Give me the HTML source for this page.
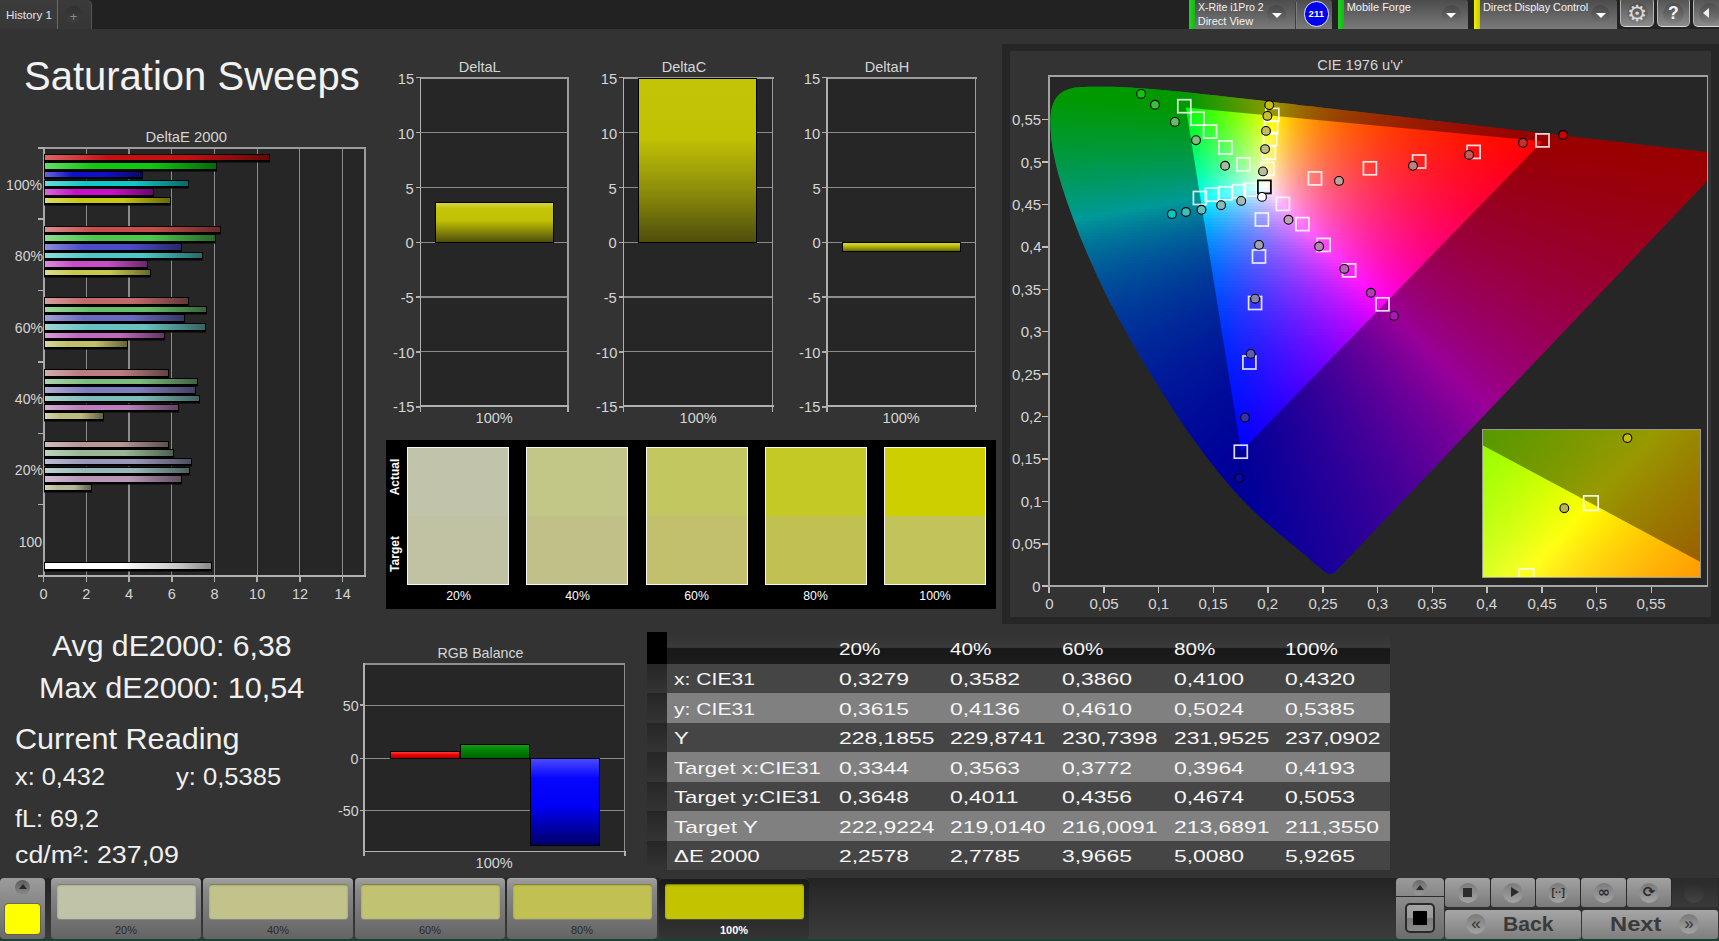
<!DOCTYPE html>
<html><head><meta charset="utf-8"><title>Saturation Sweeps</title>
<style>
html,body{margin:0;padding:0}
body{width:1719px;height:941px;position:relative;overflow:hidden;background:#333;font-family:"Liberation Sans",sans-serif}
.b{position:absolute;display:block}
.t{position:absolute;display:block;white-space:nowrap;line-height:1}
.rows{position:absolute;left:0;top:0;width:100%;height:100%}
.rows i{position:absolute;display:block;height:3px}
</style></head><body>
<div class="b" style="left:0.0px;top:0.0px;width:1719.0px;height:29.0px;background:#222"></div>
<div class="b" style="left:0.0px;top:0.0px;width:57.0px;height:29.0px;background:linear-gradient(#3c3c3c,#383838)"></div>
<div class="b" style="left:57.0px;top:0.0px;width:1.0px;height:29.0px;background:#6a6a6a"></div>
<div class="b" style="left:58.0px;top:0.0px;width:33.0px;height:29.0px;background:linear-gradient(#3a3a3a,#363636);border-top-right-radius:5px;border-right:1px solid #555"></div>
<div class="b" style="left:65.0px;top:6.0px;width:17.0px;height:17.0px;border-radius:50%;background:linear-gradient(#303030,#3e3e3e)"></div>
<span class="t" style="left:69.7px;top:9.5px;font-size:13px;color:#888;">+</span>
<span class="t" style="left:5.5px;top:9.6px;font-size:11.5px;color:#e4e4e4;transform:scaleX(1.014);transform-origin:0 50%;">History 1</span>
<div class="b" style="left:1189.0px;top:0.0px;width:143.0px;height:29.0px;background:linear-gradient(#4c4c4c,#7a7a7a);border-top-right-radius:2px"></div>
<div class="b" style="left:1189.0px;top:0.0px;width:6.0px;height:29.0px;background:linear-gradient(90deg,#1fd31f,#17b817)"></div>
<div class="b" style="left:1267.0px;top:4.5px;width:19.0px;height:19.0px;border-radius:50%;background:linear-gradient(#474747,#5c5c5c 55%,#747474)"></div>
<div class="b" style="left:1271.5px;top:12.5px;border-left:5px solid transparent;border-right:5px solid transparent;border-top:5.6px solid #fff"></div>
<div class="b" style="left:1295.0px;top:2.0px;width:1.0px;height:27.0px;background:#3e3e3e"></div>
<div class="b" style="left:1296.0px;top:2.0px;width:1.0px;height:27.0px;background:#7c7c7c"></div>
<span class="t" style="left:1197.7px;top:1.7px;font-size:11px;color:#f2f2f2;transform:scaleX(0.957);transform-origin:0 50%;">X-Rite i1Pro 2</span>
<span class="t" style="left:1197.7px;top:15.9px;font-size:11px;color:#f2f2f2;">Direct View</span>
<div class="b" style="left:1303.5px;top:1.0px;width:25.5px;height:25.5px;border-radius:50%;background:#0000f0;border:1.2px solid #e8e8ff;box-sizing:border-box"></div>
<span class="t" style="left:1308.6px;top:9.4px;font-size:9.5px;color:#fff;font-weight:bold;">211</span>
<div class="b" style="left:1338.0px;top:0.0px;width:129.5px;height:29.0px;background:linear-gradient(#4c4c4c,#7a7a7a);border-top-right-radius:2px"></div>
<div class="b" style="left:1338.0px;top:0.0px;width:6.0px;height:29.0px;background:linear-gradient(90deg,#1fd31f,#17b817)"></div>
<div class="b" style="left:1441.5px;top:4.5px;width:19.0px;height:19.0px;border-radius:50%;background:linear-gradient(#474747,#5c5c5c 55%,#747474)"></div>
<div class="b" style="left:1446px;top:12.5px;border-left:5px solid transparent;border-right:5px solid transparent;border-top:5.6px solid #fff"></div>
<span class="t" style="left:1346.7px;top:1.7px;font-size:11px;color:#f2f2f2;">Mobile Forge</span>
<div class="b" style="left:1473.5px;top:0.0px;width:143.5px;height:29.0px;background:linear-gradient(#4c4c4c,#7a7a7a);border-top-right-radius:2px"></div>
<div class="b" style="left:1473.5px;top:0.0px;width:6.0px;height:29.0px;background:linear-gradient(90deg,#f0f000,#c8c800)"></div>
<div class="b" style="left:1591.2px;top:4.5px;width:19.0px;height:19.0px;border-radius:50%;background:linear-gradient(#474747,#5c5c5c 55%,#747474)"></div>
<div class="b" style="left:1595.7px;top:12.5px;border-left:5px solid transparent;border-right:5px solid transparent;border-top:5.6px solid #fff"></div>
<span class="t" style="left:1482.5px;top:1.7px;font-size:11px;color:#f2f2f2;transform:scaleX(0.989);transform-origin:0 50%;">Direct Display Control</span>
<div class="b" style="left:1620.0px;top:-3.0px;width:33.5px;height:30.0px;background:linear-gradient(#565656 10%,#8c8c8c);border:1.2px solid #b4b4b4;border-bottom-color:#dadada;border-radius:5px;box-sizing:border-box"></div>
<div class="b" style="left:1626.5px;top:2.5px;width:21.0px;height:21.0px;border-radius:50%;background:linear-gradient(#4e4e4e,#666 55%,#828282)"></div>
<div class="b" style="left:1656.5px;top:-3.0px;width:33.5px;height:30.0px;background:linear-gradient(#565656 10%,#8c8c8c);border:1.2px solid #b4b4b4;border-bottom-color:#dadada;border-radius:5px;box-sizing:border-box"></div>
<div class="b" style="left:1663.0px;top:2.5px;width:21.0px;height:21.0px;border-radius:50%;background:linear-gradient(#4e4e4e,#666 55%,#828282)"></div>
<div class="b" style="left:1692.5px;top:-3.0px;width:33.5px;height:30.0px;background:linear-gradient(#565656 10%,#8c8c8c);border:1.2px solid #b4b4b4;border-bottom-color:#dadada;border-radius:5px;box-sizing:border-box"></div>
<div class="b" style="left:1699.0px;top:2.5px;width:21.0px;height:21.0px;border-radius:50%;background:linear-gradient(#4e4e4e,#666 55%,#828282)"></div>
<span class="t" style="left:1625px;top:1.5px;font-size:22.5px;line-height:22px;width:24px;text-align:center;color:#d8d8d8;font-family:'DejaVu Sans',sans-serif">⚙</span>
<span class="t" style="left:1668.0px;top:4.8px;font-size:17.5px;color:#f4f4f4;font-weight:bold;">?</span>
<div class="b" style="left:1702.8px;top:7.6px;border-top:5px solid transparent;border-bottom:5px solid transparent;border-right:6px solid #f0f0f0"></div>
<span class="t" style="left:24.0px;top:55.6px;font-size:40px;color:#f2f2f2;">Saturation Sweeps</span>
<div class="b" style="left:45.0px;top:149.0px;width:319.5px;height:426.5px;background:#262626"></div>
<div class="b" style="left:85.7px;top:149.0px;width:1.2px;height:426.5px;background:#8c8c8c"></div>
<div class="b" style="left:128.4px;top:149.0px;width:1.2px;height:426.5px;background:#8c8c8c"></div>
<div class="b" style="left:171.2px;top:149.0px;width:1.2px;height:426.5px;background:#8c8c8c"></div>
<div class="b" style="left:213.9px;top:149.0px;width:1.2px;height:426.5px;background:#8c8c8c"></div>
<div class="b" style="left:256.6px;top:149.0px;width:1.2px;height:426.5px;background:#8c8c8c"></div>
<div class="b" style="left:299.3px;top:149.0px;width:1.2px;height:426.5px;background:#8c8c8c"></div>
<div class="b" style="left:342.0px;top:149.0px;width:1.2px;height:426.5px;background:#8c8c8c"></div>
<div class="b" style="left:43.0px;top:147.0px;width:323.0px;height:2.0px;background:#9c9c9c"></div>
<div class="b" style="left:364.2px;top:147.0px;width:1.8px;height:430.0px;background:#9c9c9c"></div>
<div class="b" style="left:43.2px;top:147.0px;width:1.7px;height:430.0px;background:#a8a8a8"></div>
<div class="b" style="left:43.0px;top:575.2px;width:323.0px;height:2.0px;background:#b0b0b0"></div>
<div class="b" style="left:38.0px;top:147.0px;width:6.0px;height:1.6px;background:#b0b0b0"></div>
<div class="b" style="left:38.0px;top:218.4px;width:6.0px;height:1.6px;background:#b0b0b0"></div>
<div class="b" style="left:38.0px;top:289.7px;width:6.0px;height:1.6px;background:#b0b0b0"></div>
<div class="b" style="left:38.0px;top:361.1px;width:6.0px;height:1.6px;background:#b0b0b0"></div>
<div class="b" style="left:38.0px;top:432.5px;width:6.0px;height:1.6px;background:#b0b0b0"></div>
<div class="b" style="left:38.0px;top:503.9px;width:6.0px;height:1.6px;background:#b0b0b0"></div>
<div class="b" style="left:38.0px;top:575.2px;width:6.0px;height:1.6px;background:#b0b0b0"></div>
<div class="b" style="left:42.8px;top:577.0px;width:1.6px;height:5.0px;background:#b0b0b0"></div>
<span class="t" style="left:39.6px;top:587.0px;font-size:14.5px;color:#d6d6d6;">0</span>
<div class="b" style="left:85.5px;top:577.0px;width:1.6px;height:5.0px;background:#b0b0b0"></div>
<span class="t" style="left:82.3px;top:587.0px;font-size:14.5px;color:#d6d6d6;">2</span>
<div class="b" style="left:128.2px;top:577.0px;width:1.6px;height:5.0px;background:#b0b0b0"></div>
<span class="t" style="left:125.0px;top:587.0px;font-size:14.5px;color:#d6d6d6;">4</span>
<div class="b" style="left:171.0px;top:577.0px;width:1.6px;height:5.0px;background:#b0b0b0"></div>
<span class="t" style="left:167.7px;top:587.0px;font-size:14.5px;color:#d6d6d6;">6</span>
<div class="b" style="left:213.7px;top:577.0px;width:1.6px;height:5.0px;background:#b0b0b0"></div>
<span class="t" style="left:210.4px;top:587.0px;font-size:14.5px;color:#d6d6d6;">8</span>
<div class="b" style="left:256.4px;top:577.0px;width:1.6px;height:5.0px;background:#b0b0b0"></div>
<span class="t" style="left:249.1px;top:587.0px;font-size:14.5px;color:#d6d6d6;">10</span>
<div class="b" style="left:299.1px;top:577.0px;width:1.6px;height:5.0px;background:#b0b0b0"></div>
<span class="t" style="left:291.9px;top:587.0px;font-size:14.5px;color:#d6d6d6;">12</span>
<div class="b" style="left:341.8px;top:577.0px;width:1.6px;height:5.0px;background:#b0b0b0"></div>
<span class="t" style="left:334.6px;top:587.0px;font-size:14.5px;color:#d6d6d6;">14</span>
<span class="t" style="left:5.4px;top:177.7px;font-size:14.5px;color:#d6d6d6;transform:scaleX(0.970);transform-origin:100% 50%;">100%</span>
<span class="t" style="left:13.5px;top:249.1px;font-size:14.5px;color:#d6d6d6;transform:scaleX(0.970);transform-origin:100% 50%;">80%</span>
<span class="t" style="left:13.5px;top:320.5px;font-size:14.5px;color:#d6d6d6;transform:scaleX(0.970);transform-origin:100% 50%;">60%</span>
<span class="t" style="left:13.5px;top:391.8px;font-size:14.5px;color:#d6d6d6;transform:scaleX(0.970);transform-origin:100% 50%;">40%</span>
<span class="t" style="left:13.5px;top:463.2px;font-size:14.5px;color:#d6d6d6;transform:scaleX(0.970);transform-origin:100% 50%;">20%</span>
<span class="t" style="left:18.3px;top:534.6px;font-size:14.5px;color:#d6d6d6;transform:scaleX(0.970);transform-origin:100% 50%;">100</span>
<span class="t" style="left:144.7px;top:129.3px;font-size:15px;color:#d6d6d6;transform:scaleX(0.987);transform-origin:50% 50%;">DeltaE 2000</span>
<div class="b" style="left:44.4px;top:153.6px;width:226.0px;height:7.5px;box-sizing:border-box;border:1px solid #000;box-shadow:0 1.5px 0 #050505;background:linear-gradient(90deg,#dc6666,#c81010 28%,#c81010 62%,#680808)"></div>
<div class="b" style="left:44.4px;top:162.2px;width:172.7px;height:7.5px;box-sizing:border-box;border:1px solid #000;box-shadow:0 1.5px 0 #050505;background:linear-gradient(90deg,#66dc66,#10c810 28%,#10c810 62%,#086808)"></div>
<div class="b" style="left:44.4px;top:170.8px;width:98.8px;height:7.5px;box-sizing:border-box;border:1px solid #000;box-shadow:0 1.5px 0 #050505;background:linear-gradient(90deg,#6666dc,#1010c8 28%,#1010c8 62%,#080868)"></div>
<div class="b" style="left:44.4px;top:179.5px;width:144.9px;height:7.5px;box-sizing:border-box;border:1px solid #000;box-shadow:0 1.5px 0 #050505;background:linear-gradient(90deg,#66dcdc,#10c8c8 28%,#10c8c8 62%,#086868)"></div>
<div class="b" style="left:44.4px;top:188.1px;width:109.8px;height:7.5px;box-sizing:border-box;border:1px solid #000;box-shadow:0 1.5px 0 #050505;background:linear-gradient(90deg,#dc66dc,#c810c8 28%,#c810c8 62%,#680868)"></div>
<div class="b" style="left:44.4px;top:196.7px;width:126.4px;height:7.5px;box-sizing:border-box;border:1px solid #000;box-shadow:0 1.5px 0 #050505;background:linear-gradient(90deg,#dcdc66,#c8c810 28%,#c8c810 62%,#686808)"></div>
<div class="b" style="left:44.4px;top:225.8px;width:176.7px;height:7.5px;box-sizing:border-box;border:1px solid #000;box-shadow:0 1.5px 0 #050505;background:linear-gradient(90deg,#dc8d8d,#c84c4c 28%,#c84c4c 62%,#682828)"></div>
<div class="b" style="left:44.4px;top:234.4px;width:171.8px;height:7.5px;box-sizing:border-box;border:1px solid #000;box-shadow:0 1.5px 0 #050505;background:linear-gradient(90deg,#8ddc8d,#4cc84c 28%,#4cc84c 62%,#286828)"></div>
<div class="b" style="left:44.4px;top:243.0px;width:138.1px;height:7.5px;box-sizing:border-box;border:1px solid #000;box-shadow:0 1.5px 0 #050505;background:linear-gradient(90deg,#8d8ddc,#4c4cc8 28%,#4c4cc8 62%,#282868)"></div>
<div class="b" style="left:44.4px;top:251.7px;width:158.9px;height:7.5px;box-sizing:border-box;border:1px solid #000;box-shadow:0 1.5px 0 #050505;background:linear-gradient(90deg,#8ddcdc,#4cc8c8 28%,#4cc8c8 62%,#286868)"></div>
<div class="b" style="left:44.4px;top:260.3px;width:103.7px;height:7.5px;box-sizing:border-box;border:1px solid #000;box-shadow:0 1.5px 0 #050505;background:linear-gradient(90deg,#dc8ddc,#c84cc8 28%,#c84cc8 62%,#682868)"></div>
<div class="b" style="left:44.4px;top:268.9px;width:106.8px;height:7.5px;box-sizing:border-box;border:1px solid #000;box-shadow:0 1.5px 0 #050505;background:linear-gradient(90deg,#dcdc8d,#c8c84c 28%,#c8c84c 62%,#686828)"></div>
<div class="b" style="left:44.4px;top:297.2px;width:144.9px;height:7.5px;box-sizing:border-box;border:1px solid #000;box-shadow:0 1.5px 0 #050505;background:linear-gradient(90deg,#d79f9f,#c06969 28%,#c06969 62%,#643636)"></div>
<div class="b" style="left:44.4px;top:305.8px;width:162.9px;height:7.5px;box-sizing:border-box;border:1px solid #000;box-shadow:0 1.5px 0 #050505;background:linear-gradient(90deg,#9fd79f,#69c069 28%,#69c069 62%,#366436)"></div>
<div class="b" style="left:44.4px;top:314.4px;width:140.9px;height:7.5px;box-sizing:border-box;border:1px solid #000;box-shadow:0 1.5px 0 #050505;background:linear-gradient(90deg,#9f9fd7,#6969c0 28%,#6969c0 62%,#363664)"></div>
<div class="b" style="left:44.4px;top:323.1px;width:162.0px;height:7.5px;box-sizing:border-box;border:1px solid #000;box-shadow:0 1.5px 0 #050505;background:linear-gradient(90deg,#9fd7d7,#69c0c0 28%,#69c0c0 62%,#366464)"></div>
<div class="b" style="left:44.4px;top:331.7px;width:120.8px;height:7.5px;box-sizing:border-box;border:1px solid #000;box-shadow:0 1.5px 0 #050505;background:linear-gradient(90deg,#d79fd7,#c069c0 28%,#c069c0 62%,#643664)"></div>
<div class="b" style="left:44.4px;top:340.3px;width:83.9px;height:7.5px;box-sizing:border-box;border:1px solid #000;box-shadow:0 1.5px 0 #050505;background:linear-gradient(90deg,#d7d79f,#c0c069 28%,#c0c069 62%,#646436)"></div>
<div class="b" style="left:44.4px;top:369.0px;width:124.9px;height:7.5px;box-sizing:border-box;border:1px solid #000;box-shadow:0 1.5px 0 #050505;background:linear-gradient(90deg,#d4adad,#bc7e7e 28%,#bc7e7e 62%,#624242)"></div>
<div class="b" style="left:44.4px;top:377.6px;width:153.6px;height:7.5px;box-sizing:border-box;border:1px solid #000;box-shadow:0 1.5px 0 #050505;background:linear-gradient(90deg,#add4ad,#7ebc7e 28%,#7ebc7e 62%,#426242)"></div>
<div class="b" style="left:44.4px;top:386.2px;width:151.5px;height:7.5px;box-sizing:border-box;border:1px solid #000;box-shadow:0 1.5px 0 #050505;background:linear-gradient(90deg,#adadd4,#7e7ebc 28%,#7e7ebc 62%,#424262)"></div>
<div class="b" style="left:44.4px;top:394.9px;width:155.8px;height:7.5px;box-sizing:border-box;border:1px solid #000;box-shadow:0 1.5px 0 #050505;background:linear-gradient(90deg,#add4d4,#7ebcbc 28%,#7ebcbc 62%,#426262)"></div>
<div class="b" style="left:44.4px;top:403.5px;width:135.0px;height:7.5px;box-sizing:border-box;border:1px solid #000;box-shadow:0 1.5px 0 #050505;background:linear-gradient(90deg,#d4add4,#bc7ebc 28%,#bc7ebc 62%,#624262)"></div>
<div class="b" style="left:44.4px;top:412.1px;width:59.5px;height:7.5px;box-sizing:border-box;border:1px solid #000;box-shadow:0 1.5px 0 #050505;background:linear-gradient(90deg,#d4d4ad,#bcbc7e 28%,#bcbc7e 62%,#626242)"></div>
<div class="b" style="left:44.4px;top:440.7px;width:124.8px;height:7.5px;box-sizing:border-box;border:1px solid #000;box-shadow:0 1.5px 0 #050505;background:linear-gradient(90deg,#d2bcbc,#b89797 28%,#b89797 62%,#604e4e)"></div>
<div class="b" style="left:44.4px;top:449.3px;width:129.4px;height:7.5px;box-sizing:border-box;border:1px solid #000;box-shadow:0 1.5px 0 #050505;background:linear-gradient(90deg,#bcd2bc,#97b897 28%,#97b897 62%,#4e604e)"></div>
<div class="b" style="left:44.4px;top:457.9px;width:147.7px;height:7.5px;box-sizing:border-box;border:1px solid #000;box-shadow:0 1.5px 0 #050505;background:linear-gradient(90deg,#bcbcd2,#9797b8 28%,#9797b8 62%,#4e4e60)"></div>
<div class="b" style="left:44.4px;top:466.6px;width:145.8px;height:7.5px;box-sizing:border-box;border:1px solid #000;box-shadow:0 1.5px 0 #050505;background:linear-gradient(90deg,#bcd2d2,#97b8b8 28%,#97b8b8 62%,#4e6060)"></div>
<div class="b" style="left:44.4px;top:475.2px;width:137.9px;height:7.5px;box-sizing:border-box;border:1px solid #000;box-shadow:0 1.5px 0 #050505;background:linear-gradient(90deg,#d2bcd2,#b897b8 28%,#b897b8 62%,#604e60)"></div>
<div class="b" style="left:44.4px;top:483.8px;width:47.6px;height:7.5px;box-sizing:border-box;border:1px solid #000;box-shadow:0 1.5px 0 #050505;background:linear-gradient(90deg,#d2d2bc,#b8b897 28%,#b8b897 62%,#60604e)"></div>
<div class="b" style="left:44.4px;top:562.4px;width:167.2px;height:7.9px;box-sizing:border-box;border:1px solid #000;box-shadow:0 1.5px 0 #050505;background:linear-gradient(90deg,#fff,#fff 45%,#c8c8c8 80%,#888)"></div>
<div class="b" style="left:420.5px;top:78.0px;width:147.5px;height:328.0px;background:#262626"></div>
<div class="b" style="left:420.5px;top:131.8px;width:147.5px;height:1.3px;background:#8c8c8c"></div>
<div class="b" style="left:420.5px;top:186.7px;width:147.5px;height:1.3px;background:#8c8c8c"></div>
<div class="b" style="left:420.5px;top:241.6px;width:147.5px;height:1.3px;background:#8c8c8c"></div>
<div class="b" style="left:420.5px;top:296.4px;width:147.5px;height:1.3px;background:#8c8c8c"></div>
<div class="b" style="left:420.5px;top:351.2px;width:147.5px;height:1.3px;background:#8c8c8c"></div>
<div class="b" style="left:419.5px;top:76.8px;width:149.5px;height:1.8px;background:#9c9c9c"></div>
<div class="b" style="left:567.2px;top:77.0px;width:1.8px;height:330.0px;background:#9c9c9c"></div>
<div class="b" style="left:419.5px;top:77.0px;width:1.8px;height:330.0px;background:#b0b0b0"></div>
<div class="b" style="left:419.5px;top:405.2px;width:149.5px;height:1.6px;background:#b0b0b0"></div>
<div class="b" style="left:419.7px;top:406.5px;width:1.6px;height:5.0px;background:#b0b0b0"></div>
<div class="b" style="left:567.2px;top:406.5px;width:1.6px;height:5.0px;background:#b0b0b0"></div>
<div class="b" style="left:415.5px;top:76.9px;width:5.0px;height:1.5px;background:#b0b0b0"></div>
<span class="t" style="left:396.8px;top:70.9px;font-size:15.5px;color:#d6d6d6;transform:scaleX(0.950);transform-origin:100% 50%;">15</span>
<div class="b" style="left:415.5px;top:131.8px;width:5.0px;height:1.5px;background:#b0b0b0"></div>
<span class="t" style="left:396.8px;top:125.7px;font-size:15.5px;color:#d6d6d6;transform:scaleX(0.950);transform-origin:100% 50%;">10</span>
<div class="b" style="left:415.5px;top:186.6px;width:5.0px;height:1.5px;background:#b0b0b0"></div>
<span class="t" style="left:405.4px;top:180.6px;font-size:15.5px;color:#d6d6d6;transform:scaleX(0.950);transform-origin:100% 50%;">5</span>
<div class="b" style="left:415.5px;top:241.5px;width:5.0px;height:1.5px;background:#b0b0b0"></div>
<span class="t" style="left:405.4px;top:235.4px;font-size:15.5px;color:#d6d6d6;transform:scaleX(0.950);transform-origin:100% 50%;">0</span>
<div class="b" style="left:415.5px;top:296.3px;width:5.0px;height:1.5px;background:#b0b0b0"></div>
<span class="t" style="left:400.2px;top:290.3px;font-size:15.5px;color:#d6d6d6;transform:scaleX(0.950);transform-origin:100% 50%;">-5</span>
<div class="b" style="left:415.5px;top:351.2px;width:5.0px;height:1.5px;background:#b0b0b0"></div>
<span class="t" style="left:391.6px;top:345.1px;font-size:15.5px;color:#d6d6d6;transform:scaleX(0.950);transform-origin:100% 50%;">-10</span>
<div class="b" style="left:415.5px;top:406.0px;width:5.0px;height:1.5px;background:#b0b0b0"></div>
<span class="t" style="left:391.6px;top:399.0px;font-size:15.5px;color:#d6d6d6;transform:scaleX(0.950);transform-origin:100% 50%;">-15</span>
<span class="t" style="left:458.3px;top:59.3px;font-size:15px;color:#d6d6d6;transform:scaleX(0.970);transform-origin:50% 50%;">DeltaL</span>
<span class="t" style="left:475.1px;top:410.1px;font-size:15px;color:#d6d6d6;transform:scaleX(0.970);transform-origin:50% 50%;">100%</span>
<div class="b" style="left:435.3px;top:202.2px;width:118.3px;height:40.8px;box-sizing:border-box;border:1px solid #000;background:linear-gradient(#d6d64e,#c4c408 14%,#c0c004 45%,#4e4e0c)"></div>
<div class="b" style="left:623.5px;top:78.0px;width:149.0px;height:328.0px;background:#262626"></div>
<div class="b" style="left:623.5px;top:131.8px;width:149.0px;height:1.3px;background:#8c8c8c"></div>
<div class="b" style="left:623.5px;top:186.7px;width:149.0px;height:1.3px;background:#8c8c8c"></div>
<div class="b" style="left:623.5px;top:241.6px;width:149.0px;height:1.3px;background:#8c8c8c"></div>
<div class="b" style="left:623.5px;top:296.4px;width:149.0px;height:1.3px;background:#8c8c8c"></div>
<div class="b" style="left:623.5px;top:351.2px;width:149.0px;height:1.3px;background:#8c8c8c"></div>
<div class="b" style="left:622.5px;top:76.8px;width:151.0px;height:1.8px;background:#9c9c9c"></div>
<div class="b" style="left:771.7px;top:77.0px;width:1.8px;height:330.0px;background:#9c9c9c"></div>
<div class="b" style="left:622.5px;top:77.0px;width:1.8px;height:330.0px;background:#b0b0b0"></div>
<div class="b" style="left:622.5px;top:405.2px;width:151.0px;height:1.6px;background:#b0b0b0"></div>
<div class="b" style="left:622.7px;top:406.5px;width:1.6px;height:5.0px;background:#b0b0b0"></div>
<div class="b" style="left:771.7px;top:406.5px;width:1.6px;height:5.0px;background:#b0b0b0"></div>
<div class="b" style="left:618.5px;top:76.9px;width:5.0px;height:1.5px;background:#b0b0b0"></div>
<span class="t" style="left:599.8px;top:70.9px;font-size:15.5px;color:#d6d6d6;transform:scaleX(0.950);transform-origin:100% 50%;">15</span>
<div class="b" style="left:618.5px;top:131.8px;width:5.0px;height:1.5px;background:#b0b0b0"></div>
<span class="t" style="left:599.8px;top:125.7px;font-size:15.5px;color:#d6d6d6;transform:scaleX(0.950);transform-origin:100% 50%;">10</span>
<div class="b" style="left:618.5px;top:186.6px;width:5.0px;height:1.5px;background:#b0b0b0"></div>
<span class="t" style="left:608.4px;top:180.6px;font-size:15.5px;color:#d6d6d6;transform:scaleX(0.950);transform-origin:100% 50%;">5</span>
<div class="b" style="left:618.5px;top:241.5px;width:5.0px;height:1.5px;background:#b0b0b0"></div>
<span class="t" style="left:608.4px;top:235.4px;font-size:15.5px;color:#d6d6d6;transform:scaleX(0.950);transform-origin:100% 50%;">0</span>
<div class="b" style="left:618.5px;top:296.3px;width:5.0px;height:1.5px;background:#b0b0b0"></div>
<span class="t" style="left:603.2px;top:290.3px;font-size:15.5px;color:#d6d6d6;transform:scaleX(0.950);transform-origin:100% 50%;">-5</span>
<div class="b" style="left:618.5px;top:351.2px;width:5.0px;height:1.5px;background:#b0b0b0"></div>
<span class="t" style="left:594.6px;top:345.1px;font-size:15.5px;color:#d6d6d6;transform:scaleX(0.950);transform-origin:100% 50%;">-10</span>
<div class="b" style="left:618.5px;top:406.0px;width:5.0px;height:1.5px;background:#b0b0b0"></div>
<span class="t" style="left:594.6px;top:399.0px;font-size:15.5px;color:#d6d6d6;transform:scaleX(0.950);transform-origin:100% 50%;">-15</span>
<span class="t" style="left:661.1px;top:59.3px;font-size:15px;color:#d6d6d6;transform:scaleX(0.970);transform-origin:50% 50%;">DeltaC</span>
<span class="t" style="left:678.8px;top:410.1px;font-size:15px;color:#d6d6d6;transform:scaleX(0.970);transform-origin:50% 50%;">100%</span>
<div class="b" style="left:638.4px;top:77.5px;width:118.6px;height:165.5px;box-sizing:border-box;border:1px solid #000;background:linear-gradient(#c4c406,#c2c204 36%,#8a8a0a 70%,#4e4e0c)"></div>
<div class="b" style="left:827.0px;top:78.0px;width:148.5px;height:328.0px;background:#262626"></div>
<div class="b" style="left:827.0px;top:131.8px;width:148.5px;height:1.3px;background:#8c8c8c"></div>
<div class="b" style="left:827.0px;top:186.7px;width:148.5px;height:1.3px;background:#8c8c8c"></div>
<div class="b" style="left:827.0px;top:241.6px;width:148.5px;height:1.3px;background:#8c8c8c"></div>
<div class="b" style="left:827.0px;top:296.4px;width:148.5px;height:1.3px;background:#8c8c8c"></div>
<div class="b" style="left:827.0px;top:351.2px;width:148.5px;height:1.3px;background:#8c8c8c"></div>
<div class="b" style="left:826.0px;top:76.8px;width:150.5px;height:1.8px;background:#9c9c9c"></div>
<div class="b" style="left:974.7px;top:77.0px;width:1.8px;height:330.0px;background:#9c9c9c"></div>
<div class="b" style="left:826.0px;top:77.0px;width:1.8px;height:330.0px;background:#b0b0b0"></div>
<div class="b" style="left:826.0px;top:405.2px;width:150.5px;height:1.6px;background:#b0b0b0"></div>
<div class="b" style="left:826.2px;top:406.5px;width:1.6px;height:5.0px;background:#b0b0b0"></div>
<div class="b" style="left:974.7px;top:406.5px;width:1.6px;height:5.0px;background:#b0b0b0"></div>
<div class="b" style="left:822.0px;top:76.9px;width:5.0px;height:1.5px;background:#b0b0b0"></div>
<span class="t" style="left:803.3px;top:70.9px;font-size:15.5px;color:#d6d6d6;transform:scaleX(0.950);transform-origin:100% 50%;">15</span>
<div class="b" style="left:822.0px;top:131.8px;width:5.0px;height:1.5px;background:#b0b0b0"></div>
<span class="t" style="left:803.3px;top:125.7px;font-size:15.5px;color:#d6d6d6;transform:scaleX(0.950);transform-origin:100% 50%;">10</span>
<div class="b" style="left:822.0px;top:186.6px;width:5.0px;height:1.5px;background:#b0b0b0"></div>
<span class="t" style="left:811.9px;top:180.6px;font-size:15.5px;color:#d6d6d6;transform:scaleX(0.950);transform-origin:100% 50%;">5</span>
<div class="b" style="left:822.0px;top:241.5px;width:5.0px;height:1.5px;background:#b0b0b0"></div>
<span class="t" style="left:811.9px;top:235.4px;font-size:15.5px;color:#d6d6d6;transform:scaleX(0.950);transform-origin:100% 50%;">0</span>
<div class="b" style="left:822.0px;top:296.3px;width:5.0px;height:1.5px;background:#b0b0b0"></div>
<span class="t" style="left:806.7px;top:290.3px;font-size:15.5px;color:#d6d6d6;transform:scaleX(0.950);transform-origin:100% 50%;">-5</span>
<div class="b" style="left:822.0px;top:351.2px;width:5.0px;height:1.5px;background:#b0b0b0"></div>
<span class="t" style="left:798.1px;top:345.1px;font-size:15.5px;color:#d6d6d6;transform:scaleX(0.950);transform-origin:100% 50%;">-10</span>
<div class="b" style="left:822.0px;top:406.0px;width:5.0px;height:1.5px;background:#b0b0b0"></div>
<span class="t" style="left:798.1px;top:399.0px;font-size:15.5px;color:#d6d6d6;transform:scaleX(0.950);transform-origin:100% 50%;">-15</span>
<span class="t" style="left:864.1px;top:59.3px;font-size:15px;color:#d6d6d6;transform:scaleX(0.970);transform-origin:50% 50%;">DeltaH</span>
<span class="t" style="left:882.1px;top:410.1px;font-size:15px;color:#d6d6d6;transform:scaleX(0.970);transform-origin:50% 50%;">100%</span>
<div class="b" style="left:841.5px;top:241.6px;width:119.0px;height:10.7px;box-sizing:border-box;border:1px solid #000;background:linear-gradient(#d8d850,#c2c208 35%,#6a6a0a)"></div>
<div class="b" style="left:386.0px;top:440.0px;width:610.0px;height:168.7px;background:#000"></div>
<div class="b" style="left:407.0px;top:447.0px;width:102.3px;height:138.3px;box-sizing:border-box;border:1px solid #f4f4f4;background:linear-gradient(#c1c4aa 50%,#c1c2a4 50%)"></div>
<span class="t" style="left:445.7px;top:590.2px;font-size:12.5px;color:#fff;transform:scaleX(0.980);transform-origin:50% 50%;">20%</span>
<div class="b" style="left:526.2px;top:447.0px;width:102.3px;height:138.3px;box-sizing:border-box;border:1px solid #f4f4f4;background:linear-gradient(#c2c788 50%,#c2c089 50%)"></div>
<span class="t" style="left:564.9px;top:590.2px;font-size:12.5px;color:#fff;transform:scaleX(0.980);transform-origin:50% 50%;">40%</span>
<div class="b" style="left:645.5px;top:447.0px;width:102.3px;height:138.3px;box-sizing:border-box;border:1px solid #f4f4f4;background:linear-gradient(#c3c760 50%,#c2c06d 50%)"></div>
<span class="t" style="left:684.2px;top:590.2px;font-size:12.5px;color:#fff;transform:scaleX(0.980);transform-origin:50% 50%;">60%</span>
<div class="b" style="left:764.8px;top:447.0px;width:102.3px;height:138.3px;box-sizing:border-box;border:1px solid #f4f4f4;background:linear-gradient(#c5c926 50%,#c1c052 50%)"></div>
<span class="t" style="left:803.4px;top:590.2px;font-size:12.5px;color:#fff;transform:scaleX(0.980);transform-origin:50% 50%;">80%</span>
<div class="b" style="left:884.0px;top:447.0px;width:102.3px;height:138.3px;box-sizing:border-box;border:1px solid #f4f4f4;background:linear-gradient(#cdcf00 50%,#c3c35c 50%)"></div>
<span class="t" style="left:919.2px;top:590.2px;font-size:12.5px;color:#fff;transform:scaleX(0.980);transform-origin:50% 50%;">100%</span>
<span class="t" style="left:375px;top:470.5px;width:40px;text-align:center;font-size:12px;font-weight:bold;color:#fff;transform:rotate(-90deg)">Actual</span>
<span class="t" style="left:375px;top:547.5px;width:40px;text-align:center;font-size:12px;font-weight:bold;color:#fff;transform:rotate(-90deg)">Target</span>
<div class="b" style="left:1002.0px;top:44.0px;width:717.0px;height:580.0px;background:#262626"></div>
<div class="b" style="left:1010.0px;top:51.0px;width:701.0px;height:566.0px;background:#333"></div>
<div class="b" style="left:1048.0px;top:75.0px;width:660.0px;height:511.0px;background:#a2a2a2"></div>
<span class="t" style="left:1315.9px;top:56.8px;font-size:15px;color:#d6d6d6;transform:scaleX(0.974);transform-origin:50% 50%;">CIE 1976 u'v'</span>
<div id="cie" class="b" style="left:1050px;top:77px;width:657px;height:509px;overflow:hidden;background:#262626">
<div class="rows" style="clip-path:polygon(286.0px 493.9px,284.6px 495.2px,283.2px 496.1px,281.8px 496.7px,280.4px 497.0px,278.9px 496.9px,277.4px 496.4px,275.9px 495.6px,274.4px 494.5px,268.5px 489.5px,266.6px 488.0px,264.9px 486.5px,263.0px 484.9px,260.8px 483.1px,258.5px 481.1px,256.0px 478.9px,253.3px 476.7px,250.4px 474.2px,247.2px 471.6px,243.6px 468.6px,239.7px 465.4px,235.6px 462.0px,231.2px 458.4px,226.6px 454.5px,221.7px 450.2px,216.3px 445.5px,210.6px 440.4px,204.6px 434.7px,198.2px 428.5px,191.5px 421.7px,184.0px 413.5px,175.6px 403.8px,166.5px 392.8px,156.8px 380.4px,146.5px 366.6px,135.7px 351.4px,124.6px 335.0px,113.1px 317.1px,101.3px 298.1px,89.7px 278.5px,78.1px 258.4px,66.7px 237.8px,56.1px 217.4px,46.5px 197.3px,37.7px 177.5px,29.8px 158.8px,23.0px 141.1px,17.0px 124.5px,12.0px 109.3px,8.1px 95.9px,5.1px 83.8px,2.8px 72.6px,1.3px 61.7px,0.6px 51.6px,0.4px 43.0px,0.8px 36.3px,1.8px 31.0px,3.2px 26.5px,5.0px 22.6px,7.3px 19.5px,10.0px 16.8px,13.3px 14.5px,17.0px 12.8px,21.0px 11.4px,25.0px 10.6px,29.3px 10.2px,34.0px 9.9px,39.4px 9.7px,45.2px 9.7px,51.0px 9.7px,56.6px 9.7px,62.3px 9.8px,68.0px 9.9px,73.9px 10.2px,79.8px 10.5px,85.8px 10.9px,91.6px 11.3px,97.4px 11.7px,103.3px 12.2px,109.5px 12.7px,115.8px 13.3px,122.4px 13.9px,129.2px 14.6px,136.2px 15.3px,143.4px 16.1px,150.9px 16.9px,158.6px 17.7px,166.6px 18.6px,174.9px 19.5px,183.5px 20.5px,192.4px 21.5px,201.5px 22.5px,211.0px 23.6px,220.8px 24.7px,231.0px 25.9px,241.4px 27.1px,252.1px 28.4px,263.2px 29.6px,274.6px 31.0px,286.3px 32.3px,298.3px 33.7px,310.5px 35.1px,323.1px 36.6px,335.9px 38.1px,348.9px 39.6px,362.0px 41.1px,375.3px 42.7px,388.7px 44.2px,402.0px 45.8px,415.1px 47.3px,428.0px 48.8px,440.8px 50.3px,453.6px 51.8px,466.3px 53.2px,478.5px 54.6px,490.4px 56.0px,501.8px 57.3px,512.7px 58.6px,523.3px 59.8px,533.4px 61.0px,543.0px 62.1px,551.4px 63.1px,559.2px 64.0px,568.7px 65.1px,581.3px 66.5px,595.4px 68.2px,608.4px 69.7px,618.8px 70.9px,628.0px 72.0px,637.4px 73.1px,667.9px 76.6px,681.6px 78.2px)">
<i style="left:12px;top:9px;width:102px;background:linear-gradient(90deg,#00ff00,#00ff00,#00ff00,#00ff00,#00ff00,#00ff00,#00ff00,#00ff00,#00ff00,#00ff00,#00ff00,#00ff00,#00ff00,#00ff00,#00ff00,#00ff00,#00ff00,#00ff00)"></i>
<i style="left:6px;top:12px;width:138px;background:linear-gradient(90deg,#00ff00,#00ff00,#00ff00,#00ff00,#00ff00,#00ff00,#00ff00,#00ff00,#00ff00,#00ff00,#00ff00,#00ff00,#00ff00,#00ff00,#00ff00,#00ff00,#00ff00,#00ff00,#00ff00,#00ff00,#00ff00,#00ff00,#0bff00,#18ff00)"></i>
<i style="left:0px;top:15px;width:174px;background:linear-gradient(90deg,#00ff00,#00ff00,#00ff00,#00ff00,#00ff00,#00ff00,#00ff00,#00ff00,#00ff00,#00ff00,#00ff00,#00ff00,#00ff00,#00ff00,#00ff00,#00ff00,#00ff00,#00ff00,#00ff00,#00ff00,#00ff00,#00ff00,#00ff00,#0aff00,#17ff00,#25ff00,#34ff00,#43ff00,#52ff00,#62ff00)"></i>
<i style="left:0px;top:18px;width:198px;background:linear-gradient(90deg,#00ff03,#00ff02,#00ff01,#00ff00,#00ff00,#00ff00,#00ff00,#00ff00,#00ff00,#00ff00,#00ff00,#00ff00,#00ff00,#00ff00,#00ff00,#00ff00,#00ff00,#00ff00,#00ff00,#00ff00,#00ff00,#00ff00,#00ff00,#09ff00,#16ff00,#24ff00,#33ff00,#42ff00,#51ff00,#61ff00,#72ff00,#83ff00,#95ff00,#a7ff00)"></i>
<i style="left:0px;top:21px;width:222px;background:linear-gradient(90deg,#00ff07,#00ff06,#00ff06,#00ff05,#00ff04,#00ff03,#00ff02,#00ff01,#00ff00,#00ff00,#00ff00,#00ff00,#00ff00,#00ff00,#00ff00,#00ff00,#00ff00,#00ff00,#00ff00,#00ff00,#00ff00,#00ff00,#00ff00,#08ff00,#15ff00,#24ff00,#32ff00,#41ff00,#51ff00,#61ff00,#72ff00,#83ff00,#95ff00,#a7ff00,#baff00,#ceff00,#e3ff00,#f8ff00)"></i>
<i style="left:0px;top:24px;width:252px;background:linear-gradient(90deg,#00ff0c,#00ff0b,#00ff0a,#00ff0a,#00ff09,#00ff08,#00ff07,#00ff06,#00ff05,#00ff05,#00ff04,#00ff03,#00ff02,#00ff01,#00ff00,#00ff00,#00ff00,#00ff00,#00ff00,#00ff00,#00ff00,#00ff00,#00ff00,#07ff00,#14ff00,#23ff00,#31ff00,#41ff00,#50ff00,#61ff00,#71ff00,#83ff00,#95ff00,#a7ff00,#bbff00,#cfff00,#e4ff00,#f9ff00,#ffef00,#ffdc00,#ffcb00,#ffbd00,#ffaf00)"></i>
<i style="left:0px;top:27px;width:276px;background:linear-gradient(90deg,#00ff11,#00ff10,#00ff0f,#00ff0e,#00ff0e,#00ff0d,#00ff0c,#00ff0b,#00ff0b,#00ff0a,#00ff09,#00ff08,#00ff07,#00ff06,#00ff05,#00ff04,#00ff03,#00ff02,#00ff01,#00ff00,#00ff00,#00ff00,#00ff00,#06ff00,#14ff00,#22ff00,#31ff00,#40ff00,#50ff00,#60ff00,#71ff00,#83ff00,#95ff00,#a8ff00,#bbff00,#cfff00,#e4ff00,#faff00,#ffee00,#ffdb00,#ffca00,#ffbb00,#ffae00,#ffa200,#ff9700,#ff8d00,#ff8400)"></i>
<i style="left:0px;top:30px;width:300px;background:linear-gradient(90deg,#00ff15,#00ff15,#00ff14,#00ff13,#00ff13,#00ff12,#00ff11,#00ff11,#00ff10,#00ff0f,#00ff0e,#00ff0d,#00ff0d,#00ff0c,#00ff0b,#00ff0a,#00ff09,#00ff08,#00ff07,#00ff06,#00ff05,#00ff04,#00ff03,#05ff02,#13ff00,#21ff00,#30ff00,#3fff00,#4fff00,#60ff00,#71ff00,#83ff00,#95ff00,#a8ff00,#bcff00,#d0ff00,#e5ff00,#fbff00,#ffed00,#ffda00,#ffc900,#ffba00,#ffad00,#ffa100,#ff9600,#ff8c00,#ff8300,#ff7a00,#ff7200,#ff6b00,#ff6500)"></i>
<i style="left:0px;top:33px;width:330px;background:linear-gradient(90deg,#00ff1a,#00ff1a,#00ff19,#00ff18,#00ff18,#00ff17,#00ff16,#00ff16,#00ff15,#00ff14,#00ff14,#00ff13,#00ff12,#00ff11,#00ff10,#00ff10,#00ff0f,#00ff0e,#00ff0d,#00ff0c,#00ff0b,#00ff0a,#00ff09,#03ff08,#12ff07,#20ff06,#2fff05,#3fff03,#4fff02,#5fff01,#71ff00,#82ff00,#95ff00,#a8ff00,#bcff00,#d1ff00,#e6ff00,#fcff00,#ffec00,#ffd900,#ffc800,#ffb900,#ffac00,#ffa000,#ff9500,#ff8b00,#ff8100,#ff7900,#ff7100,#ff6a00,#ff6400,#ff5e00,#ff5800,#ff5300,#ff4e00,#ff4900)"></i>
<i style="left:0px;top:36px;width:354px;background:linear-gradient(90deg,#00ff1f,#00ff1f,#00ff1e,#00ff1d,#00ff1d,#00ff1c,#00ff1c,#00ff1b,#00ff1a,#00ff1a,#00ff19,#00ff18,#00ff18,#00ff17,#00ff16,#00ff15,#00ff15,#00ff14,#00ff13,#00ff12,#00ff11,#00ff10,#00ff0f,#02ff0e,#11ff0d,#1fff0c,#2eff0b,#3eff0a,#4eff09,#5fff08,#70ff07,#82ff05,#95ff04,#a8ff03,#bcff01,#d1ff00,#e7ff00,#fdff00,#ffeb00,#ffd800,#ffc700,#ffb800,#ffab00,#ff9e00,#ff9300,#ff8a00,#ff8000,#ff7800,#ff7000,#ff6900,#ff6300,#ff5d00,#ff5700,#ff5200,#ff4d00,#ff4800,#ff4400,#ff3f00,#ff3b00,#ff3800)"></i>
<i style="left:0px;top:39px;width:378px;background:linear-gradient(90deg,#00ff24,#00ff23,#00ff23,#00ff22,#00ff22,#00ff21,#00ff21,#00ff20,#00ff20,#00ff1f,#00ff1f,#00ff1e,#00ff1d,#00ff1d,#00ff1c,#00ff1b,#00ff1b,#00ff1a,#00ff19,#00ff18,#00ff18,#00ff17,#00ff16,#01ff15,#10ff14,#1eff13,#2eff12,#3dff11,#4eff10,#5eff0f,#70ff0e,#82ff0d,#95ff0c,#a8ff0a,#bdff09,#d2ff08,#e8ff06,#feff05,#ffea03,#ffd702,#ffc600,#ffb700,#ffa900,#ff9d00,#ff9200,#ff8800,#ff7f00,#ff7700,#ff6f00,#ff6800,#ff6200,#ff5c00,#ff5600,#ff5100,#ff4c00,#ff4700,#ff4300,#ff3e00,#ff3b00,#ff3700,#ff3300,#ff3000,#ff2d00,#ff2a00)"></i>
<i style="left:0px;top:42px;width:408px;background:linear-gradient(90deg,#00ff29,#00ff29,#00ff28,#00ff28,#00ff27,#00ff27,#00ff26,#00ff26,#00ff25,#00ff25,#00ff24,#00ff24,#00ff23,#00ff22,#00ff22,#00ff21,#00ff21,#00ff20,#00ff1f,#00ff1f,#00ff1e,#00ff1d,#00ff1c,#00ff1c,#0eff1b,#1dff1a,#2dff19,#3dff18,#4dff17,#5eff16,#70ff15,#82ff14,#95ff13,#a9ff12,#bdff11,#d2ff10,#e8ff0f,#ffff0d,#ffe90b,#ffd609,#ffc507,#ffb606,#ffa804,#ff9c03,#ff9102,#ff8700,#ff7e00,#ff7600,#ff6e00,#ff6700,#ff6100,#ff5b00,#ff5500,#ff5000,#ff4b00,#ff4600,#ff4200,#ff3e00,#ff3a00,#ff3600,#ff3300,#ff2f00,#ff2c00,#ff2900,#ff2700,#ff2400,#ff2100,#ff1f00,#ff1d00)"></i>
<i style="left:0px;top:45px;width:432px;background:linear-gradient(90deg,#00ff2e,#00ff2e,#00ff2d,#00ff2d,#00ff2c,#00ff2c,#00ff2c,#00ff2b,#00ff2b,#00ff2a,#00ff2a,#00ff29,#00ff29,#00ff28,#00ff28,#00ff27,#00ff27,#00ff26,#00ff26,#00ff25,#00ff24,#00ff24,#00ff23,#00ff22,#0dff22,#1cff21,#2cff20,#3cff20,#4cff1f,#5eff1e,#6fff1d,#82ff1c,#95ff1b,#a9ff1a,#bdff19,#d3ff18,#e9ff17,#fffd16,#ffe813,#ffd410,#ffc30e,#ffb40c,#ffa70a,#ff9b09,#ff9007,#ff8606,#ff7d05,#ff7503,#ff6d02,#ff6602,#ff6001,#ff5a00,#ff5400,#ff4f00,#ff4a00,#ff4500,#ff4100,#ff3d00,#ff3900,#ff3500,#ff3200,#ff2f00,#ff2b00,#ff2800,#ff2600,#ff2300,#ff2100,#ff1e00,#ff1c00,#ff1a00,#ff1700,#ff1500,#ff1400)"></i>
<i style="left:0px;top:48px;width:456px;background:linear-gradient(90deg,#00ff33,#00ff33,#00ff32,#00ff32,#00ff32,#00ff31,#00ff31,#00ff31,#00ff30,#00ff30,#00ff30,#00ff2f,#00ff2f,#00ff2e,#00ff2e,#00ff2d,#00ff2d,#00ff2d,#00ff2c,#00ff2c,#00ff2b,#00ff2b,#00ff2a,#00ff29,#0cff29,#1bff28,#2bff28,#3bff27,#4cff26,#5dff26,#6fff25,#82ff24,#95ff23,#a9ff22,#beff22,#d4ff21,#eaff20,#fffc1f,#ffe61b,#ffd318,#ffc215,#ffb313,#ffa611,#ff9a0f,#ff8f0d,#ff850b,#ff7c0a,#ff7408,#ff6c07,#ff6506,#ff5f05,#ff5804,#ff5303,#ff4e02,#ff4901,#ff4401,#ff4000,#ff3c00,#ff3800,#ff3400,#ff3100,#ff2e00,#ff2b00,#ff2800,#ff2500,#ff2200,#ff2000,#ff1d00,#ff1b00,#ff1900,#ff1700,#ff1500,#ff1300,#ff1100,#ff0f00,#ff0d00,#ff0c00)"></i>
<i style="left:0px;top:51px;width:486px;background:linear-gradient(90deg,#00ff38,#00ff38,#00ff38,#00ff37,#00ff37,#00ff37,#00ff37,#00ff36,#00ff36,#00ff36,#00ff35,#00ff35,#00ff35,#00ff34,#00ff34,#00ff34,#00ff33,#00ff33,#00ff33,#00ff32,#00ff32,#00ff31,#00ff31,#00ff30,#0bff30,#1aff2f,#2aff2f,#3aff2e,#4bff2e,#5dff2d,#6fff2d,#82ff2c,#95ff2b,#a9ff2b,#beff2a,#d4ff29,#ebff29,#fffb27,#ffe523,#ffd21f,#ffc11c,#ffb219,#ffa517,#ff9915,#ff8e13,#ff8411,#ff7b0f,#ff730d,#ff6b0c,#ff640b,#ff5d09,#ff5708,#ff5207,#ff4d06,#ff4805,#ff4304,#ff3f04,#ff3b03,#ff3702,#ff3301,#ff3001,#ff2d00,#ff2a00,#ff2700,#ff2400,#ff2100,#ff1f00,#ff1d00,#ff1a00,#ff1800,#ff1600,#ff1400,#ff1200,#ff1000,#ff0f00,#ff0d00,#ff0b00,#ff0a00,#ff0800,#ff0700,#ff0500,#ff0400)"></i>
<i style="left:0px;top:54px;width:510px;background:linear-gradient(90deg,#00ff3d,#00ff3d,#00ff3d,#00ff3d,#00ff3d,#00ff3c,#00ff3c,#00ff3c,#00ff3c,#00ff3c,#00ff3b,#00ff3b,#00ff3b,#00ff3b,#00ff3a,#00ff3a,#00ff3a,#00ff39,#00ff39,#00ff39,#00ff39,#00ff38,#00ff38,#00ff38,#0aff37,#19ff37,#29ff36,#3aff36,#4bff36,#5cff35,#6eff35,#81ff34,#95ff34,#a9ff33,#bfff33,#d5ff32,#ecff32,#fffa30,#ffe42b,#ffd127,#ffc023,#ffb120,#ffa31d,#ff971b,#ff8d18,#ff8316,#ff7a14,#ff7112,#ff6a11,#ff630f,#ff5c0e,#ff560d,#ff510b,#ff4c0a,#ff4709,#ff4208,#ff3e07,#ff3a06,#ff3606,#ff3305,#ff2f04,#ff2c03,#ff2903,#ff2602,#ff2301,#ff2101,#ff1e00,#ff1c00,#ff1a00,#ff1700,#ff1500,#ff1300,#ff1100,#ff1000,#ff0e00,#ff0c00,#ff0b00,#ff0900,#ff0700,#ff0600,#ff0500,#ff0300,#ff0200,#ff0100,#ff0000,#ff0000)"></i>
<i style="left:0px;top:57px;width:534px;background:linear-gradient(90deg,#00ff43,#00ff43,#00ff42,#00ff42,#00ff42,#00ff42,#00ff42,#00ff42,#00ff42,#00ff41,#00ff41,#00ff41,#00ff41,#00ff41,#00ff41,#00ff40,#00ff40,#00ff40,#00ff40,#00ff40,#00ff3f,#00ff3f,#00ff3f,#00ff3f,#09ff3f,#18ff3e,#28ff3e,#39ff3e,#4aff3d,#5cff3d,#6eff3d,#81ff3d,#95ff3c,#aaff3c,#bfff3c,#d6ff3b,#edff3b,#fff939,#ffe334,#ffd02f,#ffbf2b,#ffb027,#ffa224,#ff9621,#ff8b1e,#ff821c,#ff7919,#ff7017,#ff6916,#ff6214,#ff5b12,#ff5511,#ff500f,#ff4b0e,#ff460d,#ff410c,#ff3d0b,#ff390a,#ff3509,#ff3208,#ff2e07,#ff2b06,#ff2806,#ff2505,#ff2204,#ff2004,#ff1d03,#ff1b03,#ff1902,#ff1701,#ff1501,#ff1300,#ff1100,#ff0f00,#ff0d00,#ff0b00,#ff0a00,#ff0800,#ff0700,#ff0500,#ff0400,#ff0300,#ff0100,#ff0000,#ff0000,#ff0000,#ff0000,#ff0000,#ff0000,#ff0000)"></i>
<i style="left:0px;top:60px;width:564px;background:linear-gradient(90deg,#00ff48,#00ff48,#00ff48,#00ff48,#00ff48,#00ff48,#00ff48,#00ff48,#00ff48,#00ff47,#00ff47,#00ff47,#00ff47,#00ff47,#00ff47,#00ff47,#00ff47,#00ff47,#00ff47,#00ff47,#00ff46,#00ff46,#00ff46,#00ff46,#08ff46,#17ff46,#27ff46,#38ff46,#49ff45,#5bff45,#6eff45,#81ff45,#95ff45,#aaff45,#c0ff45,#d6ff44,#eeff44,#fff842,#ffe23c,#ffce37,#ffbd32,#ffae2e,#ffa12a,#ff9527,#ff8a24,#ff8021,#ff771f,#ff6f1d,#ff681a,#ff6119,#ff5a17,#ff5415,#ff4f14,#ff4a12,#ff4511,#ff4010,#ff3c0f,#ff380d,#ff340c,#ff310b,#ff2d0a,#ff2a0a,#ff2709,#ff2408,#ff2207,#ff1f07,#ff1d06,#ff1a05,#ff1805,#ff1604,#ff1403,#ff1203,#ff1002,#ff0e02,#ff0c01,#ff0b01,#ff0901,#ff0800,#ff0600,#ff0500,#ff0300,#ff0200,#ff0100,#ff0000,#ff0000,#ff0000,#ff0000,#ff0000,#ff0000,#ff0000,#ff0000,#ff0000,#ff0000,#ff0000,#ff0000)"></i>
<i style="left:0px;top:63px;width:588px;background:linear-gradient(90deg,#00ff4d,#00ff4d,#00ff4d,#00ff4d,#00ff4d,#00ff4d,#00ff4d,#00ff4d,#00ff4d,#00ff4d,#00ff4d,#00ff4d,#00ff4e,#00ff4e,#00ff4e,#00ff4e,#00ff4e,#00ff4e,#00ff4e,#00ff4e,#00ff4e,#00ff4e,#00ff4e,#00ff4e,#07ff4e,#16ff4e,#27ff4e,#37ff4e,#49ff4e,#5bff4e,#6dff4e,#81ff4e,#95ff4e,#aaff4e,#c0ff4e,#d7ff4e,#efff4e,#fff74b,#ffe044,#ffcd3f,#ffbc39,#ffad35,#ffa031,#ff942d,#ff892a,#ff7f27,#ff7624,#ff6e22,#ff671f,#ff601d,#ff591b,#ff531a,#ff4e18,#ff4916,#ff4415,#ff3f13,#ff3b12,#ff3711,#ff3310,#ff300f,#ff2d0e,#ff290d,#ff260c,#ff240b,#ff210a,#ff1e09,#ff1c09,#ff1a08,#ff1707,#ff1507,#ff1306,#ff1105,#ff0f05,#ff0d04,#ff0c04,#ff0a03,#ff0903,#ff0702,#ff0502,#ff0401,#ff0301,#ff0101,#ff0000,#ff0000,#ff0000,#ff0000,#ff0000,#ff0000,#ff0000,#ff0000,#ff0000,#ff0000,#ff0000,#ff0000,#ff0000,#ff0000,#ff0000,#ff0000,#ff0000)"></i>
<i style="left:0px;top:66px;width:612px;background:linear-gradient(90deg,#00ff53,#00ff53,#00ff53,#00ff53,#00ff53,#00ff53,#00ff53,#00ff53,#00ff54,#00ff54,#00ff54,#00ff54,#00ff54,#00ff54,#00ff54,#00ff54,#00ff54,#00ff54,#00ff55,#00ff55,#00ff55,#00ff55,#00ff55,#00ff55,#06ff55,#15ff55,#26ff56,#37ff56,#48ff56,#5aff56,#6dff56,#81ff57,#95ff57,#aaff57,#c1ff57,#d8ff57,#f0ff58,#fff554,#ffdf4d,#ffcc47,#ffbb41,#ffac3c,#ff9f37,#ff9333,#ff8830,#ff7e2d,#ff752a,#ff6d27,#ff6524,#ff5e22,#ff5820,#ff521e,#ff4d1c,#ff481a,#ff4319,#ff3e17,#ff3a16,#ff3615,#ff3213,#ff2f12,#ff2c11,#ff2910,#ff260f,#ff230e,#ff200d,#ff1d0c,#ff1b0b,#ff190b,#ff170a,#ff1409,#ff1209,#ff1008,#ff0f07,#ff0d07,#ff0b06,#ff0906,#ff0805,#ff0605,#ff0504,#ff0304,#ff0203,#ff0103,#ff0002,#ff0002,#ff0001,#ff0001,#ff0001,#ff0000,#ff0000,#ff0000,#ff0000,#ff0000,#ff0000,#ff0000,#ff0000,#ff0000,#ff0000,#ff0000,#ff0000,#ff0000,#ff0000,#ff0000,#ff0000)"></i>
<i style="left:0px;top:69px;width:636px;background:linear-gradient(90deg,#00ff58,#00ff59,#00ff59,#00ff59,#00ff59,#00ff59,#00ff59,#00ff59,#00ff5a,#00ff5a,#00ff5a,#00ff5a,#00ff5a,#00ff5b,#00ff5b,#00ff5b,#00ff5b,#00ff5b,#00ff5c,#00ff5c,#00ff5c,#00ff5c,#00ff5d,#00ff5d,#04ff5d,#14ff5e,#25ff5e,#36ff5e,#47ff5e,#5aff5f,#6dff5f,#81ff5f,#95ff60,#abff60,#c1ff61,#d8ff61,#f1ff62,#fff45e,#ffde56,#ffcb4f,#ffba48,#ffab43,#ff9d3e,#ff913a,#ff8736,#ff7d32,#ff742f,#ff6c2c,#ff6429,#ff5d27,#ff5724,#ff5122,#ff4c20,#ff471e,#ff421d,#ff3d1b,#ff391a,#ff3518,#ff3217,#ff2e15,#ff2b14,#ff2813,#ff2512,#ff2211,#ff1f10,#ff1d0f,#ff1a0e,#ff180d,#ff160d,#ff140c,#ff120b,#ff100a,#ff0e0a,#ff0c09,#ff0a08,#ff0908,#ff0707,#ff0607,#ff0406,#ff0306,#ff0105,#ff0005,#ff0004,#ff0004,#ff0003,#ff0003,#ff0003,#ff0002,#ff0002,#ff0001,#ff0001,#ff0001,#ff0000,#ff0000,#ff0000,#ff0000,#ff0000,#ff0000,#ff0000,#ff0000,#ff0000,#ff0000,#ff0000,#ff0000,#ff0000,#ff0000,#ff0000)"></i>
<i style="left:0px;top:72px;width:660px;background:linear-gradient(90deg,#00ff5e,#00ff5e,#00ff5e,#00ff5f,#00ff5f,#00ff5f,#00ff5f,#00ff60,#00ff60,#00ff60,#00ff60,#00ff61,#00ff61,#00ff61,#00ff62,#00ff62,#00ff62,#00ff63,#00ff63,#00ff63,#00ff64,#00ff64,#00ff64,#00ff65,#03ff65,#13ff66,#24ff66,#35ff67,#47ff67,#59ff68,#6cff68,#80ff69,#95ff69,#abff6a,#c2ff6a,#d9ff6b,#f2ff6c,#fff367,#ffdd5e,#ffc957,#ffb850,#ffa94a,#ff9c45,#ff9040,#ff853c,#ff7c38,#ff7334,#ff6b31,#ff632e,#ff5c2c,#ff5629,#ff5027,#ff4b25,#ff4623,#ff4121,#ff3c1f,#ff381d,#ff341c,#ff311a,#ff2d19,#ff2a18,#ff2716,#ff2415,#ff2114,#ff1e13,#ff1c12,#ff1911,#ff1710,#ff150f,#ff130e,#ff110e,#ff0f0d,#ff0d0c,#ff0b0b,#ff0a0b,#ff080a,#ff060a,#ff0509,#ff0408,#ff0208,#ff0107,#ff0007,#ff0006,#ff0006,#ff0005,#ff0005,#ff0004,#ff0004,#ff0004,#ff0003,#ff0003,#ff0002,#ff0002,#ff0002,#ff0001,#ff0001,#ff0001,#ff0000,#ff0000,#ff0000,#ff0000,#ff0000,#ff0000,#ff0000,#ff0000,#ff0000,#ff0000,#ff0000,#ff0000,#ff0000,#ff0000)"></i>
<i style="left:0px;top:75px;width:660px;background:linear-gradient(90deg,#00ff64,#00ff64,#00ff64,#00ff65,#00ff65,#00ff65,#00ff65,#00ff66,#00ff66,#00ff67,#00ff67,#00ff67,#00ff68,#00ff68,#00ff68,#00ff69,#00ff69,#00ff6a,#00ff6a,#00ff6b,#00ff6b,#00ff6c,#00ff6c,#00ff6d,#02ff6d,#12ff6e,#23ff6f,#34ff6f,#46ff70,#59ff71,#6cff71,#80ff72,#95ff73,#abff74,#c2ff74,#daff75,#f3ff76,#fff271,#ffdb67,#ffc85f,#ffb758,#ffa851,#ff9b4c,#ff8f47,#ff8442,#ff7a3e,#ff713a,#ff6936,#ff6233,#ff5b30,#ff552e,#ff4f2b,#ff4a29,#ff4527,#ff4025,#ff3b23,#ff3721,#ff331f,#ff301e,#ff2c1c,#ff291b,#ff261a,#ff2318,#ff2017,#ff1e16,#ff1b15,#ff1914,#ff1613,#ff1412,#ff1211,#ff1010,#ff0e0f,#ff0c0f,#ff0b0e,#ff090d,#ff070c,#ff060c,#ff040b,#ff030b,#ff010a,#ff0009,#ff0009,#ff0008,#ff0008,#ff0007,#ff0007,#ff0006,#ff0006,#ff0005,#ff0005,#ff0005,#ff0004,#ff0004,#ff0003,#ff0003,#ff0003,#ff0002,#ff0002,#ff0002,#ff0001,#ff0001,#ff0001,#ff0000,#ff0000,#ff0000,#ff0000,#ff0000,#ff0000,#ff0000,#ff0000,#ff0000)"></i>
<i style="left:0px;top:78px;width:660px;background:linear-gradient(90deg,#00ff69,#00ff6a,#00ff6a,#00ff6b,#00ff6b,#00ff6b,#00ff6c,#00ff6c,#00ff6d,#00ff6d,#00ff6d,#00ff6e,#00ff6e,#00ff6f,#00ff6f,#00ff70,#00ff71,#00ff71,#00ff72,#00ff72,#00ff73,#00ff74,#00ff74,#00ff75,#01ff76,#11ff76,#22ff77,#33ff78,#45ff79,#58ff7a,#6cff7b,#80ff7c,#95ff7c,#abff7d,#c3ff7f,#dbff80,#f4ff81,#fff07b,#ffda70,#ffc767,#ffb660,#ffa759,#ff9952,#ff8e4d,#ff8348,#ff7944,#ff703f,#ff683c,#ff6138,#ff5a35,#ff5432,#ff4e30,#ff482d,#ff432b,#ff3f29,#ff3a27,#ff3625,#ff3223,#ff2f21,#ff2b20,#ff281e,#ff251d,#ff221b,#ff1f1a,#ff1d19,#ff1a18,#ff1817,#ff1616,#ff1315,#ff1114,#ff0f13,#ff0e12,#ff0c11,#ff0a10,#ff0810,#ff070f,#ff050e,#ff040d,#ff020d,#ff010c,#ff000c,#ff000b,#ff000a,#ff000a,#ff0009,#ff0009,#ff0008,#ff0008,#ff0007,#ff0007,#ff0006,#ff0006,#ff0006,#ff0005,#ff0005,#ff0004,#ff0004,#ff0004,#ff0003,#ff0003,#ff0003,#ff0002,#ff0002,#ff0002,#ff0001,#ff0001,#ff0001,#ff0001,#ff0000,#ff0000,#ff0000)"></i>
<i style="left:0px;top:81px;width:660px;background:linear-gradient(90deg,#00ff6f,#00ff70,#00ff70,#00ff71,#00ff71,#00ff71,#00ff72,#00ff73,#00ff73,#00ff74,#00ff74,#00ff75,#00ff75,#00ff76,#00ff77,#00ff77,#00ff78,#00ff79,#00ff79,#00ff7a,#00ff7b,#00ff7c,#00ff7c,#00ff7d,#00ff7e,#10ff7f,#21ff80,#32ff81,#45ff82,#57ff83,#6bff84,#80ff85,#95ff86,#acff88,#c3ff89,#dcff8a,#f5ff8c,#ffef84,#ffd979,#ffc570,#ffb467,#ffa560,#ff9859,#ff8c54,#ff824e,#ff7849,#ff6f45,#ff6741,#ff603d,#ff593a,#ff5337,#ff4d34,#ff4731,#ff422f,#ff3e2d,#ff392b,#ff3529,#ff3127,#ff2e25,#ff2a23,#ff2722,#ff2420,#ff211f,#ff1e1d,#ff1c1c,#ff191b,#ff171a,#ff1518,#ff1317,#ff1116,#ff0f15,#ff0d14,#ff0b14,#ff0913,#ff0812,#ff0611,#ff0410,#ff0310,#ff020f,#ff000e,#ff000e,#ff000d,#ff000c,#ff000c,#ff000b,#ff000b,#ff000a,#ff000a,#ff0009,#ff0009,#ff0008,#ff0008,#ff0007,#ff0007,#ff0006,#ff0006,#ff0006,#ff0005,#ff0005,#ff0005,#ff0004,#ff0004,#ff0004,#ff0003,#ff0003,#ff0003,#ff0002,#ff0002,#ff0002,#ff0001,#ff0001)"></i>
<i style="left:0px;top:84px;width:660px;background:linear-gradient(90deg,#00ff75,#00ff76,#00ff76,#00ff77,#00ff77,#00ff78,#00ff78,#00ff79,#00ff7a,#00ff7a,#00ff7b,#00ff7c,#00ff7c,#00ff7d,#00ff7e,#00ff7f,#00ff7f,#00ff80,#00ff81,#00ff82,#00ff83,#00ff84,#00ff85,#00ff86,#00ff87,#0fff88,#20ff89,#31ff8a,#44ff8b,#57ff8c,#6bff8e,#80ff8f,#95ff91,#acff92,#c4ff94,#dcff95,#f6ff97,#ffee8e,#ffd783,#ffc478,#ffb36f,#ffa467,#ff9760,#ff8b5a,#ff8054,#ff774f,#ff6e4b,#ff6646,#ff5e43,#ff583f,#ff513c,#ff4c39,#ff4636,#ff4133,#ff3d31,#ff382e,#ff342c,#ff302a,#ff2d28,#ff2927,#ff2625,#ff2323,#ff2022,#ff1e20,#ff1b1f,#ff191e,#ff161c,#ff141b,#ff121a,#ff1019,#ff0e18,#ff0c17,#ff0a16,#ff0915,#ff0714,#ff0513,#ff0413,#ff0212,#ff0111,#ff0010,#ff0010,#ff000f,#ff000e,#ff000e,#ff000d,#ff000d,#ff000c,#ff000c,#ff000b,#ff000a,#ff000a,#ff000a,#ff0009,#ff0009,#ff0008,#ff0008,#ff0007,#ff0007,#ff0007,#ff0006,#ff0006,#ff0005,#ff0005,#ff0005,#ff0004,#ff0004,#ff0004,#ff0003,#ff0003,#ff0003,#ff0002)"></i>
<i style="left:0px;top:87px;width:660px;background:linear-gradient(90deg,#00ff7b,#00ff7c,#00ff7c,#00ff7d,#00ff7d,#00ff7e,#00ff7f,#00ff80,#00ff80,#00ff81,#00ff82,#00ff83,#00ff83,#00ff84,#00ff85,#00ff86,#00ff87,#00ff88,#00ff89,#00ff8a,#00ff8b,#00ff8c,#00ff8d,#00ff8e,#00ff8f,#0dff91,#1fff92,#30ff93,#43ff95,#56ff96,#6aff98,#7fff99,#95ff9b,#acff9d,#c4ff9e,#ddffa0,#f7ffa2,#ffed98,#ffd68c,#ffc381,#ffb277,#ffa36f,#ff9567,#ff8a61,#ff7f5b,#ff7555,#ff6d50,#ff654c,#ff5d48,#ff5744,#ff5040,#ff4b3d,#ff453a,#ff4037,#ff3c35,#ff3732,#ff3330,#ff2f2e,#ff2c2c,#ff292a,#ff2528,#ff2227,#ff1f25,#ff1d23,#ff1a22,#ff1821,#ff151f,#ff131e,#ff111d,#ff0f1c,#ff0d1b,#ff0b1a,#ff0a19,#ff0818,#ff0617,#ff0516,#ff0315,#ff0214,#ff0013,#ff0013,#ff0012,#ff0011,#ff0010,#ff0010,#ff000f,#ff000f,#ff000e,#ff000d,#ff000d,#ff000c,#ff000c,#ff000b,#ff000b,#ff000a,#ff000a,#ff0009,#ff0009,#ff0009,#ff0008,#ff0008,#ff0007,#ff0007,#ff0007,#ff0006,#ff0006,#ff0005,#ff0005,#ff0005,#ff0004,#ff0004,#ff0004)"></i>
<i style="left:0px;top:90px;width:660px;background:linear-gradient(90deg,#00ff81,#00ff82,#00ff82,#00ff83,#00ff84,#00ff85,#00ff85,#00ff86,#00ff87,#00ff88,#00ff89,#00ff8a,#00ff8b,#00ff8b,#00ff8c,#00ff8d,#00ff8f,#00ff90,#00ff91,#00ff92,#00ff93,#00ff94,#00ff96,#00ff97,#00ff98,#0cff9a,#1dff9b,#2fff9d,#42ff9e,#56ffa0,#6affa2,#7fffa4,#95ffa5,#adffa7,#c5ffaa,#deffac,#f9ffae,#ffeba3,#ffd595,#ffc18a,#ffb07f,#ffa176,#ff946f,#ff8867,#ff7e61,#ff745b,#ff6b56,#ff6351,#ff5c4d,#ff5549,#ff4f45,#ff4942,#ff443f,#ff3f3c,#ff3b39,#ff3636,#ff3234,#ff2f32,#ff2b30,#ff282e,#ff242c,#ff212a,#ff1f28,#ff1c27,#ff1925,#ff1724,#ff1522,#ff1221,#ff1020,#ff0e1e,#ff0c1d,#ff0b1c,#ff091b,#ff071a,#ff0519,#ff0418,#ff0217,#ff0116,#ff0016,#ff0015,#ff0014,#ff0013,#ff0013,#ff0012,#ff0011,#ff0011,#ff0010,#ff000f,#ff000f,#ff000e,#ff000e,#ff000d,#ff000d,#ff000c,#ff000c,#ff000b,#ff000b,#ff000a,#ff000a,#ff0009,#ff0009,#ff0008,#ff0008,#ff0008,#ff0007,#ff0007,#ff0007,#ff0006,#ff0006,#ff0006,#ff0005)"></i>
<i style="left:0px;top:93px;width:660px;background:linear-gradient(90deg,#00ff87,#00ff88,#00ff89,#00ff89,#00ff8a,#00ff8b,#00ff8c,#00ff8d,#00ff8e,#00ff8f,#00ff90,#00ff91,#00ff92,#00ff93,#00ff94,#00ff95,#00ff96,#00ff98,#00ff99,#00ff9a,#00ff9b,#00ff9d,#00ff9e,#00ffa0,#00ffa1,#0bffa3,#1cffa5,#2fffa6,#41ffa8,#55ffaa,#6affac,#7fffae,#95ffb0,#adffb3,#c5ffb5,#dfffb7,#faffba,#ffeaad,#ffd39f,#ffc092,#ffaf88,#ffa07e,#ff9376,#ff876e,#ff7c67,#ff7361,#ff6a5c,#ff6257,#ff5b52,#ff544e,#ff4e4a,#ff4846,#ff4343,#ff3e40,#ff3a3d,#ff353a,#ff3138,#ff2e35,#ff2a33,#ff2731,#ff242f,#ff212d,#ff1e2b,#ff1b2a,#ff1928,#ff1627,#ff1425,#ff1224,#ff1022,#ff0e21,#ff0c20,#ff0a1f,#ff081e,#ff061d,#ff051c,#ff031b,#ff021a,#ff0019,#ff0018,#ff0017,#ff0016,#ff0015,#ff0015,#ff0014,#ff0013,#ff0012,#ff0012,#ff0011,#ff0011,#ff0010,#ff000f,#ff000f,#ff000e,#ff000e,#ff000d,#ff000d,#ff000c,#ff000c,#ff000b,#ff000b,#ff000a,#ff000a,#ff000a,#ff0009,#ff0009,#ff0008,#ff0008,#ff0008,#ff0007,#ff0007,#ff0007)"></i>
<i style="left:0px;top:96px;width:660px;background:linear-gradient(90deg,#00ff8d,#00ff8e,#00ff8f,#00ff90,#00ff91,#00ff92,#00ff93,#00ff94,#00ff95,#00ff96,#00ff97,#00ff98,#00ff99,#00ff9a,#00ff9c,#00ff9d,#00ff9e,#00ffa0,#00ffa1,#00ffa2,#00ffa4,#00ffa6,#00ffa7,#00ffa9,#00ffab,#0affac,#1bffae,#2effb0,#41ffb2,#55ffb4,#69ffb7,#7fffb9,#95ffbb,#adffbe,#c6ffc0,#e0ffc3,#fbffc6,#ffe9b7,#ffd2a8,#ffbf9b,#ffae90,#ff9f86,#ff917d,#ff8675,#ff7b6e,#ff7167,#ff6962,#ff615c,#ff5a57,#ff5353,#ff4d4f,#ff474b,#ff4248,#ff3d44,#ff3941,#ff343e,#ff303c,#ff2d39,#ff2937,#ff2635,#ff2332,#ff2030,#ff1d2f,#ff1a2d,#ff182b,#ff152a,#ff1328,#ff1127,#ff0f25,#ff0d24,#ff0b23,#ff0921,#ff0720,#ff061f,#ff041e,#ff031d,#ff011c,#ff001b,#ff001a,#ff0019,#ff0018,#ff0017,#ff0017,#ff0016,#ff0015,#ff0014,#ff0014,#ff0013,#ff0012,#ff0012,#ff0011,#ff0011,#ff0010,#ff000f,#ff000f,#ff000e,#ff000e,#ff000d,#ff000d,#ff000c,#ff000c,#ff000c,#ff000b,#ff000b,#ff000a,#ff000a,#ff0009,#ff0009,#ff0009,#ff0008,#ff0008)"></i>
<i style="left:0px;top:99px;width:660px;background:linear-gradient(90deg,#00ff94,#00ff94,#00ff95,#00ff96,#00ff97,#00ff98,#00ff9a,#00ff9b,#00ff9c,#00ff9d,#00ff9e,#00ff9f,#00ffa1,#00ffa2,#00ffa3,#00ffa5,#00ffa6,#00ffa8,#00ffa9,#00ffab,#00ffad,#00ffae,#00ffb0,#00ffb2,#00ffb4,#08ffb6,#1affb8,#2dffba,#40ffbc,#54ffbf,#69ffc1,#7fffc4,#96ffc7,#adffc9,#c6ffcc,#e1ffcf,#fcffd3,#ffe7c2,#ffd1b2,#ffbda4,#ffac98,#ff9d8e,#ff9084,#ff847c,#ff7a74,#ff706e,#ff6867,#ff6062,#ff585d,#ff5258,#ff4c54,#ff4650,#ff414c,#ff3c49,#ff3745,#ff3342,#ff2f40,#ff2c3d,#ff283a,#ff2538,#ff2236,#ff1f34,#ff1c32,#ff1930,#ff172e,#ff142c,#ff122b,#ff1029,#ff0e28,#ff0c26,#ff0a25,#ff0824,#ff0723,#ff0521,#ff0320,#ff021f,#ff001e,#ff001d,#ff001c,#ff001b,#ff001a,#ff001a,#ff0019,#ff0018,#ff0017,#ff0016,#ff0016,#ff0015,#ff0014,#ff0014,#ff0013,#ff0012,#ff0012,#ff0011,#ff0011,#ff0010,#ff0010,#ff000f,#ff000f,#ff000e,#ff000e,#ff000d,#ff000d,#ff000c,#ff000c,#ff000b,#ff000b,#ff000b,#ff000a,#ff000a,#ff0009)"></i>
<i style="left:6px;top:102px;width:654px;background:linear-gradient(90deg,#00ff9b,#00ff9c,#00ff9d,#00ff9e,#00ff9f,#00ffa0,#00ffa2,#00ffa3,#00ffa4,#00ffa6,#00ffa7,#00ffa8,#00ffaa,#00ffab,#00ffad,#00ffae,#00ffb0,#00ffb2,#00ffb4,#00ffb5,#00ffb7,#00ffb9,#00ffbb,#00ffbe,#07ffc0,#19ffc2,#2cffc4,#3fffc7,#53ffca,#68ffcc,#7effcf,#96ffd2,#aeffd5,#c7ffd8,#e2ffdc,#feffdf,#ffe6cd,#ffcfbc,#ffbcad,#ffaba1,#ff9c95,#ff8f8c,#ff8383,#ff787b,#ff6f74,#ff666d,#ff5e67,#ff5762,#ff515d,#ff4b59,#ff4554,#ff4051,#ff3b4d,#ff364a,#ff3246,#ff2e43,#ff2b41,#ff273e,#ff243c,#ff2139,#ff1e37,#ff1b35,#ff1833,#ff1631,#ff142f,#ff112e,#ff0f2c,#ff0d2b,#ff0b29,#ff0928,#ff0826,#ff0625,#ff0424,#ff0323,#ff0122,#ff0021,#ff0020,#ff001f,#ff001e,#ff001d,#ff001c,#ff001b,#ff001a,#ff0019,#ff0018,#ff0018,#ff0017,#ff0016,#ff0016,#ff0015,#ff0014,#ff0014,#ff0013,#ff0012,#ff0012,#ff0011,#ff0011,#ff0010,#ff0010,#ff000f,#ff000f,#ff000e,#ff000e,#ff000d,#ff000d,#ff000c,#ff000c,#ff000c,#ff000b,#ff000b)"></i>
<i style="left:6px;top:105px;width:654px;background:linear-gradient(90deg,#00ffa1,#00ffa3,#00ffa4,#00ffa5,#00ffa6,#00ffa7,#00ffa9,#00ffaa,#00ffac,#00ffad,#00ffaf,#00ffb0,#00ffb2,#00ffb3,#00ffb5,#00ffb7,#00ffb9,#00ffba,#00ffbc,#00ffbe,#00ffc1,#00ffc3,#00ffc5,#00ffc7,#06ffca,#18ffcc,#2bffcf,#3effd2,#53ffd4,#68ffd7,#7effdb,#96ffde,#aeffe1,#c8ffe5,#e3ffe9,#ffffed,#ffe4d8,#ffcec6,#ffbab6,#ffa9a9,#ff9a9d,#ff8d93,#ff828a,#ff7782,#ff6e7a,#ff6573,#ff5d6d,#ff5668,#ff4f62,#ff495e,#ff4459,#ff3f55,#ff3a51,#ff354e,#ff314a,#ff2d47,#ff2a44,#ff2642,#ff233f,#ff203d,#ff1d3b,#ff1a38,#ff1836,#ff1534,#ff1333,#ff1031,#ff0e2f,#ff0c2d,#ff0a2c,#ff092a,#ff0729,#ff0528,#ff0326,#ff0225,#ff0024,#ff0023,#ff0022,#ff0021,#ff0020,#ff001f,#ff001e,#ff001d,#ff001c,#ff001b,#ff001a,#ff001a,#ff0019,#ff0018,#ff0017,#ff0017,#ff0016,#ff0015,#ff0015,#ff0014,#ff0013,#ff0013,#ff0012,#ff0012,#ff0011,#ff0011,#ff0010,#ff0010,#ff000f,#ff000f,#ff000e,#ff000e,#ff000d,#ff000d,#ff000d,#ff000c)"></i>
<i style="left:6px;top:108px;width:654px;background:linear-gradient(90deg,#00ffa8,#00ffa9,#00ffab,#00ffac,#00ffad,#00ffaf,#00ffb0,#00ffb2,#00ffb3,#00ffb5,#00ffb6,#00ffb8,#00ffba,#00ffbb,#00ffbd,#00ffbf,#00ffc1,#00ffc3,#00ffc5,#00ffc8,#00ffca,#00ffcc,#00ffcf,#00ffd1,#04ffd4,#16ffd7,#29ffda,#3dffdd,#52ffe0,#67ffe3,#7effe6,#96ffea,#aeffee,#c8fff2,#e4fff6,#fffef9,#ffe3e3,#ffccd0,#ffb9c0,#ffa8b2,#ff99a5,#ff8c9b,#ff8091,#ff7688,#ff6c80,#ff6479,#ff5c73,#ff556d,#ff4e68,#ff4863,#ff435e,#ff3e5a,#ff3956,#ff3452,#ff304f,#ff2c4b,#ff2948,#ff2545,#ff2243,#ff1f40,#ff1c3e,#ff193c,#ff1739,#ff1437,#ff1236,#ff1034,#ff0e32,#ff0c30,#ff0a2f,#ff082d,#ff062c,#ff042a,#ff0329,#ff0128,#ff0026,#ff0025,#ff0024,#ff0023,#ff0022,#ff0021,#ff0020,#ff001f,#ff001e,#ff001d,#ff001c,#ff001c,#ff001b,#ff001a,#ff0019,#ff0019,#ff0018,#ff0017,#ff0016,#ff0016,#ff0015,#ff0015,#ff0014,#ff0013,#ff0013,#ff0012,#ff0012,#ff0011,#ff0011,#ff0010,#ff0010,#ff000f,#ff000f,#ff000e,#ff000e,#ff000e)"></i>
<i style="left:6px;top:111px;width:648px;background:linear-gradient(90deg,#00ffaf,#00ffb0,#00ffb1,#00ffb3,#00ffb4,#00ffb6,#00ffb7,#00ffb9,#00ffbb,#00ffbc,#00ffbe,#00ffc0,#00ffc2,#00ffc4,#00ffc6,#00ffc8,#00ffca,#00ffcc,#00ffce,#00ffd1,#00ffd3,#00ffd6,#00ffd9,#00ffdb,#03ffde,#15ffe1,#28ffe4,#3cffe8,#51ffeb,#67ffef,#7efff2,#96fff6,#affffa,#c9ffff,#e1fbff,#f9f6ff,#ffe2ee,#ffcbda,#ffb7c9,#ffa6ba,#ff98ae,#ff8aa2,#ff7f98,#ff748f,#ff6b87,#ff627f,#ff5b79,#ff5372,#ff4d6d,#ff4768,#ff4163,#ff3c5e,#ff385a,#ff3356,#ff2f53,#ff2b4f,#ff284c,#ff2449,#ff2146,#ff1e44,#ff1b41,#ff183f,#ff163d,#ff133b,#ff1139,#ff0f37,#ff0d35,#ff0b33,#ff0931,#ff0730,#ff052e,#ff042d,#ff022b,#ff002a,#ff0029,#ff0028,#ff0026,#ff0025,#ff0024,#ff0023,#ff0022,#ff0021,#ff0020,#ff001f,#ff001e,#ff001e,#ff001d,#ff001c,#ff001b,#ff001a,#ff001a,#ff0019,#ff0018,#ff0018,#ff0017,#ff0016,#ff0016,#ff0015,#ff0014,#ff0014,#ff0013,#ff0013,#ff0012,#ff0012,#ff0011,#ff0011,#ff0010,#ff0010,#ff000f)"></i>
<i style="left:6px;top:114px;width:648px;background:linear-gradient(90deg,#00ffb5,#00ffb7,#00ffb8,#00ffba,#00ffbb,#00ffbd,#00ffbf,#00ffc1,#00ffc2,#00ffc4,#00ffc6,#00ffc8,#00ffca,#00ffcc,#00ffce,#00ffd1,#00ffd3,#00ffd5,#00ffd8,#00ffda,#00ffdd,#00ffe0,#00ffe3,#00ffe6,#01ffe9,#14ffec,#27ffef,#3bfff3,#51fff7,#67fffb,#7effff,#93fbff,#aaf7ff,#c0f3ff,#d7eeff,#eeeaff,#ffe0f9,#ffc9e4,#ffb6d3,#ffa5c3,#ff96b6,#ff89aa,#ff7d9f,#ff7396,#ff6a8d,#ff6185,#ff597e,#ff5278,#ff4c72,#ff466d,#ff4068,#ff3b63,#ff375f,#ff325b,#ff2e57,#ff2a53,#ff2750,#ff234d,#ff204a,#ff1d47,#ff1a45,#ff1742,#ff1540,#ff123e,#ff103c,#ff0e3a,#ff0c38,#ff0a36,#ff0834,#ff0633,#ff0431,#ff032f,#ff012e,#ff002d,#ff002b,#ff002a,#ff0029,#ff0028,#ff0026,#ff0025,#ff0024,#ff0023,#ff0022,#ff0021,#ff0020,#ff001f,#ff001f,#ff001e,#ff001d,#ff001c,#ff001b,#ff001b,#ff001a,#ff0019,#ff0019,#ff0018,#ff0017,#ff0017,#ff0016,#ff0015,#ff0015,#ff0014,#ff0014,#ff0013,#ff0013,#ff0012,#ff0012,#ff0011,#ff0011)"></i>
<i style="left:6px;top:117px;width:648px;background:linear-gradient(90deg,#00ffbc,#00ffbe,#00ffbf,#00ffc1,#00ffc3,#00ffc5,#00ffc6,#00ffc8,#00ffca,#00ffcc,#00ffce,#00ffd0,#00ffd2,#00ffd5,#00ffd7,#00ffd9,#00ffdc,#00ffde,#00ffe1,#00ffe4,#00ffe7,#00ffea,#00ffed,#00fff0,#00fff4,#13fff7,#26fffb,#3bffff,#4ffbff,#63f7ff,#78f3ff,#8defff,#a2ebff,#b7e7ff,#cde3ff,#e3deff,#f9daff,#ffc8ef,#ffb4dc,#ffa3cc,#ff95be,#ff88b1,#ff7ca6,#ff729c,#ff6894,#ff608b,#ff5884,#ff517d,#ff4b77,#ff4572,#ff3f6c,#ff3a68,#ff3563,#ff315f,#ff2d5b,#ff2957,#ff2654,#ff2251,#ff1f4e,#ff1c4b,#ff1948,#ff1746,#ff1443,#ff1241,#ff0f3f,#ff0d3d,#ff0b3b,#ff0939,#ff0737,#ff0535,#ff0434,#ff0232,#ff0031,#ff002f,#ff002e,#ff002c,#ff002b,#ff002a,#ff0029,#ff0028,#ff0026,#ff0025,#ff0024,#ff0023,#ff0022,#ff0021,#ff0021,#ff0020,#ff001f,#ff001e,#ff001d,#ff001c,#ff001c,#ff001b,#ff001a,#ff001a,#ff0019,#ff0018,#ff0018,#ff0017,#ff0016,#ff0016,#ff0015,#ff0015,#ff0014,#ff0014,#ff0013,#ff0013,#ff0012)"></i>
<i style="left:12px;top:120px;width:636px;background:linear-gradient(90deg,#00ffc5,#00ffc7,#00ffc8,#00ffca,#00ffcc,#00ffce,#00ffd0,#00ffd2,#00ffd4,#00ffd6,#00ffd9,#00ffdb,#00ffdd,#00ffe0,#00ffe2,#00ffe5,#00ffe8,#00ffeb,#00ffee,#00fff1,#00fff4,#00fff7,#00fffb,#00ffff,#11fcff,#24f8ff,#37f4ff,#4af0ff,#5eecff,#72e8ff,#86e4ff,#9ae0ff,#afdcff,#c4d8ff,#d9d3ff,#efcfff,#ffc6fa,#ffb3e6,#ffa2d5,#ff93c6,#ff86b9,#ff7aae,#ff70a3,#ff679a,#ff5e92,#ff578a,#ff5083,#ff497d,#ff4377,#ff3e71,#ff396c,#ff3468,#ff3063,#ff2c5f,#ff285b,#ff2458,#ff2154,#ff1e51,#ff1b4e,#ff184c,#ff1649,#ff1346,#ff1144,#ff0e42,#ff0c40,#ff0a3e,#ff083c,#ff063a,#ff0538,#ff0336,#ff0135,#ff0033,#ff0032,#ff0030,#ff002f,#ff002d,#ff002c,#ff002b,#ff002a,#ff0029,#ff0027,#ff0026,#ff0025,#ff0024,#ff0023,#ff0022,#ff0022,#ff0021,#ff0020,#ff001f,#ff001e,#ff001d,#ff001d,#ff001c,#ff001b,#ff001b,#ff001a,#ff0019,#ff0019,#ff0018,#ff0017,#ff0017,#ff0016,#ff0016,#ff0015,#ff0015,#ff0014)"></i>
<i style="left:12px;top:123px;width:636px;background:linear-gradient(90deg,#00ffcc,#00ffce,#00ffd0,#00ffd2,#00ffd4,#00ffd6,#00ffd8,#00ffda,#00ffdc,#00ffdf,#00ffe1,#00ffe4,#00ffe6,#00ffe9,#00ffec,#00ffee,#00fff1,#00fff5,#00fff8,#00fffb,#00ffff,#00fcff,#00f8ff,#00f5ff,#0ff1ff,#21edff,#34e9ff,#47e6ff,#59e2ff,#6ddeff,#80daff,#94d6ff,#a8d2ff,#bcceff,#d0c9ff,#e5c5ff,#fac1ff,#ffb1f0,#ffa0de,#ff92cf,#ff85c1,#ff79b5,#ff6faa,#ff65a1,#ff5d98,#ff5590,#ff4e89,#ff4882,#ff427c,#ff3d76,#ff3871,#ff336c,#ff2f68,#ff2b63,#ff275f,#ff235c,#ff2058,#ff1d55,#ff1a52,#ff174f,#ff154c,#ff124a,#ff1047,#ff0e45,#ff0b43,#ff0940,#ff073e,#ff063d,#ff043b,#ff0239,#ff0137,#ff0036,#ff0034,#ff0033,#ff0031,#ff0030,#ff002e,#ff002d,#ff002c,#ff002b,#ff002a,#ff0028,#ff0027,#ff0026,#ff0025,#ff0024,#ff0024,#ff0023,#ff0022,#ff0021,#ff0020,#ff001f,#ff001e,#ff001e,#ff001d,#ff001c,#ff001c,#ff001b,#ff001a,#ff001a,#ff0019,#ff0018,#ff0018,#ff0017,#ff0017,#ff0016,#ff0016)"></i>
<i style="left:12px;top:126px;width:630px;background:linear-gradient(90deg,#00ffd3,#00ffd5,#00ffd7,#00ffd9,#00ffdb,#00ffde,#00ffe0,#00ffe2,#00ffe5,#00ffe7,#00ffea,#00ffec,#00ffef,#00fff2,#00fff5,#00fff8,#00fffb,#00ffff,#00fcff,#00f9ff,#00f5ff,#00f2ff,#00eeff,#00ebff,#0de7ff,#1fe3ff,#31dfff,#43dcff,#55d8ff,#68d4ff,#7ad0ff,#8dccff,#a1c8ff,#b4c4ff,#c8c0ff,#dcbcff,#f0b8ff,#ffb0fa,#ff9fe7,#ff90d7,#ff83c9,#ff78bd,#ff6db1,#ff64a7,#ff5c9e,#ff5496,#ff4d8e,#ff4787,#ff4181,#ff3c7b,#ff3776,#ff3271,#ff2e6c,#ff2a68,#ff2663,#ff2260,#ff1f5c,#ff1c59,#ff1955,#ff1652,#ff1450,#ff114d,#ff0f4a,#ff0d48,#ff0b46,#ff0943,#ff0741,#ff053f,#ff033d,#ff013c,#ff003a,#ff0038,#ff0037,#ff0035,#ff0034,#ff0032,#ff0031,#ff002f,#ff002e,#ff002d,#ff002c,#ff002b,#ff0029,#ff0028,#ff0027,#ff0026,#ff0025,#ff0024,#ff0024,#ff0023,#ff0022,#ff0021,#ff0020,#ff001f,#ff001f,#ff001e,#ff001d,#ff001d,#ff001c,#ff001b,#ff001b,#ff001a,#ff0019,#ff0019,#ff0018,#ff0018)"></i>
<i style="left:12px;top:129px;width:630px;background:linear-gradient(90deg,#00ffdb,#00ffdd,#00ffdf,#00ffe1,#00ffe3,#00ffe6,#00ffe8,#00ffeb,#00ffed,#00fff0,#00fff3,#00fff5,#00fff8,#00fffb,#00fffe,#00fcff,#00f9ff,#00f6ff,#00f2ff,#00efff,#00ecff,#00e8ff,#00e5ff,#00e1ff,#0bddff,#1ddaff,#2ed6ff,#3fd2ff,#51cfff,#63cbff,#75c7ff,#87c3ff,#9abfff,#adbbff,#c0b7ff,#d3b3ff,#e7afff,#faabff,#ff9df1,#ff8fe0,#ff82d1,#ff76c4,#ff6cb8,#ff63ae,#ff5aa4,#ff539c,#ff4c94,#ff468d,#ff4086,#ff3a80,#ff357a,#ff3175,#ff2d70,#ff296c,#ff2568,#ff2164,#ff1e60,#ff1b5c,#ff1859,#ff1556,#ff1353,#ff1050,#ff0e4e,#ff0c4b,#ff0a49,#ff0846,#ff0644,#ff0442,#ff0240,#ff013e,#ff003c,#ff003b,#ff0039,#ff0037,#ff0036,#ff0034,#ff0033,#ff0032,#ff0030,#ff002f,#ff002e,#ff002d,#ff002c,#ff002a,#ff0029,#ff0028,#ff0027,#ff0026,#ff0025,#ff0025,#ff0024,#ff0023,#ff0022,#ff0021,#ff0020,#ff0020,#ff001f,#ff001e,#ff001d,#ff001d,#ff001c,#ff001b,#ff001b,#ff001a,#ff001a,#ff0019)"></i>
<i style="left:12px;top:132px;width:624px;background:linear-gradient(90deg,#00ffe2,#00ffe4,#00ffe7,#00ffe9,#00ffeb,#00ffee,#00fff0,#00fff3,#00fff6,#00fff9,#00fffb,#00fffe,#00fcff,#00f9ff,#00f6ff,#00f3ff,#00f0ff,#00ecff,#00e9ff,#00e6ff,#00e2ff,#00dfff,#00dcff,#00d8ff,#0ad5ff,#1ad1ff,#2bcdff,#3ccaff,#4dc6ff,#5fc2ff,#70bfff,#82bbff,#94b7ff,#a6b3ff,#b8afff,#cbabff,#dea7ff,#f1a3ff,#ff9cfa,#ff8de9,#ff80d9,#ff75cc,#ff6abf,#ff61b5,#ff59ab,#ff51a2,#ff4b9a,#ff4492,#ff3e8b,#ff3985,#ff347f,#ff307a,#ff2b75,#ff2770,#ff246c,#ff2068,#ff1d64,#ff1a60,#ff175d,#ff1459,#ff1256,#ff0f53,#ff0d51,#ff0b4e,#ff094c,#ff0749,#ff0547,#ff0345,#ff0143,#ff0041,#ff003f,#ff003d,#ff003c,#ff003a,#ff0038,#ff0037,#ff0035,#ff0034,#ff0033,#ff0031,#ff0030,#ff002f,#ff002e,#ff002c,#ff002b,#ff002a,#ff0029,#ff0028,#ff0027,#ff0026,#ff0025,#ff0025,#ff0024,#ff0023,#ff0022,#ff0021,#ff0021,#ff0020,#ff001f,#ff001e,#ff001e,#ff001d,#ff001c,#ff001c,#ff001b)"></i>
<i style="left:12px;top:135px;width:624px;background:linear-gradient(90deg,#00ffea,#00ffec,#00ffee,#00fff1,#00fff3,#00fff6,#00fff9,#00fffc,#00fffe,#00fdff,#00faff,#00f7ff,#00f3ff,#00f0ff,#00edff,#00eaff,#00e7ff,#00e4ff,#00e0ff,#00ddff,#00daff,#00d7ff,#00d3ff,#00d0ff,#08ccff,#18c9ff,#29c5ff,#39c2ff,#4abeff,#5abaff,#6bb7ff,#7db3ff,#8eafff,#a0abff,#b1a7ff,#c3a3ff,#d69fff,#e89bff,#fb97ff,#ff8bf1,#ff7ee1,#ff73d3,#ff69c7,#ff60bb,#ff57b1,#ff50a8,#ff499f,#ff4398,#ff3d91,#ff388a,#ff3384,#ff2f7e,#ff2a79,#ff2674,#ff2370,#ff1f6c,#ff1c68,#ff1964,#ff1660,#ff135d,#ff115a,#ff0f57,#ff0c54,#ff0a51,#ff084f,#ff064c,#ff044a,#ff0248,#ff0146,#ff0044,#ff0042,#ff0040,#ff003e,#ff003c,#ff003b,#ff0039,#ff0038,#ff0036,#ff0035,#ff0033,#ff0032,#ff0031,#ff0030,#ff002f,#ff002d,#ff002c,#ff002b,#ff002a,#ff0029,#ff0028,#ff0027,#ff0026,#ff0025,#ff0025,#ff0024,#ff0023,#ff0022,#ff0021,#ff0021,#ff0020,#ff001f,#ff001f,#ff001e,#ff001d,#ff001d)"></i>
<i style="left:18px;top:138px;width:612px;background:linear-gradient(90deg,#00fff4,#00fff6,#00fff9,#00fffc,#00fffe,#00fdff,#00faff,#00f7ff,#00f4ff,#00f1ff,#00eeff,#00ebff,#00e8ff,#00e5ff,#00e2ff,#00dfff,#00dbff,#00d8ff,#00d5ff,#00d2ff,#00ceff,#00cbff,#00c8ff,#07c4ff,#16c1ff,#26bdff,#36baff,#46b6ff,#57b3ff,#67afff,#78abff,#89a8ff,#9aa4ff,#aba0ff,#bc9cff,#ce98ff,#e094ff,#f290ff,#ff8afa,#ff7dea,#ff72db,#ff67ce,#ff5ec2,#ff56b8,#ff4fae,#ff48a5,#ff429d,#ff3c96,#ff378f,#ff3289,#ff2d83,#ff297e,#ff2579,#ff2274,#ff1e70,#ff1b6b,#ff1868,#ff1564,#ff1360,#ff105d,#ff0e5a,#ff0b57,#ff0954,#ff0752,#ff054f,#ff034d,#ff024b,#ff0048,#ff0046,#ff0044,#ff0042,#ff0041,#ff003f,#ff003d,#ff003c,#ff003a,#ff0039,#ff0037,#ff0036,#ff0034,#ff0033,#ff0032,#ff0031,#ff002f,#ff002e,#ff002d,#ff002c,#ff002b,#ff002a,#ff0029,#ff0028,#ff0027,#ff0026,#ff0026,#ff0025,#ff0024,#ff0023,#ff0022,#ff0022,#ff0021,#ff0020,#ff001f,#ff001f)"></i>
<i style="left:18px;top:141px;width:612px;background:linear-gradient(90deg,#00fffc,#00fffe,#00fdff,#00faff,#00f7ff,#00f4ff,#00f2ff,#00efff,#00ecff,#00e9ff,#00e6ff,#00e3ff,#00e0ff,#00ddff,#00daff,#00d7ff,#00d4ff,#00d1ff,#00cdff,#00caff,#00c7ff,#00c4ff,#00c0ff,#05bdff,#15b9ff,#24b6ff,#33b3ff,#43afff,#53acff,#63a8ff,#73a4ff,#83a1ff,#949dff,#a599ff,#b595ff,#c792ff,#d88eff,#e98aff,#fb86ff,#ff7bf2,#ff70e3,#ff66d5,#ff5dc9,#ff55be,#ff4db4,#ff47ab,#ff40a3,#ff3b9b,#ff3594,#ff318e,#ff2c88,#ff2882,#ff247d,#ff2178,#ff1d74,#ff1a6f,#ff176b,#ff1468,#ff1264,#ff0f61,#ff0d5d,#ff0a5a,#ff0858,#ff0655,#ff0452,#ff0250,#ff014d,#ff004b,#ff0049,#ff0047,#ff0045,#ff0043,#ff0041,#ff0040,#ff003e,#ff003c,#ff003b,#ff0039,#ff0038,#ff0036,#ff0035,#ff0034,#ff0033,#ff0031,#ff0030,#ff002f,#ff002e,#ff002d,#ff002c,#ff002b,#ff002a,#ff0029,#ff0028,#ff0027,#ff0026,#ff0026,#ff0025,#ff0024,#ff0023,#ff0022,#ff0022,#ff0021,#ff0020)"></i>
<i style="left:18px;top:144px;width:606px;background:linear-gradient(90deg,#00faff,#00f8ff,#00f5ff,#00f2ff,#00efff,#00edff,#00eaff,#00e7ff,#00e4ff,#00e1ff,#00deff,#00dbff,#00d8ff,#00d5ff,#00d2ff,#00cfff,#00ccff,#00c9ff,#00c6ff,#00c3ff,#00c0ff,#00bcff,#00b9ff,#04b6ff,#13b2ff,#22afff,#31acff,#40a8ff,#4fa5ff,#5fa1ff,#6f9eff,#7f9aff,#8f96ff,#9f93ff,#af8fff,#c08bff,#d088ff,#e184ff,#f280ff,#ff7afa,#ff6eeb,#ff64dd,#ff5bd0,#ff53c5,#ff4cba,#ff45b1,#ff3fa8,#ff39a1,#ff3499,#ff2f93,#ff2b8c,#ff2787,#ff2381,#ff1f7c,#ff1c78,#ff1973,#ff166f,#ff136b,#ff1168,#ff0e64,#ff0c61,#ff0a5e,#ff075b,#ff0558,#ff0355,#ff0253,#ff0050,#ff004e,#ff004c,#ff004a,#ff0048,#ff0046,#ff0044,#ff0042,#ff0040,#ff003f,#ff003d,#ff003c,#ff003a,#ff0039,#ff0037,#ff0036,#ff0035,#ff0033,#ff0032,#ff0031,#ff0030,#ff002f,#ff002e,#ff002d,#ff002c,#ff002b,#ff002a,#ff0029,#ff0028,#ff0027,#ff0026,#ff0026,#ff0025,#ff0024,#ff0023,#ff0022)"></i>
<i style="left:18px;top:147px;width:606px;background:linear-gradient(90deg,#00f3ff,#00f0ff,#00edff,#00ebff,#00e8ff,#00e5ff,#00e2ff,#00e0ff,#00ddff,#00daff,#00d7ff,#00d4ff,#00d1ff,#00ceff,#00cbff,#00c8ff,#00c5ff,#00c2ff,#00bfff,#00bcff,#00b9ff,#00b6ff,#00b2ff,#03afff,#11acff,#20a8ff,#2ea5ff,#3da2ff,#4c9eff,#5b9bff,#6b97ff,#7a94ff,#8a90ff,#998dff,#a989ff,#b985ff,#c982ff,#da7eff,#ea7aff,#fb76ff,#ff6df3,#ff63e4,#ff5ad7,#ff52cb,#ff4ac1,#ff44b7,#ff3eae,#ff38a6,#ff339f,#ff2e98,#ff2a91,#ff268b,#ff2286,#ff1e81,#ff1b7c,#ff1877,#ff1573,#ff126f,#ff106b,#ff0d68,#ff0b64,#ff0961,#ff065e,#ff055b,#ff0358,#ff0156,#ff0053,#ff0051,#ff004f,#ff004c,#ff004a,#ff0048,#ff0046,#ff0045,#ff0043,#ff0041,#ff003f,#ff003e,#ff003c,#ff003b,#ff0039,#ff0038,#ff0037,#ff0035,#ff0034,#ff0033,#ff0032,#ff0031,#ff0030,#ff002f,#ff002e,#ff002d,#ff002c,#ff002b,#ff002a,#ff0029,#ff0028,#ff0027,#ff0026,#ff0026,#ff0025,#ff0024)"></i>
<i style="left:18px;top:150px;width:600px;background:linear-gradient(90deg,#00ebff,#00e9ff,#00e6ff,#00e3ff,#00e1ff,#00deff,#00dbff,#00d9ff,#00d6ff,#00d3ff,#00d0ff,#00cdff,#00caff,#00c7ff,#00c4ff,#00c2ff,#00bfff,#00bbff,#00b8ff,#00b5ff,#00b2ff,#00afff,#00acff,#02a9ff,#10a5ff,#1ea2ff,#2c9fff,#3a9cff,#4998ff,#5895ff,#6791ff,#768eff,#858aff,#9487ff,#a383ff,#b380ff,#c37cff,#d378ff,#e375ff,#f371ff,#ff6bfb,#ff61ec,#ff58de,#ff50d2,#ff49c7,#ff42bd,#ff3cb4,#ff37ab,#ff32a4,#ff2d9d,#ff2996,#ff2590,#ff218a,#ff1d85,#ff1a80,#ff177b,#ff1477,#ff1173,#ff0f6f,#ff0c6b,#ff0a68,#ff0864,#ff0661,#ff045e,#ff025b,#ff0059,#ff0056,#ff0054,#ff0051,#ff004f,#ff004d,#ff004b,#ff0049,#ff0047,#ff0045,#ff0043,#ff0042,#ff0040,#ff003f,#ff003d,#ff003c,#ff003a,#ff0039,#ff0037,#ff0036,#ff0035,#ff0034,#ff0033,#ff0032,#ff0030,#ff002f,#ff002e,#ff002d,#ff002c,#ff002b,#ff002b,#ff002a,#ff0029,#ff0028,#ff0027,#ff0026)"></i>
<i style="left:24px;top:153px;width:594px;background:linear-gradient(90deg,#00e2ff,#00dfff,#00ddff,#00daff,#00d7ff,#00d5ff,#00d2ff,#00cfff,#00ccff,#00c9ff,#00c7ff,#00c4ff,#00c1ff,#00beff,#00bbff,#00b8ff,#00b5ff,#00b2ff,#00afff,#00acff,#00a9ff,#00a6ff,#00a3ff,#0e9fff,#1c9cff,#2a99ff,#3896ff,#4692ff,#548fff,#638cff,#7188ff,#8085ff,#8f81ff,#9e7eff,#ad7aff,#bd77ff,#cc73ff,#dc70ff,#eb6cff,#fb68ff,#ff60f3,#ff57e5,#ff4fd9,#ff48cd,#ff41c3,#ff3bba,#ff36b1,#ff30a9,#ff2ca2,#ff279b,#ff2394,#ff208f,#ff1c89,#ff1984,#ff167f,#ff137b,#ff1076,#ff0e72,#ff0b6f,#ff096b,#ff0768,#ff0564,#ff0361,#ff015e,#ff005c,#ff0059,#ff0056,#ff0054,#ff0052,#ff0050,#ff004d,#ff004b,#ff0049,#ff0048,#ff0046,#ff0044,#ff0042,#ff0041,#ff003f,#ff003e,#ff003c,#ff003b,#ff0039,#ff0038,#ff0037,#ff0036,#ff0035,#ff0033,#ff0032,#ff0031,#ff0030,#ff002f,#ff002e,#ff002d,#ff002c,#ff002b,#ff002a,#ff002a,#ff0029,#ff0028)"></i>
<i style="left:24px;top:156px;width:588px;background:linear-gradient(90deg,#00dbff,#00d9ff,#00d6ff,#00d3ff,#00d1ff,#00ceff,#00cbff,#00c9ff,#00c6ff,#00c3ff,#00c0ff,#00beff,#00bbff,#00b8ff,#00b5ff,#00b2ff,#00afff,#00acff,#00a9ff,#00a6ff,#00a3ff,#00a0ff,#009dff,#0d9aff,#1a97ff,#2893ff,#3590ff,#438dff,#518aff,#5f86ff,#6e83ff,#7c80ff,#8a7cff,#9979ff,#a875ff,#b772ff,#c66eff,#d56bff,#e467ff,#f464ff,#ff5efb,#ff55ec,#ff4ddf,#ff46d4,#ff40c9,#ff3abf,#ff34b6,#ff2fae,#ff2ba7,#ff26a0,#ff2299,#ff1e93,#ff1b8d,#ff1888,#ff1583,#ff127f,#ff0f7a,#ff0d76,#ff0a72,#ff086e,#ff066b,#ff0468,#ff0264,#ff0061,#ff005f,#ff005c,#ff0059,#ff0057,#ff0054,#ff0052,#ff0050,#ff004e,#ff004c,#ff004a,#ff0048,#ff0046,#ff0045,#ff0043,#ff0041,#ff0040,#ff003e,#ff003d,#ff003c,#ff003a,#ff0039,#ff0038,#ff0036,#ff0035,#ff0034,#ff0033,#ff0032,#ff0031,#ff0030,#ff002f,#ff002e,#ff002d,#ff002c,#ff002b,#ff002a)"></i>
<i style="left:24px;top:159px;width:588px;background:linear-gradient(90deg,#00d5ff,#00d2ff,#00d0ff,#00cdff,#00cbff,#00c8ff,#00c5ff,#00c3ff,#00c0ff,#00bdff,#00baff,#00b8ff,#00b5ff,#00b2ff,#00afff,#00acff,#00a9ff,#00a6ff,#00a3ff,#00a0ff,#009dff,#009aff,#0097ff,#0b94ff,#1991ff,#268eff,#338bff,#4188ff,#4e85ff,#5c81ff,#6a7eff,#787bff,#8677ff,#9474ff,#a271ff,#b16dff,#c06aff,#ce66ff,#dd63ff,#ec5fff,#fc5bff,#ff54f4,#ff4ce6,#ff45da,#ff3ecf,#ff38c5,#ff33bc,#ff2eb3,#ff29ac,#ff25a4,#ff219e,#ff1d98,#ff1a92,#ff178c,#ff1487,#ff1182,#ff0e7e,#ff0c7a,#ff0976,#ff0772,#ff056e,#ff036b,#ff0168,#ff0065,#ff0062,#ff005f,#ff005c,#ff005a,#ff0057,#ff0055,#ff0053,#ff0050,#ff004e,#ff004c,#ff004b,#ff0049,#ff0047,#ff0045,#ff0044,#ff0042,#ff0040,#ff003f,#ff003e,#ff003c,#ff003b,#ff003a,#ff0038,#ff0037,#ff0036,#ff0035,#ff0034,#ff0033,#ff0032,#ff0031,#ff0030,#ff002f,#ff002e,#ff002d,#ff002c)"></i>
<i style="left:24px;top:162px;width:582px;background:linear-gradient(90deg,#00cfff,#00ccff,#00caff,#00c7ff,#00c5ff,#00c2ff,#00bfff,#00bdff,#00baff,#00b7ff,#00b5ff,#00b2ff,#00afff,#00acff,#00aaff,#00a7ff,#00a4ff,#00a1ff,#009eff,#009bff,#0098ff,#0095ff,#0092ff,#0a8fff,#178cff,#2489ff,#3186ff,#3e83ff,#4b80ff,#597cff,#6679ff,#7476ff,#8273ff,#8f6fff,#9d6cff,#ac69ff,#ba65ff,#c862ff,#d75eff,#e55bff,#f457ff,#ff52fb,#ff4aed,#ff43e1,#ff3dd5,#ff37cb,#ff32c1,#ff2db9,#ff28b1,#ff24a9,#ff20a2,#ff1c9c,#ff1996,#ff1690,#ff138b,#ff1086,#ff0d82,#ff0b7d,#ff0879,#ff0675,#ff0472,#ff026e,#ff006b,#ff0068,#ff0065,#ff0062,#ff005f,#ff005c,#ff005a,#ff0057,#ff0055,#ff0053,#ff0051,#ff004f,#ff004d,#ff004b,#ff0049,#ff0047,#ff0046,#ff0044,#ff0043,#ff0041,#ff0040,#ff003e,#ff003d,#ff003c,#ff003a,#ff0039,#ff0038,#ff0037,#ff0036,#ff0034,#ff0033,#ff0032,#ff0031,#ff0030,#ff002f,#ff002e)"></i>
<i style="left:24px;top:165px;width:582px;background:linear-gradient(90deg,#00c9ff,#00c7ff,#00c4ff,#00c1ff,#00bfff,#00bcff,#00baff,#00b7ff,#00b4ff,#00b2ff,#00afff,#00acff,#00aaff,#00a7ff,#00a4ff,#00a1ff,#009fff,#009cff,#0099ff,#0096ff,#0093ff,#0090ff,#008dff,#098aff,#1587ff,#2284ff,#2f81ff,#3c7eff,#497bff,#5678ff,#6375ff,#7071ff,#7e6eff,#8b6bff,#9968ff,#a664ff,#b461ff,#c25eff,#d15aff,#df57ff,#ed53ff,#fc50ff,#ff49f4,#ff42e7,#ff3bdb,#ff36d1,#ff30c7,#ff2bbe,#ff27b6,#ff23ae,#ff1fa7,#ff1ba1,#ff189a,#ff1495,#ff118f,#ff0f8a,#ff0c85,#ff0a81,#ff077d,#ff0579,#ff0375,#ff0171,#ff006e,#ff006b,#ff0068,#ff0065,#ff0062,#ff005f,#ff005d,#ff005a,#ff0058,#ff0056,#ff0053,#ff0051,#ff004f,#ff004d,#ff004c,#ff004a,#ff0048,#ff0046,#ff0045,#ff0043,#ff0042,#ff0040,#ff003f,#ff003d,#ff003c,#ff003b,#ff003a,#ff0038,#ff0037,#ff0036,#ff0035,#ff0034,#ff0033,#ff0032,#ff0031,#ff0030)"></i>
<i style="left:30px;top:168px;width:570px;background:linear-gradient(90deg,#00c1ff,#00beff,#00bcff,#00b9ff,#00b7ff,#00b4ff,#00b2ff,#00afff,#00acff,#00aaff,#00a7ff,#00a4ff,#00a2ff,#009fff,#009cff,#009aff,#0097ff,#0094ff,#0091ff,#008eff,#008bff,#0088ff,#0885ff,#1482ff,#207fff,#2d7cff,#3979ff,#4676ff,#5373ff,#6070ff,#6d6dff,#7a6aff,#8767ff,#9463ff,#a260ff,#af5dff,#bd5aff,#cb56ff,#d953ff,#e74fff,#f54cff,#ff47fb,#ff40ee,#ff3ae2,#ff34d7,#ff2fcd,#ff2ac4,#ff25bb,#ff21b3,#ff1dac,#ff1aa5,#ff169f,#ff1399,#ff1093,#ff0e8e,#ff0b89,#ff0985,#ff0680,#ff047c,#ff0278,#ff0075,#ff0071,#ff006e,#ff006b,#ff0068,#ff0065,#ff0062,#ff005f,#ff005d,#ff005a,#ff0058,#ff0056,#ff0054,#ff0052,#ff0050,#ff004e,#ff004c,#ff004a,#ff0049,#ff0047,#ff0045,#ff0044,#ff0042,#ff0041,#ff003f,#ff003e,#ff003d,#ff003c,#ff003a,#ff0039,#ff0038,#ff0037,#ff0036,#ff0035,#ff0034,#ff0033)"></i>
<i style="left:30px;top:171px;width:570px;background:linear-gradient(90deg,#00bcff,#00b9ff,#00b7ff,#00b4ff,#00b2ff,#00afff,#00adff,#00aaff,#00a7ff,#00a5ff,#00a2ff,#00a0ff,#009dff,#009aff,#0097ff,#0095ff,#0092ff,#008fff,#008cff,#008aff,#0087ff,#0084ff,#0781ff,#137eff,#1f7bff,#2b78ff,#3775ff,#4372ff,#506fff,#5c6cff,#6969ff,#7666ff,#8363ff,#905fff,#9d5cff,#aa59ff,#b856ff,#c552ff,#d34fff,#e04cff,#ee48ff,#fc45ff,#ff3ff4,#ff39e8,#ff33dd,#ff2ed2,#ff29c9,#ff24c0,#ff20b8,#ff1cb1,#ff19aa,#ff15a3,#ff129d,#ff0f97,#ff0d92,#ff0a8d,#ff0888,#ff0584,#ff0380,#ff017c,#ff0078,#ff0074,#ff0071,#ff006e,#ff006b,#ff0068,#ff0065,#ff0062,#ff0060,#ff005d,#ff005b,#ff0058,#ff0056,#ff0054,#ff0052,#ff0050,#ff004e,#ff004c,#ff004b,#ff0049,#ff0047,#ff0046,#ff0044,#ff0043,#ff0041,#ff0040,#ff003f,#ff003d,#ff003c,#ff003b,#ff003a,#ff0039,#ff0037,#ff0036,#ff0035,#ff0034)"></i>
<i style="left:30px;top:174px;width:564px;background:linear-gradient(90deg,#00b6ff,#00b4ff,#00b2ff,#00afff,#00adff,#00aaff,#00a8ff,#00a5ff,#00a3ff,#00a0ff,#009dff,#009bff,#0098ff,#0095ff,#0093ff,#0090ff,#008dff,#008bff,#0088ff,#0085ff,#0082ff,#007fff,#067dff,#117aff,#1d77ff,#2974ff,#3571ff,#416eff,#4d6bff,#5a68ff,#6665ff,#7262ff,#7f5fff,#8c5cff,#9958ff,#a555ff,#b252ff,#c04fff,#cd4cff,#da48ff,#e845ff,#f542ff,#ff3dfb,#ff37ee,#ff31e3,#ff2cd8,#ff27ce,#ff23c5,#ff1fbd,#ff1bb5,#ff17ae,#ff14a8,#ff11a1,#ff0e9c,#ff0c96,#ff0991,#ff078c,#ff0488,#ff0283,#ff007f,#ff007b,#ff0078,#ff0074,#ff0071,#ff006e,#ff006b,#ff0068,#ff0065,#ff0062,#ff0060,#ff005d,#ff005b,#ff0059,#ff0057,#ff0054,#ff0052,#ff0051,#ff004f,#ff004d,#ff004b,#ff0049,#ff0048,#ff0046,#ff0045,#ff0043,#ff0042,#ff0041,#ff003f,#ff003e,#ff003d,#ff003c,#ff003a,#ff0039,#ff0038,#ff0037)"></i>
<i style="left:30px;top:177px;width:564px;background:linear-gradient(90deg,#00b2ff,#00afff,#00adff,#00aaff,#00a8ff,#00a5ff,#00a3ff,#00a0ff,#009eff,#009bff,#0099ff,#0096ff,#0094ff,#0091ff,#008eff,#008cff,#0089ff,#0086ff,#0083ff,#0081ff,#007eff,#007bff,#0478ff,#1076ff,#1c73ff,#2770ff,#336dff,#3f6aff,#4b67ff,#5764ff,#6361ff,#6f5eff,#7b5bff,#8858ff,#9455ff,#a152ff,#ae4fff,#ba4bff,#c748ff,#d445ff,#e242ff,#ef3fff,#fc3bff,#ff36f5,#ff30e9,#ff2bde,#ff26d4,#ff22cb,#ff1ec2,#ff1aba,#ff16b3,#ff13ac,#ff10a6,#ff0da0,#ff0a9a,#ff0895,#ff0690,#ff038b,#ff0187,#ff0083,#ff007f,#ff007b,#ff0077,#ff0074,#ff0071,#ff006d,#ff006a,#ff0068,#ff0065,#ff0062,#ff0060,#ff005d,#ff005b,#ff0059,#ff0057,#ff0055,#ff0053,#ff0051,#ff004f,#ff004d,#ff004c,#ff004a,#ff0048,#ff0047,#ff0045,#ff0044,#ff0042,#ff0041,#ff0040,#ff003f,#ff003d,#ff003c,#ff003b,#ff003a,#ff0039)"></i>
<i style="left:30px;top:180px;width:564px;background:linear-gradient(90deg,#00adff,#00aaff,#00a8ff,#00a6ff,#00a3ff,#00a1ff,#009eff,#009cff,#0099ff,#0097ff,#0094ff,#0092ff,#008fff,#008dff,#008aff,#0087ff,#0085ff,#0082ff,#007fff,#007dff,#007aff,#0077ff,#0474ff,#0f72ff,#1a6fff,#256cff,#3169ff,#3d66ff,#4863ff,#5460ff,#605dff,#6c5aff,#7857ff,#8454ff,#9051ff,#9c4eff,#a94bff,#b548ff,#c245ff,#cf42ff,#dc3fff,#e93bff,#f638ff,#ff34fb,#ff2fef,#ff29e4,#ff25d9,#ff20d0,#ff1cc7,#ff19bf,#ff15b8,#ff12b1,#ff0faa,#ff0ca4,#ff099e,#ff0799,#ff0594,#ff028f,#ff008a,#ff0086,#ff0082,#ff007e,#ff007a,#ff0077,#ff0074,#ff0070,#ff006d,#ff006a,#ff0068,#ff0065,#ff0062,#ff0060,#ff005e,#ff005b,#ff0059,#ff0057,#ff0055,#ff0053,#ff0051,#ff004f,#ff004e,#ff004c,#ff004a,#ff0049,#ff0047,#ff0046,#ff0044,#ff0043,#ff0042,#ff0040,#ff003f,#ff003e,#ff003d,#ff003c,#ff003a)"></i>
<i style="left:36px;top:183px;width:552px;background:linear-gradient(90deg,#00a6ff,#00a3ff,#00a1ff,#009fff,#009cff,#009aff,#0097ff,#0095ff,#0092ff,#0090ff,#008dff,#008bff,#0088ff,#0086ff,#0083ff,#0081ff,#007eff,#007bff,#0079ff,#0076ff,#0073ff,#0371ff,#0e6eff,#196bff,#2468ff,#2f65ff,#3a63ff,#4660ff,#515dff,#5d5aff,#6957ff,#7454ff,#8051ff,#8c4eff,#984bff,#a448ff,#b145ff,#bd42ff,#ca3fff,#d63cff,#e339ff,#ef35ff,#fc32ff,#ff2df5,#ff28ea,#ff23df,#ff1fd5,#ff1bcc,#ff17c4,#ff14bc,#ff11b5,#ff0eae,#ff0ba8,#ff08a2,#ff069d,#ff0397,#ff0192,#ff008e,#ff0089,#ff0085,#ff0081,#ff007e,#ff007a,#ff0077,#ff0073,#ff0070,#ff006d,#ff006a,#ff0068,#ff0065,#ff0063,#ff0060,#ff005e,#ff005c,#ff0059,#ff0057,#ff0055,#ff0053,#ff0052,#ff0050,#ff004e,#ff004c,#ff004b,#ff0049,#ff0048,#ff0046,#ff0045,#ff0044,#ff0042,#ff0041,#ff0040,#ff003e,#ff003d)"></i>
<i style="left:36px;top:186px;width:552px;background:linear-gradient(90deg,#00a1ff,#009fff,#009dff,#009aff,#0098ff,#0096ff,#0093ff,#0091ff,#008eff,#008cff,#0089ff,#0087ff,#0084ff,#0082ff,#007fff,#007dff,#007aff,#0077ff,#0075ff,#0072ff,#0070ff,#026dff,#0c6aff,#1767ff,#2265ff,#2d62ff,#385fff,#445cff,#4f59ff,#5a57ff,#6654ff,#7151ff,#7d4eff,#894bff,#9448ff,#a045ff,#ac42ff,#b83fff,#c43cff,#d139ff,#dd36ff,#ea33ff,#f62fff,#ff2cfb,#ff27ef,#ff22e5,#ff1edb,#ff1ad1,#ff16c9,#ff13c1,#ff0fba,#ff0db3,#ff0aac,#ff07a6,#ff05a1,#ff029b,#ff0096,#ff0091,#ff008d,#ff0089,#ff0085,#ff0081,#ff007d,#ff007a,#ff0076,#ff0073,#ff0070,#ff006d,#ff006a,#ff0068,#ff0065,#ff0063,#ff0060,#ff005e,#ff005c,#ff005a,#ff0058,#ff0056,#ff0054,#ff0052,#ff0050,#ff004f,#ff004d,#ff004b,#ff004a,#ff0048,#ff0047,#ff0045,#ff0044,#ff0043,#ff0041,#ff0040,#ff003f)"></i>
<i style="left:36px;top:189px;width:546px;background:linear-gradient(90deg,#009dff,#009bff,#0099ff,#0096ff,#0094ff,#0092ff,#008fff,#008dff,#008aff,#0088ff,#0085ff,#0083ff,#0080ff,#007eff,#007bff,#0079ff,#0076ff,#0074ff,#0071ff,#006fff,#006cff,#0169ff,#0b67ff,#1664ff,#2161ff,#2c5fff,#365cff,#4159ff,#4c56ff,#5853ff,#6351ff,#6e4eff,#794bff,#8548ff,#9045ff,#9c42ff,#a83fff,#b43cff,#c039ff,#cc36ff,#d833ff,#e430ff,#f02dff,#fc2aff,#ff25f5,#ff21ea,#ff1ce0,#ff18d7,#ff15ce,#ff11c6,#ff0ebe,#ff0bb7,#ff09b1,#ff06aa,#ff04a5,#ff019f,#ff009a,#ff0095,#ff0090,#ff008c,#ff0088,#ff0084,#ff0080,#ff007d,#ff0079,#ff0076,#ff0073,#ff0070,#ff006d,#ff006a,#ff0068,#ff0065,#ff0063,#ff0060,#ff005e,#ff005c,#ff005a,#ff0058,#ff0056,#ff0054,#ff0052,#ff0051,#ff004f,#ff004d,#ff004c,#ff004a,#ff0049,#ff0047,#ff0046,#ff0045,#ff0043,#ff0042)"></i>
<i style="left:36px;top:192px;width:546px;background:linear-gradient(90deg,#0099ff,#0097ff,#0095ff,#0092ff,#0090ff,#008eff,#008bff,#0089ff,#0086ff,#0084ff,#0082ff,#007fff,#007dff,#007aff,#0078ff,#0075ff,#0073ff,#0070ff,#006eff,#006bff,#0068ff,#0066ff,#0a63ff,#1561ff,#1f5eff,#2a5bff,#3559ff,#3f56ff,#4a53ff,#5550ff,#604eff,#6b4bff,#7648ff,#8145ff,#8d42ff,#983fff,#a43cff,#af39ff,#bb36ff,#c733ff,#d230ff,#de2dff,#ea2aff,#f627ff,#ff24fb,#ff1ff0,#ff1be6,#ff17dc,#ff14d3,#ff10cb,#ff0dc3,#ff0abc,#ff08b5,#ff05ae,#ff03a8,#ff00a3,#ff009e,#ff0099,#ff0094,#ff008f,#ff008b,#ff0087,#ff0083,#ff0080,#ff007c,#ff0079,#ff0076,#ff0073,#ff0070,#ff006d,#ff006a,#ff0068,#ff0065,#ff0063,#ff0061,#ff005e,#ff005c,#ff005a,#ff0058,#ff0056,#ff0054,#ff0053,#ff0051,#ff004f,#ff004e,#ff004c,#ff004b,#ff0049,#ff0048,#ff0046,#ff0045,#ff0044)"></i>
<i style="left:42px;top:195px;width:534px;background:linear-gradient(90deg,#0093ff,#0091ff,#008eff,#008cff,#008aff,#0087ff,#0085ff,#0083ff,#0080ff,#007eff,#007cff,#0079ff,#0077ff,#0074ff,#0072ff,#006fff,#006dff,#006aff,#0068ff,#0065ff,#0063ff,#0960ff,#145dff,#1e5bff,#2858ff,#3355ff,#3d53ff,#4850ff,#534dff,#5d4bff,#6848ff,#7345ff,#7e42ff,#893fff,#943dff,#a03aff,#ab37ff,#b634ff,#c231ff,#cd2eff,#d92bff,#e528ff,#f125ff,#fd22ff,#ff1ef6,#ff1aeb,#ff16e1,#ff12d8,#ff0fcf,#ff0cc7,#ff09c0,#ff06b9,#ff04b3,#ff02ac,#ff00a7,#ff00a1,#ff009c,#ff0097,#ff0093,#ff008e,#ff008a,#ff0086,#ff0083,#ff007f,#ff007c,#ff0078,#ff0075,#ff0072,#ff0070,#ff006d,#ff006a,#ff0068,#ff0065,#ff0063,#ff0061,#ff005e,#ff005c,#ff005a,#ff0058,#ff0057,#ff0055,#ff0053,#ff0051,#ff0050,#ff004e,#ff004c,#ff004b,#ff004a,#ff0048,#ff0047)"></i>
<i style="left:42px;top:198px;width:534px;background:linear-gradient(90deg,#008fff,#008dff,#008bff,#0088ff,#0086ff,#0084ff,#0081ff,#007fff,#007dff,#007aff,#0078ff,#0076ff,#0073ff,#0071ff,#006eff,#006cff,#0069ff,#0067ff,#0064ff,#0062ff,#005fff,#085dff,#125aff,#1d58ff,#2755ff,#3152ff,#3b50ff,#464dff,#504aff,#5b48ff,#6545ff,#7042ff,#7b40ff,#863dff,#913aff,#9c37ff,#a734ff,#b231ff,#bd2fff,#c92cff,#d429ff,#e026ff,#eb23ff,#f720ff,#ff1cfb,#ff18f0,#ff14e6,#ff11dd,#ff0ed4,#ff0bcc,#ff08c4,#ff05bd,#ff03b7,#ff00b0,#ff00ab,#ff00a5,#ff00a0,#ff009b,#ff0096,#ff0092,#ff008e,#ff008a,#ff0086,#ff0082,#ff007f,#ff007b,#ff0078,#ff0075,#ff0072,#ff006f,#ff006d,#ff006a,#ff0068,#ff0065,#ff0063,#ff0061,#ff005f,#ff005d,#ff005b,#ff0059,#ff0057,#ff0055,#ff0053,#ff0052,#ff0050,#ff004e,#ff004d,#ff004b,#ff004a,#ff0049)"></i>
<i style="left:42px;top:201px;width:528px;background:linear-gradient(90deg,#008bff,#0089ff,#0087ff,#0085ff,#0083ff,#0080ff,#007eff,#007cff,#0079ff,#0077ff,#0075ff,#0072ff,#0070ff,#006eff,#006bff,#0069ff,#0066ff,#0064ff,#0061ff,#005fff,#005cff,#075aff,#1157ff,#1b55ff,#2552ff,#2f50ff,#394dff,#444aff,#4e48ff,#5845ff,#6342ff,#6d40ff,#783dff,#823aff,#8d37ff,#9835ff,#a332ff,#ae2fff,#b92cff,#c429ff,#cf26ff,#da24ff,#e621ff,#f11eff,#fd1bff,#ff17f6,#ff13ec,#ff10e2,#ff0cd9,#ff09d1,#ff07c9,#ff04c2,#ff02bb,#ff00b4,#ff00ae,#ff00a9,#ff00a3,#ff009e,#ff009a,#ff0095,#ff0091,#ff008d,#ff0089,#ff0085,#ff0082,#ff007e,#ff007b,#ff0078,#ff0075,#ff0072,#ff006f,#ff006d,#ff006a,#ff0068,#ff0065,#ff0063,#ff0061,#ff005f,#ff005d,#ff005b,#ff0059,#ff0057,#ff0055,#ff0054,#ff0052,#ff0050,#ff004f,#ff004d,#ff004c)"></i>
<i style="left:42px;top:204px;width:528px;background:linear-gradient(90deg,#0088ff,#0086ff,#0084ff,#0081ff,#007fff,#007dff,#007bff,#0078ff,#0076ff,#0074ff,#0071ff,#006fff,#006dff,#006aff,#0068ff,#0066ff,#0063ff,#0061ff,#005eff,#005cff,#0059ff,#0657ff,#1054ff,#1a52ff,#244fff,#2e4dff,#384aff,#4248ff,#4c45ff,#5642ff,#6040ff,#6a3dff,#753aff,#7f38ff,#8a35ff,#9432ff,#9f30ff,#aa2dff,#b52aff,#c027ff,#ca24ff,#d621ff,#e11fff,#ec1cff,#f719ff,#ff16fc,#ff12f1,#ff0ee7,#ff0bde,#ff08d5,#ff06cd,#ff03c6,#ff01bf,#ff00b9,#ff00b2,#ff00ad,#ff00a7,#ff00a2,#ff009d,#ff0098,#ff0094,#ff0090,#ff008c,#ff0088,#ff0084,#ff0081,#ff007e,#ff007b,#ff0077,#ff0075,#ff0072,#ff006f,#ff006d,#ff006a,#ff0068,#ff0065,#ff0063,#ff0061,#ff005f,#ff005d,#ff005b,#ff0059,#ff0057,#ff0056,#ff0054,#ff0052,#ff0051,#ff004f,#ff004e)"></i>
<i style="left:42px;top:207px;width:522px;background:linear-gradient(90deg,#0085ff,#0082ff,#0080ff,#007eff,#007cff,#007aff,#0077ff,#0075ff,#0073ff,#0071ff,#006eff,#006cff,#006aff,#0067ff,#0065ff,#0063ff,#0060ff,#005eff,#005bff,#0059ff,#0057ff,#0654ff,#0f52ff,#194fff,#224dff,#2c4aff,#3648ff,#4045ff,#4a42ff,#5440ff,#5e3dff,#683bff,#7238ff,#7c35ff,#8733ff,#9130ff,#9b2dff,#a62bff,#b128ff,#bb25ff,#c622ff,#d11fff,#dc1dff,#e71aff,#f217ff,#fd14ff,#ff10f6,#ff0dec,#ff0ae3,#ff07da,#ff04d2,#ff02ca,#ff00c3,#ff00bd,#ff00b6,#ff00b0,#ff00ab,#ff00a6,#ff00a1,#ff009c,#ff0097,#ff0093,#ff008f,#ff008b,#ff0087,#ff0084,#ff0080,#ff007d,#ff007a,#ff0077,#ff0074,#ff0072,#ff006f,#ff006c,#ff006a,#ff0068,#ff0065,#ff0063,#ff0061,#ff005f,#ff005d,#ff005b,#ff0059,#ff0058,#ff0056,#ff0054,#ff0053,#ff0051)"></i>
<i style="left:48px;top:210px;width:516px;background:linear-gradient(90deg,#007fff,#007dff,#007bff,#0079ff,#0076ff,#0074ff,#0072ff,#0070ff,#006dff,#006bff,#0069ff,#0067ff,#0064ff,#0062ff,#0060ff,#005dff,#005bff,#0059ff,#0056ff,#0054ff,#0551ff,#0e4fff,#184cff,#214aff,#2b48ff,#3445ff,#3e42ff,#4840ff,#513dff,#5b3bff,#6538ff,#6f36ff,#7933ff,#8330ff,#8e2eff,#982bff,#a228ff,#ad26ff,#b723ff,#c220ff,#cc1dff,#d71bff,#e218ff,#ed15ff,#f712ff,#ff0ffc,#ff0cf1,#ff09e8,#ff06df,#ff03d7,#ff01cf,#ff00c7,#ff00c1,#ff00ba,#ff00b4,#ff00af,#ff00a9,#ff00a4,#ff009f,#ff009b,#ff0096,#ff0092,#ff008e,#ff008a,#ff0087,#ff0083,#ff0080,#ff007d,#ff007a,#ff0077,#ff0074,#ff0071,#ff006f,#ff006c,#ff006a,#ff0068,#ff0065,#ff0063,#ff0061,#ff005f,#ff005d,#ff005b,#ff005a,#ff0058,#ff0056,#ff0054,#ff0053)"></i>
<i style="left:48px;top:213px;width:510px;background:linear-gradient(90deg,#007cff,#007aff,#0078ff,#0075ff,#0073ff,#0071ff,#006fff,#006dff,#006aff,#0068ff,#0066ff,#0064ff,#0061ff,#005fff,#005dff,#005bff,#0058ff,#0056ff,#0053ff,#0051ff,#044fff,#0d4cff,#164aff,#2047ff,#2945ff,#3343ff,#3c40ff,#463eff,#4f3bff,#5939ff,#6336ff,#6d33ff,#7631ff,#802eff,#8a2cff,#9429ff,#9f26ff,#a924ff,#b321ff,#bd1eff,#c81cff,#d219ff,#dd16ff,#e713ff,#f210ff,#fd0eff,#ff0af6,#ff07ed,#ff05e4,#ff02db,#ff00d3,#ff00cc,#ff00c5,#ff00be,#ff00b8,#ff00b2,#ff00ad,#ff00a8,#ff00a3,#ff009e,#ff0099,#ff0095,#ff0091,#ff008d,#ff008a,#ff0086,#ff0083,#ff0080,#ff007c,#ff0079,#ff0077,#ff0074,#ff0071,#ff006f,#ff006c,#ff006a,#ff0068,#ff0065,#ff0063,#ff0061,#ff005f,#ff005d,#ff005c,#ff005a,#ff0058,#ff0056)"></i>
<i style="left:48px;top:216px;width:510px;background:linear-gradient(90deg,#0079ff,#0077ff,#0075ff,#0072ff,#0070ff,#006eff,#006cff,#006aff,#0068ff,#0065ff,#0063ff,#0061ff,#005fff,#005cff,#005aff,#0058ff,#0056ff,#0053ff,#0051ff,#004fff,#034cff,#0c4aff,#1547ff,#1e45ff,#2843ff,#3140ff,#3a3eff,#443bff,#4d39ff,#5736ff,#6034ff,#6a31ff,#742fff,#7d2cff,#872aff,#9127ff,#9b24ff,#a522ff,#af1fff,#b91cff,#c41aff,#ce17ff,#d814ff,#e312ff,#ed0fff,#f80cff,#ff09fc,#ff06f2,#ff03e8,#ff01e0,#ff00d8,#ff00d0,#ff00c9,#ff00c2,#ff00bc,#ff00b6,#ff00b0,#ff00ab,#ff00a6,#ff00a1,#ff009d,#ff0098,#ff0094,#ff0090,#ff008d,#ff0089,#ff0086,#ff0082,#ff007f,#ff007c,#ff0079,#ff0076,#ff0074,#ff0071,#ff006f,#ff006c,#ff006a,#ff0068,#ff0065,#ff0063,#ff0061,#ff005f,#ff005e,#ff005c,#ff005a,#ff0058)"></i>
<i style="left:48px;top:219px;width:504px;background:linear-gradient(90deg,#0076ff,#0074ff,#0072ff,#006fff,#006dff,#006bff,#0069ff,#0067ff,#0065ff,#0063ff,#0060ff,#005eff,#005cff,#005aff,#0057ff,#0055ff,#0053ff,#0051ff,#004eff,#004cff,#024aff,#0b47ff,#1445ff,#1d43ff,#2640ff,#2f3eff,#393bff,#4239ff,#4b37ff,#5534ff,#5e32ff,#672fff,#712dff,#7b2aff,#8428ff,#8e25ff,#9822ff,#a220ff,#ab1dff,#b51bff,#bf18ff,#ca15ff,#d413ff,#de10ff,#e80dff,#f30bff,#fd08ff,#ff05f7,#ff02ed,#ff00e4,#ff00dc,#ff00d4,#ff00cd,#ff00c6,#ff00c0,#ff00ba,#ff00b4,#ff00af,#ff00a9,#ff00a5,#ff00a0,#ff009b,#ff0097,#ff0093,#ff008f,#ff008c,#ff0088,#ff0085,#ff0082,#ff007f,#ff007c,#ff0079,#ff0076,#ff0073,#ff0071,#ff006e,#ff006c,#ff006a,#ff0068,#ff0066,#ff0063,#ff0061,#ff0060,#ff005e,#ff005c)"></i>
<i style="left:54px;top:222px;width:498px;background:linear-gradient(90deg,#0071ff,#006fff,#006dff,#006bff,#0068ff,#0066ff,#0064ff,#0062ff,#0060ff,#005eff,#005cff,#0059ff,#0057ff,#0055ff,#0053ff,#0050ff,#004eff,#004cff,#004aff,#0247ff,#0a45ff,#1343ff,#1c40ff,#253eff,#2e3cff,#3739ff,#4037ff,#4934ff,#5232ff,#5c30ff,#652dff,#6e2bff,#7828ff,#8126ff,#8b23ff,#9421ff,#9e1eff,#a81bff,#b219ff,#bc16ff,#c514ff,#cf11ff,#d90eff,#e40cff,#ee09ff,#f806ff,#ff04fc,#ff01f2,#ff00e9,#ff00e1,#ff00d9,#ff00d1,#ff00ca,#ff00c4,#ff00bd,#ff00b8,#ff00b2,#ff00ad,#ff00a8,#ff00a3,#ff009f,#ff009a,#ff0096,#ff0092,#ff008f,#ff008b,#ff0088,#ff0084,#ff0081,#ff007e,#ff007b,#ff0079,#ff0076,#ff0073,#ff0071,#ff006e,#ff006c,#ff006a,#ff0068,#ff0066,#ff0064,#ff0062,#ff0060,#ff005e)"></i>
<i style="left:54px;top:225px;width:492px;background:linear-gradient(90deg,#006eff,#006cff,#006aff,#0068ff,#0066ff,#0064ff,#0062ff,#005fff,#005dff,#005bff,#0059ff,#0057ff,#0055ff,#0052ff,#0050ff,#004eff,#004cff,#004aff,#0047ff,#0145ff,#0a43ff,#1240ff,#1b3eff,#243cff,#2d39ff,#3537ff,#3e35ff,#4732ff,#5030ff,#5a2eff,#632bff,#6c29ff,#7526ff,#7f24ff,#8821ff,#911fff,#9b1cff,#a41aff,#ae17ff,#b815ff,#c112ff,#cb0fff,#d50dff,#df0aff,#e908ff,#f305ff,#fd02ff,#ff00f7,#ff00ee,#ff00e5,#ff00dd,#ff00d5,#ff00ce,#ff00c8,#ff00c1,#ff00bb,#ff00b6,#ff00b0,#ff00ab,#ff00a6,#ff00a2,#ff009d,#ff0099,#ff0095,#ff0092,#ff008e,#ff008a,#ff0087,#ff0084,#ff0081,#ff007e,#ff007b,#ff0078,#ff0076,#ff0073,#ff0071,#ff006e,#ff006c,#ff006a,#ff0068,#ff0066,#ff0064,#ff0062)"></i>
<i style="left:54px;top:228px;width:492px;background:linear-gradient(90deg,#006bff,#0069ff,#0067ff,#0065ff,#0063ff,#0061ff,#005fff,#005dff,#005bff,#0059ff,#0056ff,#0054ff,#0052ff,#0050ff,#004eff,#004cff,#0049ff,#0047ff,#0045ff,#0043ff,#0941ff,#113eff,#1a3cff,#233aff,#2b37ff,#3435ff,#3d33ff,#4630ff,#4e2eff,#572cff,#6029ff,#6a27ff,#7324ff,#7c22ff,#851fff,#8e1dff,#981bff,#a118ff,#aa16ff,#b413ff,#be10ff,#c70eff,#d10bff,#db09ff,#e406ff,#ee04ff,#f801ff,#ff00fc,#ff00f2,#ff00ea,#ff00e1,#ff00da,#ff00d2,#ff00cc,#ff00c5,#ff00bf,#ff00b9,#ff00b4,#ff00af,#ff00aa,#ff00a5,#ff00a1,#ff009c,#ff0098,#ff0094,#ff0091,#ff008d,#ff008a,#ff0086,#ff0083,#ff0080,#ff007d,#ff007b,#ff0078,#ff0075,#ff0073,#ff0070,#ff006e,#ff006c,#ff006a,#ff0068,#ff0066,#ff0064)"></i>
<i style="left:54px;top:231px;width:486px;background:linear-gradient(90deg,#0069ff,#0067ff,#0065ff,#0063ff,#0061ff,#005fff,#005cff,#005aff,#0058ff,#0056ff,#0054ff,#0052ff,#0050ff,#004eff,#004cff,#0049ff,#0047ff,#0045ff,#0043ff,#0041ff,#083eff,#103cff,#193aff,#2138ff,#2a35ff,#3233ff,#3b31ff,#442eff,#4d2cff,#552aff,#5e27ff,#6725ff,#7023ff,#7920ff,#821eff,#8b1bff,#9519ff,#9e16ff,#a714ff,#b011ff,#ba0fff,#c30cff,#cd0aff,#d607ff,#e005ff,#ea02ff,#f300ff,#fd00ff,#ff00f7,#ff00ee,#ff00e6,#ff00de,#ff00d6,#ff00cf,#ff00c9,#ff00c3,#ff00bd,#ff00b7,#ff00b2,#ff00ad,#ff00a8,#ff00a4,#ff009f,#ff009b,#ff0097,#ff0093,#ff0090,#ff008c,#ff0089,#ff0086,#ff0083,#ff0080,#ff007d,#ff007a,#ff0078,#ff0075,#ff0073,#ff0070,#ff006e,#ff006c,#ff006a,#ff0068)"></i>
<i style="left:60px;top:234px;width:480px;background:linear-gradient(90deg,#0064ff,#0062ff,#0060ff,#005eff,#005cff,#005aff,#0058ff,#0056ff,#0054ff,#0052ff,#0050ff,#004eff,#004bff,#0049ff,#0047ff,#0045ff,#0043ff,#0041ff,#003eff,#073cff,#0f3aff,#1838ff,#2036ff,#2933ff,#3131ff,#3a2fff,#422dff,#4b2aff,#5328ff,#5c26ff,#6523ff,#6e21ff,#771fff,#801cff,#881aff,#9217ff,#9b15ff,#a412ff,#ad10ff,#b60eff,#bf0bff,#c909ff,#d206ff,#dc03ff,#e501ff,#ef00ff,#f800ff,#ff00fc,#ff00f3,#ff00ea,#ff00e2,#ff00db,#ff00d3,#ff00cd,#ff00c6,#ff00c0,#ff00bb,#ff00b5,#ff00b0,#ff00ab,#ff00a7,#ff00a2,#ff009e,#ff009a,#ff0096,#ff0093,#ff008f,#ff008c,#ff0088,#ff0085,#ff0082,#ff007f,#ff007d,#ff007a,#ff0077,#ff0075,#ff0073,#ff0070,#ff006e,#ff006c,#ff006a)"></i>
<i style="left:60px;top:237px;width:474px;background:linear-gradient(90deg,#0062ff,#0060ff,#005eff,#005cff,#005aff,#0058ff,#0056ff,#0054ff,#0052ff,#004fff,#004dff,#004bff,#0049ff,#0047ff,#0045ff,#0043ff,#0041ff,#003fff,#003cff,#063aff,#0f38ff,#1736ff,#1f34ff,#2731ff,#302fff,#382dff,#402bff,#4928ff,#5126ff,#5a24ff,#6322ff,#6b1fff,#741dff,#7d1bff,#8618ff,#8f16ff,#9813ff,#a111ff,#aa0fff,#b30cff,#bc0aff,#c507ff,#ce05ff,#d802ff,#e100ff,#ea00ff,#f400ff,#fd00ff,#ff00f7,#ff00ef,#ff00e6,#ff00df,#ff00d7,#ff00d1,#ff00ca,#ff00c4,#ff00be,#ff00b9,#ff00b4,#ff00af,#ff00aa,#ff00a5,#ff00a1,#ff009d,#ff0099,#ff0095,#ff0092,#ff008e,#ff008b,#ff0088,#ff0085,#ff0082,#ff007f,#ff007c,#ff007a,#ff0077,#ff0075,#ff0072,#ff0070,#ff006e)"></i>
<i style="left:60px;top:240px;width:474px;background:linear-gradient(90deg,#005fff,#005dff,#005bff,#0059ff,#0057ff,#0055ff,#0053ff,#0051ff,#004fff,#004dff,#004bff,#0049ff,#0047ff,#0045ff,#0043ff,#0041ff,#003fff,#003dff,#003aff,#0638ff,#0e36ff,#1634ff,#1e32ff,#2630ff,#2e2dff,#372bff,#3f29ff,#4727ff,#5024ff,#5822ff,#6120ff,#691eff,#721bff,#7a19ff,#8317ff,#8c14ff,#9512ff,#9d10ff,#a60dff,#af0bff,#b808ff,#c106ff,#ca03ff,#d401ff,#dd00ff,#e600ff,#ef00ff,#f900ff,#ff00fc,#ff00f3,#ff00eb,#ff00e3,#ff00db,#ff00d4,#ff00ce,#ff00c8,#ff00c2,#ff00bc,#ff00b7,#ff00b2,#ff00ad,#ff00a8,#ff00a4,#ff00a0,#ff009c,#ff0098,#ff0095,#ff0091,#ff008e,#ff008a,#ff0087,#ff0084,#ff0081,#ff007f,#ff007c,#ff0079,#ff0077,#ff0075,#ff0072,#ff0070)"></i>
<i style="left:66px;top:243px;width:468px;background:linear-gradient(90deg,#005bff,#0059ff,#0057ff,#0055ff,#0053ff,#0051ff,#004fff,#004dff,#004bff,#0049ff,#0047ff,#0045ff,#0043ff,#0041ff,#003fff,#003dff,#003bff,#0039ff,#0536ff,#0d34ff,#1532ff,#1d30ff,#252eff,#2d2cff,#3529ff,#3d27ff,#4625ff,#4e23ff,#5621ff,#5e1eff,#671cff,#6f1aff,#7817ff,#8015ff,#8913ff,#9210ff,#9a0eff,#a30cff,#ac09ff,#b507ff,#be05ff,#c702ff,#d000ff,#d900ff,#e200ff,#eb00ff,#f400ff,#fd00ff,#ff00f7,#ff00ef,#ff00e7,#ff00df,#ff00d8,#ff00d2,#ff00cb,#ff00c5,#ff00c0,#ff00ba,#ff00b5,#ff00b0,#ff00ac,#ff00a7,#ff00a3,#ff009f,#ff009b,#ff0097,#ff0094,#ff0090,#ff008d,#ff008a,#ff0087,#ff0084,#ff0081,#ff007e,#ff007c,#ff0079,#ff0077,#ff0074,#ff0072)"></i>
<i style="left:66px;top:246px;width:462px;background:linear-gradient(90deg,#0059ff,#0057ff,#0055ff,#0053ff,#0051ff,#004fff,#004dff,#004bff,#0049ff,#0047ff,#0045ff,#0043ff,#0041ff,#003fff,#003dff,#003bff,#0039ff,#0037ff,#0435ff,#0c32ff,#1430ff,#1c2eff,#242cff,#2c2aff,#3428ff,#3c26ff,#4423ff,#4c21ff,#541fff,#5c1dff,#651aff,#6d18ff,#7516ff,#7e14ff,#8611ff,#8f0fff,#970dff,#a00aff,#a908ff,#b106ff,#ba03ff,#c301ff,#cc00ff,#d500ff,#de00ff,#e700ff,#f000ff,#f900ff,#ff00fc,#ff00f3,#ff00eb,#ff00e3,#ff00dc,#ff00d5,#ff00cf,#ff00c9,#ff00c3,#ff00be,#ff00b8,#ff00b3,#ff00af,#ff00aa,#ff00a6,#ff00a2,#ff009e,#ff009a,#ff0096,#ff0093,#ff0090,#ff008c,#ff0089,#ff0086,#ff0083,#ff0081,#ff007e,#ff007b,#ff0079,#ff0076)"></i>
<i style="left:66px;top:249px;width:462px;background:linear-gradient(90deg,#0056ff,#0055ff,#0053ff,#0051ff,#004fff,#004dff,#004bff,#0049ff,#0047ff,#0045ff,#0043ff,#0041ff,#003fff,#003dff,#003bff,#0039ff,#0037ff,#0035ff,#0433ff,#0b31ff,#132fff,#1b2cff,#232aff,#2a28ff,#3226ff,#3a24ff,#4222ff,#4a20ff,#521dff,#5b1bff,#6319ff,#6b17ff,#7315ff,#7b12ff,#8410ff,#8c0eff,#950bff,#9d09ff,#a607ff,#ae05ff,#b702ff,#bf00ff,#c800ff,#d100ff,#da00ff,#e300ff,#ec00ff,#f400ff,#fd00ff,#ff00f8,#ff00ef,#ff00e8,#ff00e0,#ff00d9,#ff00d3,#ff00cc,#ff00c7,#ff00c1,#ff00bc,#ff00b7,#ff00b2,#ff00ad,#ff00a9,#ff00a5,#ff00a1,#ff009d,#ff0099,#ff0095,#ff0092,#ff008f,#ff008c,#ff0089,#ff0086,#ff0083,#ff0080,#ff007e,#ff007b,#ff0079)"></i>
<i style="left:66px;top:252px;width:456px;background:linear-gradient(90deg,#0054ff,#0052ff,#0051ff,#004fff,#004dff,#004bff,#0049ff,#0047ff,#0045ff,#0043ff,#0041ff,#003fff,#003dff,#003bff,#0039ff,#0037ff,#0035ff,#0033ff,#0331ff,#0b2fff,#122dff,#1a2bff,#2229ff,#2927ff,#3124ff,#3922ff,#4120ff,#491eff,#511cff,#591aff,#6118ff,#6915ff,#7113ff,#7911ff,#810fff,#8a0cff,#920aff,#9a08ff,#a306ff,#ab03ff,#b301ff,#bc00ff,#c500ff,#cd00ff,#d600ff,#df00ff,#e700ff,#f000ff,#f900ff,#ff00fc,#ff00f4,#ff00ec,#ff00e4,#ff00dd,#ff00d6,#ff00d0,#ff00ca,#ff00c4,#ff00bf,#ff00ba,#ff00b5,#ff00b0,#ff00ac,#ff00a7,#ff00a3,#ff009f,#ff009c,#ff0098,#ff0095,#ff0091,#ff008e,#ff008b,#ff0088,#ff0085,#ff0082,#ff0080,#ff007d)"></i>
<i style="left:72px;top:255px;width:450px;background:linear-gradient(90deg,#0050ff,#004eff,#004dff,#004bff,#0049ff,#0047ff,#0045ff,#0043ff,#0041ff,#003fff,#003dff,#003bff,#0039ff,#0037ff,#0035ff,#0033ff,#0031ff,#022fff,#0a2dff,#112bff,#1929ff,#2027ff,#2825ff,#3023ff,#3721ff,#3f1fff,#471dff,#4f1aff,#5718ff,#5f16ff,#6714ff,#6f12ff,#7710ff,#7f0dff,#870bff,#8f09ff,#9707ff,#a004ff,#a802ff,#b000ff,#b900ff,#c100ff,#ca00ff,#d200ff,#db00ff,#e300ff,#ec00ff,#f500ff,#fe00ff,#ff00f8,#ff00f0,#ff00e8,#ff00e1,#ff00da,#ff00d4,#ff00ce,#ff00c8,#ff00c2,#ff00bd,#ff00b8,#ff00b3,#ff00af,#ff00aa,#ff00a6,#ff00a2,#ff009e,#ff009b,#ff0097,#ff0094,#ff0091,#ff008d,#ff008a,#ff0088,#ff0085,#ff0082,#ff007f)"></i>
<i style="left:72px;top:258px;width:444px;background:linear-gradient(90deg,#004eff,#004cff,#004bff,#0049ff,#0047ff,#0045ff,#0043ff,#0041ff,#003fff,#003dff,#003bff,#0039ff,#0038ff,#0036ff,#0034ff,#0032ff,#0030ff,#022eff,#092cff,#102aff,#1828ff,#1f25ff,#2723ff,#2f21ff,#361fff,#3e1dff,#451bff,#4d19ff,#5517ff,#5d15ff,#6513ff,#6d10ff,#740eff,#7c0cff,#840aff,#8d08ff,#9506ff,#9d03ff,#a501ff,#ad00ff,#b500ff,#be00ff,#c600ff,#cf00ff,#d700ff,#df00ff,#e800ff,#f100ff,#f900ff,#ff00fc,#ff00f4,#ff00ec,#ff00e5,#ff00de,#ff00d7,#ff00d1,#ff00cb,#ff00c6,#ff00c0,#ff00bb,#ff00b6,#ff00b2,#ff00ad,#ff00a9,#ff00a5,#ff00a1,#ff009d,#ff009a,#ff0096,#ff0093,#ff0090,#ff008d,#ff008a,#ff0087,#ff0084)"></i>
<i style="left:72px;top:261px;width:444px;background:linear-gradient(90deg,#004cff,#004bff,#0049ff,#0047ff,#0045ff,#0043ff,#0041ff,#003fff,#003dff,#003cff,#003aff,#0038ff,#0036ff,#0034ff,#0032ff,#0030ff,#002eff,#012cff,#082aff,#1028ff,#1726ff,#1e24ff,#2622ff,#2d20ff,#351eff,#3c1cff,#441aff,#4c18ff,#5316ff,#5b13ff,#6311ff,#6a0fff,#720dff,#7a0bff,#8209ff,#8a07ff,#9204ff,#9a02ff,#a200ff,#aa00ff,#b200ff,#ba00ff,#c300ff,#cb00ff,#d300ff,#dc00ff,#e400ff,#ed00ff,#f500ff,#fe00ff,#ff00f8,#ff00f0,#ff00e9,#ff00e2,#ff00db,#ff00d5,#ff00cf,#ff00c9,#ff00c3,#ff00be,#ff00b9,#ff00b5,#ff00b0,#ff00ac,#ff00a8,#ff00a4,#ff00a0,#ff009c,#ff0099,#ff0096,#ff0092,#ff008f,#ff008c,#ff0089,#ff0087)"></i>
<i style="left:78px;top:264px;width:432px;background:linear-gradient(90deg,#0049ff,#0047ff,#0045ff,#0043ff,#0041ff,#003fff,#003eff,#003cff,#003aff,#0038ff,#0036ff,#0034ff,#0032ff,#0030ff,#002eff,#002cff,#002aff,#0828ff,#0f26ff,#1624ff,#1d22ff,#2520ff,#2c1eff,#341cff,#3b1aff,#4218ff,#4a16ff,#5214ff,#5912ff,#6110ff,#680eff,#700cff,#780aff,#8008ff,#8705ff,#8f03ff,#9701ff,#9f00ff,#a700ff,#af00ff,#b700ff,#bf00ff,#c800ff,#d000ff,#d800ff,#e000ff,#e900ff,#f100ff,#f900ff,#ff00fc,#ff00f4,#ff00ec,#ff00e5,#ff00df,#ff00d8,#ff00d2,#ff00cc,#ff00c7,#ff00c1,#ff00bc,#ff00b8,#ff00b3,#ff00af,#ff00ab,#ff00a7,#ff00a3,#ff009f,#ff009b,#ff0098,#ff0095,#ff0092,#ff008f,#ff008c)"></i>
<i style="left:78px;top:267px;width:432px;background:linear-gradient(90deg,#0047ff,#0045ff,#0043ff,#0041ff,#0040ff,#003eff,#003cff,#003aff,#0038ff,#0036ff,#0034ff,#0032ff,#0031ff,#002fff,#002dff,#002bff,#0029ff,#0727ff,#0e25ff,#1523ff,#1c21ff,#241fff,#2b1dff,#321bff,#3a19ff,#4117ff,#4815ff,#5013ff,#5711ff,#5f0fff,#660dff,#6e0bff,#7609ff,#7d06ff,#8504ff,#8d02ff,#9500ff,#9c00ff,#a400ff,#ac00ff,#b400ff,#bc00ff,#c400ff,#cc00ff,#d400ff,#dd00ff,#e500ff,#ed00ff,#f500ff,#fe00ff,#ff00f8,#ff00f0,#ff00e9,#ff00e2,#ff00dc,#ff00d5,#ff00d0,#ff00ca,#ff00c5,#ff00c0,#ff00bb,#ff00b6,#ff00b2,#ff00ad,#ff00a9,#ff00a5,#ff00a2,#ff009e,#ff009b,#ff0097,#ff0094,#ff0091,#ff008e)"></i>
<i style="left:78px;top:270px;width:426px;background:linear-gradient(90deg,#0045ff,#0043ff,#0041ff,#0040ff,#003eff,#003cff,#003aff,#0038ff,#0036ff,#0035ff,#0033ff,#0031ff,#002fff,#002dff,#002bff,#0029ff,#0027ff,#0625ff,#0d24ff,#1422ff,#1c20ff,#231eff,#2a1cff,#311aff,#3818ff,#4016ff,#4714ff,#4e12ff,#5610ff,#5d0eff,#650cff,#6c09ff,#7407ff,#7b05ff,#8303ff,#8a01ff,#9200ff,#9a00ff,#a200ff,#a900ff,#b100ff,#b900ff,#c100ff,#c900ff,#d100ff,#d900ff,#e100ff,#e900ff,#f100ff,#fa00ff,#ff00fc,#ff00f4,#ff00ed,#ff00e6,#ff00df,#ff00d9,#ff00d3,#ff00cd,#ff00c8,#ff00c3,#ff00be,#ff00b9,#ff00b4,#ff00b0,#ff00ac,#ff00a8,#ff00a4,#ff00a1,#ff009d,#ff009a,#ff0096,#ff0093)"></i>
<i style="left:78px;top:273px;width:426px;background:linear-gradient(90deg,#0043ff,#0041ff,#0040ff,#003eff,#003cff,#003aff,#0038ff,#0037ff,#0035ff,#0033ff,#0031ff,#002fff,#002dff,#002cff,#002aff,#0028ff,#0026ff,#0624ff,#0d22ff,#1420ff,#1b1eff,#221cff,#291aff,#3018ff,#3716ff,#3e14ff,#4512ff,#4d10ff,#540eff,#5b0cff,#630aff,#6a08ff,#7106ff,#7904ff,#8002ff,#8800ff,#9000ff,#9700ff,#9f00ff,#a700ff,#ae00ff,#b600ff,#be00ff,#c600ff,#ce00ff,#d600ff,#dd00ff,#e500ff,#ee00ff,#f600ff,#fe00ff,#ff00f8,#ff00f1,#ff00ea,#ff00e3,#ff00dc,#ff00d6,#ff00d1,#ff00cb,#ff00c6,#ff00c1,#ff00bc,#ff00b7,#ff00b3,#ff00af,#ff00ab,#ff00a7,#ff00a3,#ff00a0,#ff009c,#ff0099,#ff0096)"></i>
<i style="left:84px;top:276px;width:414px;background:linear-gradient(90deg,#0040ff,#003eff,#003cff,#003aff,#0039ff,#0037ff,#0035ff,#0033ff,#0031ff,#0030ff,#002eff,#002cff,#002aff,#0028ff,#0026ff,#0024ff,#0523ff,#0c21ff,#131fff,#1a1dff,#211bff,#2819ff,#2f17ff,#3615ff,#3d13ff,#4411ff,#4b0fff,#520dff,#5a0bff,#6109ff,#6807ff,#6f05ff,#7703ff,#7e01ff,#8600ff,#8d00ff,#9500ff,#9c00ff,#a400ff,#ab00ff,#b300ff,#bb00ff,#c300ff,#ca00ff,#d200ff,#da00ff,#e200ff,#ea00ff,#f200ff,#fa00ff,#ff00fc,#ff00f5,#ff00ed,#ff00e6,#ff00e0,#ff00da,#ff00d4,#ff00ce,#ff00c9,#ff00c4,#ff00bf,#ff00ba,#ff00b6,#ff00b1,#ff00ad,#ff00a9,#ff00a6,#ff00a2,#ff009f,#ff009b)"></i>
<i style="left:84px;top:279px;width:414px;background:linear-gradient(90deg,#003eff,#003cff,#003bff,#0039ff,#0037ff,#0035ff,#0034ff,#0032ff,#0030ff,#002eff,#002cff,#002aff,#0029ff,#0027ff,#0025ff,#0023ff,#0421ff,#0b1fff,#121dff,#191cff,#201aff,#2718ff,#2e16ff,#3514ff,#3c12ff,#4310ff,#4a0eff,#510cff,#580aff,#5f08ff,#6606ff,#6d04ff,#7502ff,#7c00ff,#8300ff,#8b00ff,#9200ff,#9a00ff,#a100ff,#a900ff,#b000ff,#b800ff,#bf00ff,#c700ff,#cf00ff,#d700ff,#de00ff,#e600ff,#ee00ff,#f600ff,#fe00ff,#ff00f8,#ff00f1,#ff00ea,#ff00e3,#ff00dd,#ff00d7,#ff00d1,#ff00cc,#ff00c7,#ff00c2,#ff00bd,#ff00b9,#ff00b4,#ff00b0,#ff00ac,#ff00a8,#ff00a5,#ff00a1,#ff009e)"></i>
<i style="left:84px;top:282px;width:408px;background:linear-gradient(90deg,#003cff,#003bff,#0039ff,#0037ff,#0036ff,#0034ff,#0032ff,#0030ff,#002eff,#002dff,#002bff,#0029ff,#0027ff,#0025ff,#0024ff,#0022ff,#0420ff,#0b1eff,#111cff,#181aff,#1f18ff,#2617ff,#2c15ff,#3313ff,#3a11ff,#410fff,#480dff,#4f0bff,#5609ff,#5d07ff,#6405ff,#6c03ff,#7301ff,#7a00ff,#8100ff,#8800ff,#9000ff,#9700ff,#9f00ff,#a600ff,#ad00ff,#b500ff,#bc00ff,#c400ff,#cc00ff,#d300ff,#db00ff,#e300ff,#ea00ff,#f200ff,#fa00ff,#ff00fc,#ff00f5,#ff00ee,#ff00e7,#ff00e1,#ff00da,#ff00d5,#ff00cf,#ff00ca,#ff00c5,#ff00c0,#ff00bb,#ff00b7,#ff00b3,#ff00af,#ff00ab,#ff00a7,#ff00a4)"></i>
<i style="left:90px;top:285px;width:402px;background:linear-gradient(90deg,#0039ff,#0037ff,#0036ff,#0034ff,#0032ff,#0031ff,#002fff,#002dff,#002bff,#0029ff,#0028ff,#0026ff,#0024ff,#0022ff,#0020ff,#031fff,#0a1dff,#111bff,#1719ff,#1e17ff,#2515ff,#2b13ff,#3212ff,#3910ff,#400eff,#470cff,#4e0aff,#5508ff,#5c06ff,#6304ff,#6a02ff,#7100ff,#7800ff,#7f00ff,#8600ff,#8d00ff,#9500ff,#9c00ff,#a300ff,#ab00ff,#b200ff,#b900ff,#c100ff,#c800ff,#d000ff,#d700ff,#df00ff,#e700ff,#ee00ff,#f600ff,#fe00ff,#ff00f9,#ff00f1,#ff00ea,#ff00e4,#ff00de,#ff00d8,#ff00d2,#ff00cd,#ff00c8,#ff00c3,#ff00be,#ff00ba,#ff00b6,#ff00b1,#ff00ad,#ff00aa,#ff00a6)"></i>
<i style="left:90px;top:288px;width:396px;background:linear-gradient(90deg,#0038ff,#0036ff,#0034ff,#0033ff,#0031ff,#002fff,#002dff,#002cff,#002aff,#0028ff,#0026ff,#0025ff,#0023ff,#0021ff,#001fff,#031dff,#091cff,#101aff,#1618ff,#1d16ff,#2414ff,#2a12ff,#3110ff,#380fff,#3f0dff,#450bff,#4c09ff,#5307ff,#5a05ff,#6103ff,#6801ff,#6f00ff,#7600ff,#7d00ff,#8400ff,#8b00ff,#9200ff,#9900ff,#a100ff,#a800ff,#af00ff,#b700ff,#be00ff,#c500ff,#cd00ff,#d400ff,#dc00ff,#e300ff,#eb00ff,#f200ff,#fa00ff,#ff00fc,#ff00f5,#ff00ee,#ff00e7,#ff00e1,#ff00db,#ff00d5,#ff00d0,#ff00cb,#ff00c6,#ff00c1,#ff00bd,#ff00b8,#ff00b4,#ff00b0,#ff00ac)"></i>
<i style="left:90px;top:291px;width:396px;background:linear-gradient(90deg,#0036ff,#0034ff,#0033ff,#0031ff,#002fff,#002eff,#002cff,#002aff,#0028ff,#0027ff,#0025ff,#0023ff,#0021ff,#0020ff,#001eff,#021cff,#091aff,#0f18ff,#1617ff,#1c15ff,#2313ff,#2911ff,#300fff,#370dff,#3d0cff,#440aff,#4b08ff,#5206ff,#5804ff,#5f02ff,#6600ff,#6d00ff,#7400ff,#7b00ff,#8200ff,#8900ff,#9000ff,#9700ff,#9e00ff,#a500ff,#ad00ff,#b400ff,#bb00ff,#c200ff,#ca00ff,#d100ff,#d800ff,#e000ff,#e700ff,#ef00ff,#f600ff,#fe00ff,#ff00f9,#ff00f2,#ff00eb,#ff00e4,#ff00de,#ff00d9,#ff00d3,#ff00ce,#ff00c9,#ff00c4,#ff00bf,#ff00bb,#ff00b7,#ff00b3,#ff00af)"></i>
<i style="left:90px;top:294px;width:390px;background:linear-gradient(90deg,#0035ff,#0033ff,#0031ff,#0030ff,#002eff,#002cff,#002bff,#0029ff,#0027ff,#0025ff,#0024ff,#0022ff,#0020ff,#001eff,#001dff,#021bff,#0819ff,#0e17ff,#1516ff,#1b14ff,#2212ff,#2810ff,#2f0eff,#350cff,#3c0bff,#4309ff,#4907ff,#5005ff,#5703ff,#5e01ff,#6400ff,#6b00ff,#7200ff,#7900ff,#8000ff,#8700ff,#8e00ff,#9500ff,#9c00ff,#a300ff,#aa00ff,#b100ff,#b800ff,#bf00ff,#c700ff,#ce00ff,#d500ff,#dd00ff,#e400ff,#eb00ff,#f300ff,#fa00ff,#ff00fc,#ff00f5,#ff00ee,#ff00e8,#ff00e2,#ff00dc,#ff00d6,#ff00d1,#ff00cc,#ff00c7,#ff00c2,#ff00be,#ff00b9,#ff00b5)"></i>
<i style="left:96px;top:297px;width:384px;background:linear-gradient(90deg,#0032ff,#0030ff,#002eff,#002dff,#002bff,#0029ff,#0028ff,#0026ff,#0024ff,#0022ff,#0021ff,#001fff,#001dff,#001bff,#011aff,#0718ff,#0e16ff,#1414ff,#1b13ff,#2111ff,#270fff,#2e0dff,#340bff,#3b0aff,#4108ff,#4806ff,#4f04ff,#5502ff,#5c00ff,#6300ff,#6900ff,#7000ff,#7700ff,#7e00ff,#8500ff,#8b00ff,#9200ff,#9900ff,#a000ff,#a700ff,#ae00ff,#b500ff,#bd00ff,#c400ff,#cb00ff,#d200ff,#d900ff,#e100ff,#e800ff,#ef00ff,#f700ff,#fe00ff,#ff00f9,#ff00f2,#ff00eb,#ff00e5,#ff00df,#ff00d9,#ff00d4,#ff00cf,#ff00ca,#ff00c5,#ff00c1,#ff00bc,#ff00b8)"></i>
<i style="left:96px;top:300px;width:384px;background:linear-gradient(90deg,#0030ff,#002fff,#002dff,#002bff,#002aff,#0028ff,#0026ff,#0025ff,#0023ff,#0021ff,#001fff,#001eff,#001cff,#001aff,#0119ff,#0717ff,#0d15ff,#1313ff,#1a11ff,#2010ff,#260eff,#2d0cff,#330aff,#3a09ff,#4007ff,#4705ff,#4d03ff,#5401ff,#5a00ff,#6100ff,#6800ff,#6e00ff,#7500ff,#7c00ff,#8300ff,#8900ff,#9000ff,#9700ff,#9e00ff,#a500ff,#ac00ff,#b300ff,#ba00ff,#c100ff,#c800ff,#cf00ff,#d600ff,#dd00ff,#e500ff,#ec00ff,#f300ff,#fa00ff,#ff00fc,#ff00f5,#ff00ef,#ff00e8,#ff00e2,#ff00dd,#ff00d7,#ff00d2,#ff00cd,#ff00c8,#ff00c3,#ff00bf,#ff00bb)"></i>
<i style="left:96px;top:303px;width:378px;background:linear-gradient(90deg,#002fff,#002dff,#002cff,#002aff,#0028ff,#0027ff,#0025ff,#0023ff,#0022ff,#0020ff,#001eff,#001dff,#001bff,#0019ff,#0017ff,#0616ff,#0c14ff,#1312ff,#1910ff,#1f0fff,#250dff,#2c0bff,#3209ff,#3908ff,#3f06ff,#4504ff,#4c02ff,#5200ff,#5900ff,#5f00ff,#6600ff,#6d00ff,#7300ff,#7a00ff,#8000ff,#8700ff,#8e00ff,#9500ff,#9c00ff,#a200ff,#a900ff,#b000ff,#b700ff,#be00ff,#c500ff,#cc00ff,#d300ff,#da00ff,#e100ff,#e800ff,#f000ff,#f700ff,#fe00ff,#ff00f9,#ff00f2,#ff00ec,#ff00e5,#ff00e0,#ff00da,#ff00d5,#ff00d0,#ff00cb,#ff00c6,#ff00c2)"></i>
<i style="left:102px;top:306px;width:372px;background:linear-gradient(90deg,#002cff,#002aff,#0029ff,#0027ff,#0025ff,#0024ff,#0022ff,#0020ff,#001fff,#001dff,#001bff,#001aff,#0018ff,#0016ff,#0615ff,#0c13ff,#1211ff,#180fff,#1e0eff,#250cff,#2b0aff,#3108ff,#3707ff,#3e05ff,#4403ff,#4a01ff,#5100ff,#5700ff,#5e00ff,#6400ff,#6b00ff,#7100ff,#7800ff,#7f00ff,#8500ff,#8c00ff,#9200ff,#9900ff,#a000ff,#a700ff,#ae00ff,#b400ff,#bb00ff,#c200ff,#c900ff,#d000ff,#d700ff,#de00ff,#e500ff,#ec00ff,#f300ff,#fa00ff,#ff00fc,#ff00f6,#ff00ef,#ff00e9,#ff00e3,#ff00dd,#ff00d8,#ff00d3,#ff00ce,#ff00c9,#ff00c4)"></i>
<i style="left:102px;top:309px;width:366px;background:linear-gradient(90deg,#002bff,#0029ff,#0027ff,#0026ff,#0024ff,#0023ff,#0021ff,#001fff,#001eff,#001cff,#001aff,#0019ff,#0017ff,#0015ff,#0513ff,#0b12ff,#1110ff,#170eff,#1e0dff,#240bff,#2a09ff,#3007ff,#3606ff,#3d04ff,#4302ff,#4900ff,#4f00ff,#5600ff,#5c00ff,#6300ff,#6900ff,#7000ff,#7600ff,#7d00ff,#8300ff,#8a00ff,#9000ff,#9700ff,#9e00ff,#a400ff,#ab00ff,#b200ff,#b900ff,#bf00ff,#c600ff,#cd00ff,#d400ff,#db00ff,#e200ff,#e900ff,#f000ff,#f700ff,#fe00ff,#ff00f9,#ff00f2,#ff00ec,#ff00e6,#ff00e0,#ff00db,#ff00d5,#ff00d0,#ff00cc)"></i>
<i style="left:102px;top:312px;width:366px;background:linear-gradient(90deg,#0029ff,#0028ff,#0026ff,#0025ff,#0023ff,#0021ff,#0020ff,#001eff,#001cff,#001bff,#0019ff,#0017ff,#0016ff,#0014ff,#0512ff,#0b11ff,#110fff,#170dff,#1d0cff,#230aff,#2908ff,#2f07ff,#3505ff,#3b03ff,#4201ff,#4800ff,#4e00ff,#5400ff,#5b00ff,#6100ff,#6700ff,#6e00ff,#7400ff,#7b00ff,#8100ff,#8800ff,#8e00ff,#9500ff,#9b00ff,#a200ff,#a900ff,#af00ff,#b600ff,#bd00ff,#c300ff,#ca00ff,#d100ff,#d800ff,#df00ff,#e600ff,#ed00ff,#f400ff,#fb00ff,#ff00fc,#ff00f6,#ff00ef,#ff00e9,#ff00e3,#ff00de,#ff00d8,#ff00d3,#ff00ce)"></i>
<i style="left:108px;top:315px;width:354px;background:linear-gradient(90deg,#0027ff,#0025ff,#0023ff,#0022ff,#0020ff,#001fff,#001dff,#001bff,#001aff,#0018ff,#0016ff,#0015ff,#0013ff,#0411ff,#0a10ff,#100eff,#160cff,#1c0bff,#2209ff,#2807ff,#2e06ff,#3404ff,#3a02ff,#4000ff,#4700ff,#4d00ff,#5300ff,#5900ff,#5f00ff,#6600ff,#6c00ff,#7200ff,#7900ff,#7f00ff,#8600ff,#8c00ff,#9300ff,#9900ff,#a000ff,#a600ff,#ad00ff,#b300ff,#ba00ff,#c100ff,#c700ff,#ce00ff,#d500ff,#dc00ff,#e300ff,#e900ff,#f000ff,#f700ff,#fe00ff,#ff00f9,#ff00f3,#ff00ec,#ff00e6,#ff00e1,#ff00db,#ff00d6)"></i>
<i style="left:108px;top:318px;width:354px;background:linear-gradient(90deg,#0025ff,#0024ff,#0022ff,#0021ff,#001fff,#001dff,#001cff,#001aff,#0019ff,#0017ff,#0015ff,#0014ff,#0012ff,#0410ff,#090fff,#0f0dff,#150bff,#1b0aff,#2108ff,#2706ff,#2d05ff,#3303ff,#3901ff,#3f00ff,#4500ff,#4b00ff,#5200ff,#5800ff,#5e00ff,#6400ff,#6a00ff,#7100ff,#7700ff,#7d00ff,#8400ff,#8a00ff,#9000ff,#9700ff,#9d00ff,#a400ff,#aa00ff,#b100ff,#b700ff,#be00ff,#c500ff,#cb00ff,#d200ff,#d900ff,#df00ff,#e600ff,#ed00ff,#f400ff,#fb00ff,#ff00fc,#ff00f6,#ff00f0,#ff00ea,#ff00e4,#ff00de,#ff00d9)"></i>
<i style="left:108px;top:321px;width:348px;background:linear-gradient(90deg,#0024ff,#0023ff,#0021ff,#001fff,#001eff,#001cff,#001bff,#0019ff,#0018ff,#0016ff,#0014ff,#0013ff,#0011ff,#030fff,#090eff,#0f0cff,#150bff,#1a09ff,#2007ff,#2606ff,#2c04ff,#3202ff,#3800ff,#3e00ff,#4400ff,#4a00ff,#5000ff,#5600ff,#5c00ff,#6300ff,#6900ff,#6f00ff,#7500ff,#7b00ff,#8200ff,#8800ff,#8e00ff,#9500ff,#9b00ff,#a200ff,#a800ff,#ae00ff,#b500ff,#bb00ff,#c200ff,#c900ff,#cf00ff,#d600ff,#dc00ff,#e300ff,#ea00ff,#f100ff,#f700ff,#fe00ff,#ff00f9,#ff00f3,#ff00ed,#ff00e7,#ff00e1)"></i>
<i style="left:114px;top:324px;width:342px;background:linear-gradient(90deg,#0021ff,#0020ff,#001eff,#001dff,#001bff,#001aff,#0018ff,#0017ff,#0015ff,#0013ff,#0012ff,#0010ff,#030eff,#080dff,#0e0bff,#140aff,#1a08ff,#2006ff,#2505ff,#2b03ff,#3101ff,#3700ff,#3d00ff,#4300ff,#4900ff,#4f00ff,#5500ff,#5b00ff,#6100ff,#6700ff,#6d00ff,#7300ff,#7a00ff,#8000ff,#8600ff,#8c00ff,#9300ff,#9900ff,#9f00ff,#a600ff,#ac00ff,#b200ff,#b900ff,#bf00ff,#c600ff,#cc00ff,#d300ff,#da00ff,#e000ff,#e700ff,#ed00ff,#f400ff,#fb00ff,#ff00fc,#ff00f6,#ff00f0,#ff00ea,#ff00e4)"></i>
<i style="left:114px;top:327px;width:336px;background:linear-gradient(90deg,#0020ff,#001fff,#001dff,#001cff,#001aff,#0019ff,#0017ff,#0015ff,#0014ff,#0012ff,#0011ff,#000fff,#020eff,#080cff,#0e0aff,#1309ff,#1907ff,#1f05ff,#2504ff,#2a02ff,#3000ff,#3600ff,#3c00ff,#4200ff,#4800ff,#4e00ff,#5400ff,#5a00ff,#6000ff,#6600ff,#6c00ff,#7200ff,#7800ff,#7e00ff,#8400ff,#8a00ff,#9100ff,#9700ff,#9d00ff,#a300ff,#aa00ff,#b000ff,#b600ff,#bd00ff,#c300ff,#ca00ff,#d000ff,#d700ff,#dd00ff,#e400ff,#ea00ff,#f100ff,#f800ff,#fe00ff,#ff00f9,#ff00f3,#ff00ed)"></i>
<i style="left:114px;top:330px;width:336px;background:linear-gradient(90deg,#001fff,#001eff,#001cff,#001bff,#0019ff,#0018ff,#0016ff,#0015ff,#0013ff,#0011ff,#0010ff,#000eff,#020dff,#070bff,#0d09ff,#1308ff,#1806ff,#1e05ff,#2403ff,#2901ff,#2f00ff,#3500ff,#3b00ff,#4100ff,#4600ff,#4c00ff,#5200ff,#5800ff,#5e00ff,#6400ff,#6a00ff,#7000ff,#7600ff,#7c00ff,#8200ff,#8800ff,#8f00ff,#9500ff,#9b00ff,#a100ff,#a700ff,#ae00ff,#b400ff,#ba00ff,#c100ff,#c700ff,#cd00ff,#d400ff,#da00ff,#e100ff,#e700ff,#ee00ff,#f400ff,#fb00ff,#ff00fc,#ff00f6,#ff00f0)"></i>
<i style="left:114px;top:333px;width:330px;background:linear-gradient(90deg,#001eff,#001dff,#001bff,#001aff,#0018ff,#0017ff,#0015ff,#0014ff,#0012ff,#0010ff,#000fff,#000dff,#010cff,#070aff,#0c09ff,#1207ff,#1805ff,#1d04ff,#2302ff,#2901ff,#2e00ff,#3400ff,#3a00ff,#4000ff,#4500ff,#4b00ff,#5100ff,#5700ff,#5d00ff,#6300ff,#6900ff,#6f00ff,#7400ff,#7a00ff,#8100ff,#8700ff,#8d00ff,#9300ff,#9900ff,#9f00ff,#a500ff,#ab00ff,#b200ff,#b800ff,#be00ff,#c400ff,#cb00ff,#d100ff,#d700ff,#de00ff,#e400ff,#eb00ff,#f100ff,#f800ff,#fe00ff,#ff00f9)"></i>
<i style="left:120px;top:336px;width:324px;background:linear-gradient(90deg,#001cff,#001aff,#0019ff,#0017ff,#0016ff,#0014ff,#0013ff,#0011ff,#000fff,#000eff,#000cff,#010bff,#0609ff,#0c08ff,#1106ff,#1705ff,#1c03ff,#2201ff,#2800ff,#2d00ff,#3300ff,#3900ff,#3e00ff,#4400ff,#4a00ff,#5000ff,#5500ff,#5b00ff,#6100ff,#6700ff,#6d00ff,#7300ff,#7900ff,#7f00ff,#8500ff,#8b00ff,#9100ff,#9700ff,#9d00ff,#a300ff,#a900ff,#af00ff,#b500ff,#bc00ff,#c200ff,#c800ff,#ce00ff,#d500ff,#db00ff,#e100ff,#e800ff,#ee00ff,#f500ff,#fb00ff,#ff00fd)"></i>
<i style="left:120px;top:339px;width:318px;background:linear-gradient(90deg,#001bff,#0019ff,#0018ff,#0016ff,#0015ff,#0013ff,#0012ff,#0010ff,#000fff,#000dff,#000cff,#000aff,#0608ff,#0b07ff,#1105ff,#1604ff,#1c02ff,#2101ff,#2700ff,#2c00ff,#3200ff,#3800ff,#3d00ff,#4300ff,#4900ff,#4e00ff,#5400ff,#5a00ff,#6000ff,#6600ff,#6b00ff,#7100ff,#7700ff,#7d00ff,#8300ff,#8900ff,#8f00ff,#9500ff,#9b00ff,#a100ff,#a700ff,#ad00ff,#b300ff,#b900ff,#bf00ff,#c600ff,#cc00ff,#d200ff,#d800ff,#df00ff,#e500ff,#eb00ff,#f100ff,#f800ff)"></i>
<i style="left:126px;top:342px;width:312px;background:linear-gradient(90deg,#0018ff,#0017ff,#0015ff,#0014ff,#0012ff,#0011ff,#000fff,#000eff,#000cff,#000bff,#0009ff,#0508ff,#0b06ff,#1004ff,#1603ff,#1b01ff,#2100ff,#2600ff,#2c00ff,#3100ff,#3700ff,#3c00ff,#4200ff,#4800ff,#4d00ff,#5300ff,#5900ff,#5e00ff,#6400ff,#6a00ff,#7000ff,#7500ff,#7b00ff,#8100ff,#8700ff,#8d00ff,#9300ff,#9900ff,#9f00ff,#a500ff,#ab00ff,#b100ff,#b700ff,#bd00ff,#c300ff,#c900ff,#cf00ff,#d600ff,#dc00ff,#e200ff,#e800ff,#ee00ff,#f500ff)"></i>
<i style="left:126px;top:345px;width:306px;background:linear-gradient(90deg,#0017ff,#0016ff,#0014ff,#0013ff,#0011ff,#0010ff,#000eff,#000dff,#000bff,#000aff,#0008ff,#0507ff,#0a05ff,#1004ff,#1502ff,#1a01ff,#2000ff,#2500ff,#2b00ff,#3000ff,#3600ff,#3b00ff,#4100ff,#4600ff,#4c00ff,#5200ff,#5700ff,#5d00ff,#6300ff,#6800ff,#6e00ff,#7400ff,#7a00ff,#7f00ff,#8500ff,#8b00ff,#9100ff,#9700ff,#9d00ff,#a300ff,#a900ff,#af00ff,#b500ff,#bb00ff,#c100ff,#c700ff,#cd00ff,#d300ff,#d900ff,#df00ff,#e500ff,#ec00ff)"></i>
<i style="left:126px;top:348px;width:306px;background:linear-gradient(90deg,#0016ff,#0015ff,#0013ff,#0012ff,#0010ff,#000fff,#000dff,#000cff,#000aff,#0009ff,#0007ff,#0406ff,#0a04ff,#0f03ff,#1401ff,#1a00ff,#1f00ff,#2400ff,#2a00ff,#2f00ff,#3500ff,#3a00ff,#4000ff,#4500ff,#4b00ff,#5000ff,#5600ff,#5c00ff,#6100ff,#6700ff,#6d00ff,#7200ff,#7800ff,#7e00ff,#8300ff,#8900ff,#8f00ff,#9500ff,#9b00ff,#a100ff,#a600ff,#ac00ff,#b200ff,#b800ff,#be00ff,#c400ff,#ca00ff,#d000ff,#d600ff,#dc00ff,#e300ff,#e900ff)"></i>
<i style="left:132px;top:351px;width:294px;background:linear-gradient(90deg,#0014ff,#0012ff,#0011ff,#0010ff,#000eff,#000dff,#000bff,#000aff,#0008ff,#0007ff,#0405ff,#0904ff,#0e02ff,#1401ff,#1900ff,#1e00ff,#2400ff,#2900ff,#2e00ff,#3400ff,#3900ff,#3f00ff,#4400ff,#4a00ff,#4f00ff,#5500ff,#5a00ff,#6000ff,#6500ff,#6b00ff,#7100ff,#7600ff,#7c00ff,#8200ff,#8700ff,#8d00ff,#9300ff,#9900ff,#9e00ff,#a400ff,#aa00ff,#b000ff,#b600ff,#bc00ff,#c200ff,#c800ff,#ce00ff,#d400ff,#da00ff,#e000ff)"></i>
<i style="left:132px;top:354px;width:294px;background:linear-gradient(90deg,#0013ff,#0012ff,#0010ff,#000fff,#000dff,#000cff,#000aff,#0009ff,#0007ff,#0006ff,#0304ff,#0903ff,#0e01ff,#1300ff,#1800ff,#1e00ff,#2300ff,#2800ff,#2e00ff,#3300ff,#3800ff,#3e00ff,#4300ff,#4900ff,#4e00ff,#5300ff,#5900ff,#5e00ff,#6400ff,#6a00ff,#6f00ff,#7500ff,#7a00ff,#8000ff,#8600ff,#8b00ff,#9100ff,#9700ff,#9c00ff,#a200ff,#a800ff,#ae00ff,#b400ff,#b900ff,#bf00ff,#c500ff,#cb00ff,#d100ff,#d700ff,#dd00ff)"></i>
<i style="left:132px;top:357px;width:288px;background:linear-gradient(90deg,#0012ff,#0011ff,#000fff,#000eff,#000cff,#000bff,#0009ff,#0008ff,#0007ff,#0005ff,#0304ff,#0802ff,#0d01ff,#1200ff,#1800ff,#1d00ff,#2200ff,#2700ff,#2d00ff,#3200ff,#3700ff,#3d00ff,#4200ff,#4700ff,#4d00ff,#5200ff,#5800ff,#5d00ff,#6300ff,#6800ff,#6e00ff,#7300ff,#7900ff,#7e00ff,#8400ff,#8a00ff,#8f00ff,#9500ff,#9a00ff,#a000ff,#a600ff,#ac00ff,#b100ff,#b700ff,#bd00ff,#c300ff,#c900ff,#cf00ff,#d400ff)"></i>
<i style="left:138px;top:360px;width:282px;background:linear-gradient(90deg,#0010ff,#000eff,#000dff,#000cff,#000aff,#0009ff,#0007ff,#0006ff,#0004ff,#0303ff,#0801ff,#0d00ff,#1200ff,#1700ff,#1c00ff,#2100ff,#2700ff,#2c00ff,#3100ff,#3600ff,#3c00ff,#4100ff,#4600ff,#4c00ff,#5100ff,#5600ff,#5c00ff,#6100ff,#6700ff,#6c00ff,#7200ff,#7700ff,#7d00ff,#8200ff,#8800ff,#8d00ff,#9300ff,#9900ff,#9e00ff,#a400ff,#aa00ff,#af00ff,#b500ff,#bb00ff,#c100ff,#c600ff,#cc00ff,#d200ff)"></i>
<i style="left:138px;top:363px;width:282px;background:linear-gradient(90deg,#000fff,#000eff,#000cff,#000bff,#0009ff,#0008ff,#0006ff,#0005ff,#0004ff,#0202ff,#0701ff,#0c00ff,#1100ff,#1600ff,#1c00ff,#2100ff,#2600ff,#2b00ff,#3000ff,#3500ff,#3b00ff,#4000ff,#4500ff,#4b00ff,#5000ff,#5500ff,#5b00ff,#6000ff,#6500ff,#6b00ff,#7000ff,#7600ff,#7b00ff,#8100ff,#8600ff,#8c00ff,#9100ff,#9700ff,#9c00ff,#a200ff,#a700ff,#ad00ff,#b300ff,#b800ff,#be00ff,#c400ff,#ca00ff,#cf00ff)"></i>
<i style="left:138px;top:366px;width:276px;background:linear-gradient(90deg,#000eff,#000dff,#000bff,#000aff,#0009ff,#0007ff,#0006ff,#0004ff,#0003ff,#0201ff,#0700ff,#0c00ff,#1100ff,#1600ff,#1b00ff,#2000ff,#2500ff,#2a00ff,#2f00ff,#3500ff,#3a00ff,#3f00ff,#4400ff,#4900ff,#4f00ff,#5400ff,#5900ff,#5f00ff,#6400ff,#6900ff,#6f00ff,#7400ff,#7900ff,#7f00ff,#8400ff,#8a00ff,#8f00ff,#9500ff,#9a00ff,#a000ff,#a500ff,#ab00ff,#b100ff,#b600ff,#bc00ff,#c200ff,#c700ff)"></i>
<i style="left:144px;top:369px;width:270px;background:linear-gradient(90deg,#000cff,#000bff,#0009ff,#0008ff,#0006ff,#0005ff,#0004ff,#0002ff,#0101ff,#0600ff,#0b00ff,#1000ff,#1500ff,#1a00ff,#1f00ff,#2400ff,#2900ff,#2f00ff,#3400ff,#3900ff,#3e00ff,#4300ff,#4800ff,#4e00ff,#5300ff,#5800ff,#5d00ff,#6300ff,#6800ff,#6d00ff,#7300ff,#7800ff,#7d00ff,#8300ff,#8800ff,#8e00ff,#9300ff,#9800ff,#9e00ff,#a300ff,#a900ff,#af00ff,#b400ff,#ba00ff,#bf00ff,#c500ff)"></i>
<i style="left:144px;top:372px;width:264px;background:linear-gradient(90deg,#000bff,#000aff,#0008ff,#0007ff,#0006ff,#0004ff,#0003ff,#0001ff,#0100ff,#0600ff,#0b00ff,#1000ff,#1500ff,#1a00ff,#1f00ff,#2400ff,#2900ff,#2e00ff,#3300ff,#3800ff,#3d00ff,#4200ff,#4700ff,#4c00ff,#5200ff,#5700ff,#5c00ff,#6100ff,#6700ff,#6c00ff,#7100ff,#7600ff,#7c00ff,#8100ff,#8600ff,#8c00ff,#9100ff,#9700ff,#9c00ff,#a200ff,#a700ff,#ad00ff,#b200ff,#b800ff,#bd00ff)"></i>
<i style="left:144px;top:375px;width:264px;background:linear-gradient(90deg,#000aff,#0009ff,#0008ff,#0006ff,#0005ff,#0004ff,#0002ff,#0001ff,#0000ff,#0500ff,#0a00ff,#0f00ff,#1400ff,#1900ff,#1e00ff,#2300ff,#2800ff,#2d00ff,#3200ff,#3700ff,#3c00ff,#4100ff,#4600ff,#4b00ff,#5100ff,#5600ff,#5b00ff,#6000ff,#6500ff,#6a00ff,#7000ff,#7500ff,#7a00ff,#7f00ff,#8500ff,#8a00ff,#8f00ff,#9500ff,#9a00ff,#a000ff,#a500ff,#aa00ff,#b000ff,#b500ff,#bb00ff)"></i>
<i style="left:150px;top:378px;width:252px;background:linear-gradient(90deg,#0008ff,#0007ff,#0006ff,#0004ff,#0003ff,#0001ff,#0000ff,#0000ff,#0500ff,#0a00ff,#0f00ff,#1300ff,#1800ff,#1d00ff,#2200ff,#2700ff,#2c00ff,#3100ff,#3600ff,#3b00ff,#4000ff,#4500ff,#4a00ff,#4f00ff,#5400ff,#5a00ff,#5f00ff,#6400ff,#6900ff,#6e00ff,#7300ff,#7900ff,#7e00ff,#8300ff,#8800ff,#8e00ff,#9300ff,#9800ff,#9e00ff,#a300ff,#a900ff,#ae00ff,#b300ff)"></i>
<i style="left:150px;top:381px;width:252px;background:linear-gradient(90deg,#0008ff,#0006ff,#0005ff,#0004ff,#0002ff,#0001ff,#0000ff,#0000ff,#0400ff,#0900ff,#0e00ff,#1300ff,#1800ff,#1d00ff,#2200ff,#2600ff,#2b00ff,#3000ff,#3500ff,#3a00ff,#3f00ff,#4400ff,#4900ff,#4e00ff,#5300ff,#5800ff,#5d00ff,#6300ff,#6800ff,#6d00ff,#7200ff,#7700ff,#7c00ff,#8200ff,#8700ff,#8c00ff,#9100ff,#9700ff,#9c00ff,#a100ff,#a700ff,#ac00ff,#b100ff)"></i>
<i style="left:156px;top:384px;width:240px;background:linear-gradient(90deg,#0006ff,#0004ff,#0003ff,#0001ff,#0000ff,#0000ff,#0000ff,#0400ff,#0900ff,#0e00ff,#1200ff,#1700ff,#1c00ff,#2100ff,#2600ff,#2b00ff,#3000ff,#3400ff,#3900ff,#3e00ff,#4300ff,#4800ff,#4d00ff,#5200ff,#5700ff,#5c00ff,#6100ff,#6600ff,#6b00ff,#7100ff,#7600ff,#7b00ff,#8000ff,#8500ff,#8a00ff,#9000ff,#9500ff,#9a00ff,#9f00ff,#a500ff,#aa00ff)"></i>
<i style="left:156px;top:387px;width:240px;background:linear-gradient(90deg,#0005ff,#0003ff,#0002ff,#0001ff,#0000ff,#0000ff,#0000ff,#0400ff,#0800ff,#0d00ff,#1200ff,#1700ff,#1b00ff,#2000ff,#2500ff,#2a00ff,#2f00ff,#3400ff,#3800ff,#3d00ff,#4200ff,#4700ff,#4c00ff,#5100ff,#5600ff,#5b00ff,#6000ff,#6500ff,#6a00ff,#6f00ff,#7400ff,#7900ff,#7e00ff,#8400ff,#8900ff,#8e00ff,#9300ff,#9800ff,#9e00ff,#a300ff,#a800ff)"></i>
<i style="left:156px;top:390px;width:234px;background:linear-gradient(90deg,#0004ff,#0003ff,#0001ff,#0000ff,#0000ff,#0000ff,#0000ff,#0300ff,#0800ff,#0d00ff,#1100ff,#1600ff,#1b00ff,#2000ff,#2400ff,#2900ff,#2e00ff,#3300ff,#3800ff,#3c00ff,#4100ff,#4600ff,#4b00ff,#5000ff,#5500ff,#5a00ff,#5f00ff,#6400ff,#6900ff,#6e00ff,#7300ff,#7800ff,#7d00ff,#8200ff,#8700ff,#8c00ff,#9100ff,#9700ff,#9c00ff,#a100ff)"></i>
<i style="left:162px;top:393px;width:228px;background:linear-gradient(90deg,#0002ff,#0001ff,#0000ff,#0000ff,#0000ff,#0000ff,#0300ff,#0700ff,#0c00ff,#1100ff,#1500ff,#1a00ff,#1f00ff,#2400ff,#2800ff,#2d00ff,#3200ff,#3700ff,#3c00ff,#4000ff,#4500ff,#4a00ff,#4f00ff,#5400ff,#5900ff,#5e00ff,#6300ff,#6800ff,#6d00ff,#7100ff,#7600ff,#7c00ff,#8100ff,#8600ff,#8b00ff,#9000ff,#9500ff,#9a00ff,#9f00ff)"></i>
<i style="left:162px;top:396px;width:222px;background:linear-gradient(90deg,#0001ff,#0000ff,#0000ff,#0000ff,#0000ff,#0000ff,#0200ff,#0700ff,#0c00ff,#1000ff,#1500ff,#1a00ff,#1e00ff,#2300ff,#2800ff,#2c00ff,#3100ff,#3600ff,#3b00ff,#3f00ff,#4400ff,#4900ff,#4e00ff,#5300ff,#5800ff,#5c00ff,#6100ff,#6600ff,#6b00ff,#7000ff,#7500ff,#7a00ff,#7f00ff,#8400ff,#8900ff,#8e00ff,#9300ff,#9800ff)"></i>
<i style="left:168px;top:399px;width:216px;background:linear-gradient(90deg,#0000ff,#0000ff,#0000ff,#0000ff,#0000ff,#0200ff,#0700ff,#0b00ff,#1000ff,#1400ff,#1900ff,#1e00ff,#2200ff,#2700ff,#2c00ff,#3000ff,#3500ff,#3a00ff,#3f00ff,#4300ff,#4800ff,#4d00ff,#5200ff,#5600ff,#5b00ff,#6000ff,#6500ff,#6a00ff,#6f00ff,#7400ff,#7900ff,#7e00ff,#8300ff,#8800ff,#8d00ff,#9200ff,#9700ff)"></i>
<i style="left:168px;top:402px;width:210px;background:linear-gradient(90deg,#0000ff,#0000ff,#0000ff,#0000ff,#0000ff,#0200ff,#0600ff,#0b00ff,#0f00ff,#1400ff,#1800ff,#1d00ff,#2200ff,#2600ff,#2b00ff,#3000ff,#3400ff,#3900ff,#3e00ff,#4200ff,#4700ff,#4c00ff,#5100ff,#5500ff,#5a00ff,#5f00ff,#6400ff,#6900ff,#6d00ff,#7200ff,#7700ff,#7c00ff,#8100ff,#8600ff,#8b00ff,#9000ff)"></i>
<i style="left:168px;top:405px;width:210px;background:linear-gradient(90deg,#0000ff,#0000ff,#0000ff,#0000ff,#0000ff,#0100ff,#0600ff,#0a00ff,#0f00ff,#1300ff,#1800ff,#1c00ff,#2100ff,#2600ff,#2a00ff,#2f00ff,#3300ff,#3800ff,#3d00ff,#4100ff,#4600ff,#4b00ff,#5000ff,#5400ff,#5900ff,#5e00ff,#6300ff,#6700ff,#6c00ff,#7100ff,#7600ff,#7b00ff,#8000ff,#8400ff,#8900ff,#8e00ff)"></i>
<i style="left:174px;top:408px;width:198px;background:linear-gradient(90deg,#0000ff,#0000ff,#0000ff,#0000ff,#0100ff,#0500ff,#0a00ff,#0e00ff,#1300ff,#1700ff,#1c00ff,#2000ff,#2500ff,#2a00ff,#2e00ff,#3300ff,#3700ff,#3c00ff,#4100ff,#4500ff,#4a00ff,#4f00ff,#5300ff,#5800ff,#5d00ff,#6100ff,#6600ff,#6b00ff,#7000ff,#7400ff,#7900ff,#7e00ff,#8300ff,#8800ff)"></i>
<i style="left:174px;top:411px;width:198px;background:linear-gradient(90deg,#0000ff,#0000ff,#0000ff,#0000ff,#0100ff,#0500ff,#0900ff,#0e00ff,#1200ff,#1700ff,#1b00ff,#2000ff,#2400ff,#2900ff,#2d00ff,#3200ff,#3600ff,#3b00ff,#4000ff,#4400ff,#4900ff,#4e00ff,#5200ff,#5700ff,#5c00ff,#6000ff,#6500ff,#6a00ff,#6e00ff,#7300ff,#7800ff,#7d00ff,#8200ff,#8600ff)"></i>
<i style="left:180px;top:414px;width:186px;background:linear-gradient(90deg,#0000ff,#0000ff,#0000ff,#0000ff,#0500ff,#0900ff,#0d00ff,#1200ff,#1600ff,#1b00ff,#1f00ff,#2400ff,#2800ff,#2d00ff,#3100ff,#3600ff,#3a00ff,#3f00ff,#4300ff,#4800ff,#4d00ff,#5100ff,#5600ff,#5a00ff,#5f00ff,#6400ff,#6800ff,#6d00ff,#7200ff,#7700ff,#7b00ff,#8000ff)"></i>
<i style="left:180px;top:417px;width:186px;background:linear-gradient(90deg,#0000ff,#0000ff,#0000ff,#0000ff,#0400ff,#0900ff,#0d00ff,#1100ff,#1600ff,#1a00ff,#1f00ff,#2300ff,#2700ff,#2c00ff,#3000ff,#3500ff,#3900ff,#3e00ff,#4200ff,#4700ff,#4c00ff,#5000ff,#5500ff,#5900ff,#5e00ff,#6300ff,#6700ff,#6c00ff,#7100ff,#7500ff,#7a00ff,#7f00ff)"></i>
<i style="left:186px;top:420px;width:174px;background:linear-gradient(90deg,#0000ff,#0000ff,#0000ff,#0400ff,#0800ff,#0c00ff,#1100ff,#1500ff,#1a00ff,#1e00ff,#2200ff,#2700ff,#2b00ff,#3000ff,#3400ff,#3900ff,#3d00ff,#4200ff,#4600ff,#4b00ff,#4f00ff,#5400ff,#5800ff,#5d00ff,#6100ff,#6600ff,#6b00ff,#6f00ff,#7400ff,#7900ff)"></i>
<i style="left:186px;top:423px;width:174px;background:linear-gradient(90deg,#0000ff,#0000ff,#0000ff,#0300ff,#0800ff,#0c00ff,#1000ff,#1500ff,#1900ff,#1d00ff,#2200ff,#2600ff,#2b00ff,#2f00ff,#3300ff,#3800ff,#3c00ff,#4100ff,#4500ff,#4a00ff,#4e00ff,#5300ff,#5700ff,#5c00ff,#6000ff,#6500ff,#6900ff,#6e00ff,#7300ff,#7700ff)"></i>
<i style="left:192px;top:426px;width:168px;background:linear-gradient(90deg,#0000ff,#0000ff,#0300ff,#0700ff,#0c00ff,#1000ff,#1400ff,#1900ff,#1d00ff,#2100ff,#2600ff,#2a00ff,#2e00ff,#3300ff,#3700ff,#3b00ff,#4000ff,#4400ff,#4900ff,#4d00ff,#5200ff,#5600ff,#5b00ff,#5f00ff,#6400ff,#6800ff,#6d00ff,#7100ff,#7600ff)"></i>
<i style="left:192px;top:429px;width:162px;background:linear-gradient(90deg,#0000ff,#0000ff,#0300ff,#0700ff,#0b00ff,#0f00ff,#1400ff,#1800ff,#1c00ff,#2100ff,#2500ff,#2900ff,#2e00ff,#3200ff,#3600ff,#3b00ff,#3f00ff,#4300ff,#4800ff,#4c00ff,#5100ff,#5500ff,#5a00ff,#5e00ff,#6300ff,#6700ff,#6c00ff,#7000ff)"></i>
<i style="left:198px;top:432px;width:156px;background:linear-gradient(90deg,#0000ff,#0200ff,#0700ff,#0b00ff,#0f00ff,#1300ff,#1700ff,#1c00ff,#2000ff,#2400ff,#2900ff,#2d00ff,#3100ff,#3500ff,#3a00ff,#3e00ff,#4300ff,#4700ff,#4b00ff,#5000ff,#5400ff,#5900ff,#5d00ff,#6100ff,#6600ff,#6a00ff,#6f00ff)"></i>
<i style="left:198px;top:435px;width:150px;background:linear-gradient(90deg,#0000ff,#0200ff,#0600ff,#0a00ff,#0f00ff,#1300ff,#1700ff,#1b00ff,#1f00ff,#2400ff,#2800ff,#2c00ff,#3000ff,#3500ff,#3900ff,#3d00ff,#4200ff,#4600ff,#4a00ff,#4f00ff,#5300ff,#5800ff,#5c00ff,#6000ff,#6500ff,#6900ff)"></i>
<i style="left:204px;top:438px;width:144px;background:linear-gradient(90deg,#0200ff,#0600ff,#0a00ff,#0e00ff,#1200ff,#1600ff,#1b00ff,#1f00ff,#2300ff,#2700ff,#2b00ff,#3000ff,#3400ff,#3800ff,#3d00ff,#4100ff,#4500ff,#4900ff,#4e00ff,#5200ff,#5700ff,#5b00ff,#5f00ff,#6400ff,#6800ff)"></i>
<i style="left:204px;top:441px;width:138px;background:linear-gradient(90deg,#0100ff,#0500ff,#0a00ff,#0e00ff,#1200ff,#1600ff,#1a00ff,#1e00ff,#2200ff,#2700ff,#2b00ff,#2f00ff,#3300ff,#3800ff,#3c00ff,#4000ff,#4400ff,#4900ff,#4d00ff,#5100ff,#5600ff,#5a00ff,#5e00ff,#6300ff)"></i>
<i style="left:210px;top:444px;width:132px;background:linear-gradient(90deg,#0500ff,#0900ff,#0d00ff,#1100ff,#1500ff,#1a00ff,#1e00ff,#2200ff,#2600ff,#2a00ff,#2e00ff,#3300ff,#3700ff,#3b00ff,#3f00ff,#4300ff,#4800ff,#4c00ff,#5000ff,#5500ff,#5900ff,#5d00ff,#6100ff)"></i>
<i style="left:210px;top:447px;width:126px;background:linear-gradient(90deg,#0500ff,#0900ff,#0d00ff,#1100ff,#1500ff,#1900ff,#1d00ff,#2100ff,#2500ff,#2a00ff,#2e00ff,#3200ff,#3600ff,#3a00ff,#3e00ff,#4300ff,#4700ff,#4b00ff,#4f00ff,#5400ff,#5800ff,#5c00ff)"></i>
<i style="left:216px;top:450px;width:120px;background:linear-gradient(90deg,#0800ff,#0c00ff,#1000ff,#1400ff,#1900ff,#1d00ff,#2100ff,#2500ff,#2900ff,#2d00ff,#3100ff,#3500ff,#3900ff,#3e00ff,#4200ff,#4600ff,#4a00ff,#4e00ff,#5300ff,#5700ff,#5b00ff)"></i>
<i style="left:216px;top:453px;width:114px;background:linear-gradient(90deg,#0800ff,#0c00ff,#1000ff,#1400ff,#1800ff,#1c00ff,#2000ff,#2400ff,#2800ff,#2c00ff,#3000ff,#3500ff,#3900ff,#3d00ff,#4100ff,#4500ff,#4900ff,#4d00ff,#5200ff,#5600ff)"></i>
<i style="left:222px;top:456px;width:108px;background:linear-gradient(90deg,#0c00ff,#1000ff,#1400ff,#1800ff,#1c00ff,#2000ff,#2400ff,#2800ff,#2c00ff,#3000ff,#3400ff,#3800ff,#3c00ff,#4000ff,#4400ff,#4800ff,#4d00ff,#5100ff,#5500ff)"></i>
<i style="left:228px;top:459px;width:96px;background:linear-gradient(90deg,#0f00ff,#1300ff,#1700ff,#1b00ff,#1f00ff,#2300ff,#2700ff,#2b00ff,#2f00ff,#3300ff,#3700ff,#3b00ff,#3f00ff,#4400ff,#4800ff,#4c00ff,#5000ff)"></i>
<i style="left:228px;top:462px;width:96px;background:linear-gradient(90deg,#0f00ff,#1300ff,#1700ff,#1b00ff,#1f00ff,#2200ff,#2600ff,#2a00ff,#2e00ff,#3300ff,#3700ff,#3b00ff,#3f00ff,#4300ff,#4700ff,#4b00ff,#4f00ff)"></i>
<i style="left:234px;top:465px;width:84px;background:linear-gradient(90deg,#1200ff,#1600ff,#1a00ff,#1e00ff,#2200ff,#2600ff,#2a00ff,#2e00ff,#3200ff,#3600ff,#3a00ff,#3e00ff,#4200ff,#4600ff,#4a00ff)"></i>
<i style="left:234px;top:468px;width:84px;background:linear-gradient(90deg,#1200ff,#1600ff,#1a00ff,#1d00ff,#2100ff,#2500ff,#2900ff,#2d00ff,#3100ff,#3500ff,#3900ff,#3d00ff,#4100ff,#4500ff,#4900ff)"></i>
<i style="left:240px;top:471px;width:72px;background:linear-gradient(90deg,#1500ff,#1900ff,#1d00ff,#2100ff,#2500ff,#2900ff,#2d00ff,#3100ff,#3400ff,#3800ff,#3c00ff,#4000ff,#4400ff)"></i>
<i style="left:246px;top:474px;width:66px;background:linear-gradient(90deg,#1900ff,#1c00ff,#2000ff,#2400ff,#2800ff,#2c00ff,#3000ff,#3400ff,#3800ff,#3c00ff,#4000ff,#4400ff)"></i>
<i style="left:246px;top:477px;width:60px;background:linear-gradient(90deg,#1800ff,#1c00ff,#2000ff,#2400ff,#2700ff,#2b00ff,#2f00ff,#3300ff,#3700ff,#3b00ff,#3f00ff)"></i>
<i style="left:252px;top:480px;width:54px;background:linear-gradient(90deg,#1b00ff,#1f00ff,#2300ff,#2700ff,#2b00ff,#2f00ff,#3200ff,#3600ff,#3a00ff,#3e00ff)"></i>
<i style="left:252px;top:483px;width:48px;background:linear-gradient(90deg,#1b00ff,#1f00ff,#2300ff,#2600ff,#2a00ff,#2e00ff,#3200ff,#3600ff,#3a00ff)"></i>
<i style="left:258px;top:486px;width:42px;background:linear-gradient(90deg,#1e00ff,#2200ff,#2600ff,#2a00ff,#2d00ff,#3100ff,#3500ff,#3900ff)"></i>
<i style="left:264px;top:489px;width:36px;background:linear-gradient(90deg,#2100ff,#2500ff,#2900ff,#2d00ff,#3100ff,#3400ff,#3800ff)"></i>
<i style="left:264px;top:492px;width:30px;background:linear-gradient(90deg,#2100ff,#2500ff,#2800ff,#2c00ff,#3000ff,#3400ff)"></i>
<i style="left:270px;top:495px;width:24px;background:linear-gradient(90deg,#2400ff,#2800ff,#2c00ff,#2f00ff,#3300ff)"></i>
</div>
<svg class="b" style="left:0;top:0" width="657" height="509" viewBox="0 0 657 509">
<path d="M286.0 493.9L284.6 495.2L283.2 496.1L281.8 496.7L280.4 497.0L278.9 496.9L277.4 496.4L275.9 495.6L274.4 494.5L268.5 489.5L266.6 488.0L264.9 486.5L263.0 484.9L260.8 483.1L258.5 481.1L256.0 478.9L253.3 476.7L250.4 474.2L247.2 471.6L243.6 468.6L239.7 465.4L235.6 462.0L231.2 458.4L226.6 454.5L221.7 450.2L216.3 445.5L210.6 440.4L204.6 434.7L198.2 428.5L191.5 421.7L184.0 413.5L175.6 403.8L166.5 392.8L156.8 380.4L146.5 366.6L135.7 351.4L124.6 335.0L113.1 317.1L101.3 298.1L89.7 278.5L78.1 258.4L66.7 237.8L56.1 217.4L46.5 197.3L37.7 177.5L29.8 158.8L23.0 141.1L17.0 124.5L12.0 109.3L8.1 95.9L5.1 83.8L2.8 72.6L1.3 61.7L0.6 51.6L0.4 43.0L0.8 36.3L1.8 31.0L3.2 26.5L5.0 22.6L7.3 19.5L10.0 16.8L13.3 14.5L17.0 12.8L21.0 11.4L25.0 10.6L29.3 10.2L34.0 9.9L39.4 9.7L45.2 9.7L51.0 9.7L56.6 9.7L62.3 9.8L68.0 9.9L73.9 10.2L79.8 10.5L85.8 10.9L91.6 11.3L97.4 11.7L103.3 12.2L109.5 12.7L115.8 13.3L122.4 13.9L129.2 14.6L136.2 15.3L143.4 16.1L150.9 16.9L158.6 17.7L166.6 18.6L174.9 19.5L183.5 20.5L192.4 21.5L201.5 22.5L211.0 23.6L220.8 24.7L231.0 25.9L241.4 27.1L252.1 28.4L263.2 29.6L274.6 31.0L286.3 32.3L298.3 33.7L310.5 35.1L323.1 36.6L335.9 38.1L348.9 39.6L362.0 41.1L375.3 42.7L388.7 44.2L402.0 45.8L415.1 47.3L428.0 48.8L440.8 50.3L453.6 51.8L466.3 53.2L478.5 54.6L490.4 56.0L501.8 57.3L512.7 58.6L523.3 59.8L533.4 61.0L543.0 62.1L551.4 63.1L559.2 64.0L568.7 65.1L581.3 66.5L595.4 68.2L608.4 69.7L618.8 70.9L628.0 72.0L637.4 73.1L667.9 76.6L681.6 78.2ZM492.5 64.2L135.9 30.6L191.1 374.5Z" fill="#000" fill-opacity="0.4" fill-rule="evenodd"/>
<rect x="127.8" y="22.7" width="13" height="13" fill="none" stroke="#fff" stroke-width="1.7" opacity="0.86"/>
<rect x="141.0" y="35.2" width="13" height="13" fill="none" stroke="#fff" stroke-width="1.7" opacity="0.86"/>
<rect x="153.6" y="48.1" width="13" height="13" fill="none" stroke="#fff" stroke-width="1.7" opacity="0.86"/>
<rect x="168.9" y="63.9" width="13" height="13" fill="none" stroke="#fff" stroke-width="1.7" opacity="0.86"/>
<rect x="186.9" y="80.8" width="13" height="13" fill="none" stroke="#fff" stroke-width="1.7" opacity="0.86"/>
<rect x="143.4" y="114.5" width="13" height="13" fill="none" stroke="#fff" stroke-width="1.7" opacity="0.86"/>
<rect x="155.3" y="111.2" width="13" height="13" fill="none" stroke="#fff" stroke-width="1.7" opacity="0.86"/>
<rect x="168.9" y="109.8" width="13" height="13" fill="none" stroke="#fff" stroke-width="1.7" opacity="0.86"/>
<rect x="182.5" y="107.7" width="13" height="13" fill="none" stroke="#fff" stroke-width="1.7" opacity="0.86"/>
<rect x="194.3" y="106.2" width="13" height="13" fill="none" stroke="#fff" stroke-width="1.7" opacity="0.86"/>
<rect x="226.4" y="120.4" width="13" height="13" fill="none" stroke="#fff" stroke-width="1.7" opacity="0.86"/>
<rect x="245.9" y="140.6" width="13" height="13" fill="none" stroke="#fff" stroke-width="1.7" opacity="0.86"/>
<rect x="267.1" y="161.4" width="13" height="13" fill="none" stroke="#fff" stroke-width="1.7" opacity="0.86"/>
<rect x="292.6" y="186.9" width="13" height="13" fill="none" stroke="#fff" stroke-width="1.7" opacity="0.86"/>
<rect x="326.0" y="220.8" width="13" height="13" fill="none" stroke="#fff" stroke-width="1.7" opacity="0.86"/>
<rect x="205.4" y="136.0" width="13" height="13" fill="none" stroke="#fff" stroke-width="1.7" opacity="0.86"/>
<rect x="202.5" y="173.0" width="13" height="13" fill="none" stroke="#fff" stroke-width="1.7" opacity="0.86"/>
<rect x="198.6" y="219.5" width="13" height="13" fill="none" stroke="#fff" stroke-width="1.7" opacity="0.86"/>
<rect x="192.9" y="279.0" width="13" height="13" fill="none" stroke="#fff" stroke-width="1.7" opacity="0.86"/>
<rect x="184.3" y="368.2" width="13" height="13" fill="none" stroke="#fff" stroke-width="1.7" opacity="0.86"/>
<rect x="258.5" y="94.9" width="13" height="13" fill="none" stroke="#fff" stroke-width="1.7" opacity="0.86"/>
<rect x="313.4" y="84.8" width="13" height="13" fill="none" stroke="#fff" stroke-width="1.7" opacity="0.86"/>
<rect x="362.6" y="78.0" width="13" height="13" fill="none" stroke="#fff" stroke-width="1.7" opacity="0.86"/>
<rect x="417.1" y="68.4" width="13" height="13" fill="none" stroke="#fff" stroke-width="1.7" opacity="0.86"/>
<rect x="486.0" y="56.9" width="13" height="13" fill="none" stroke="#fff" stroke-width="1.7" opacity="0.86"/>
<rect x="210.8" y="85.4" width="13" height="13" fill="none" stroke="#fff" stroke-width="1.7" opacity="0.86"/>
<rect x="212.3" y="69.3" width="13" height="13" fill="none" stroke="#fff" stroke-width="1.7" opacity="0.86"/>
<rect x="213.6" y="55.5" width="13" height="13" fill="none" stroke="#fff" stroke-width="1.7" opacity="0.86"/>
<rect x="214.6" y="43.9" width="13" height="13" fill="none" stroke="#fff" stroke-width="1.7" opacity="0.86"/>
<rect x="215.8" y="31.4" width="13" height="13" fill="none" stroke="#fff" stroke-width="1.7" opacity="0.86"/>
<circle cx="175.1" cy="88.8" r="4.4" fill="#a5bb9c" stroke="#000" stroke-width="1.1"/>
<circle cx="146.0" cy="63.2" r="4.4" fill="#86bd7f" stroke="#000" stroke-width="1.1"/>
<circle cx="124.9" cy="44.9" r="4.4" fill="#62bf5e" stroke="#000" stroke-width="1.1"/>
<circle cx="105.0" cy="27.8" r="4.4" fill="#3bc138" stroke="#000" stroke-width="1.1"/>
<circle cx="91.1" cy="16.9" r="4.4" fill="#10c410" stroke="#000" stroke-width="1.1"/>
<circle cx="213.0" cy="94.4" r="4.4" fill="#bcbb9c" stroke="#000" stroke-width="1.1"/>
<circle cx="215.1" cy="72.1" r="4.4" fill="#bebc7f" stroke="#000" stroke-width="1.1"/>
<circle cx="216.0" cy="53.9" r="4.4" fill="#c1bd5e" stroke="#000" stroke-width="1.1"/>
<circle cx="217.4" cy="38.9" r="4.4" fill="#c4be38" stroke="#000" stroke-width="1.1"/>
<circle cx="219.2" cy="28.1" r="4.4" fill="#c8c010" stroke="#000" stroke-width="1.1"/>
<circle cx="191.2" cy="123.9" r="4.4" fill="#a5bbb2" stroke="#000" stroke-width="1.1"/>
<circle cx="171.1" cy="128.2" r="4.4" fill="#86bdb4" stroke="#000" stroke-width="1.1"/>
<circle cx="151.5" cy="132.8" r="4.4" fill="#62bfb7" stroke="#000" stroke-width="1.1"/>
<circle cx="136.0" cy="135.0" r="4.4" fill="#3bc1ba" stroke="#000" stroke-width="1.1"/>
<circle cx="121.9" cy="137.1" r="4.4" fill="#10c4be" stroke="#000" stroke-width="1.1"/>
<circle cx="238.5" cy="142.8" r="4.4" fill="#b9a5b2" stroke="#000" stroke-width="1.1"/>
<circle cx="269.1" cy="169.5" r="4.4" fill="#b886b4" stroke="#000" stroke-width="1.1"/>
<circle cx="294.3" cy="191.9" r="4.4" fill="#b762b7" stroke="#000" stroke-width="1.1"/>
<circle cx="320.9" cy="215.8" r="4.4" fill="#b63bba" stroke="#000" stroke-width="1.1"/>
<circle cx="344.0" cy="238.9" r="4.4" fill="#b410be" stroke="#000" stroke-width="1.1"/>
<circle cx="209.0" cy="167.9" r="4.4" fill="#a4a4af" stroke="#000" stroke-width="1.1"/>
<circle cx="205.1" cy="221.7" r="4.4" fill="#8583ae" stroke="#000" stroke-width="1.1"/>
<circle cx="200.7" cy="276.9" r="4.4" fill="#5f5cad" stroke="#000" stroke-width="1.1"/>
<circle cx="195.0" cy="340.6" r="4.4" fill="#3632ac" stroke="#000" stroke-width="1.1"/>
<circle cx="189.0" cy="401.1" r="4.4" fill="#0a04aa" stroke="#000" stroke-width="1.1"/>
<circle cx="289.0" cy="103.9" r="4.4" fill="#bca39a" stroke="#000" stroke-width="1.1"/>
<circle cx="363.0" cy="88.8" r="4.4" fill="#bf817b" stroke="#000" stroke-width="1.1"/>
<circle cx="419.1" cy="77.9" r="4.4" fill="#c35a55" stroke="#000" stroke-width="1.1"/>
<circle cx="473.0" cy="65.8" r="4.4" fill="#c72f2c" stroke="#000" stroke-width="1.1"/>
<circle cx="513.1" cy="58.0" r="4.4" fill="#cc0000" stroke="#000" stroke-width="1.1"/>
<rect x="207.9" y="103.4" width="13" height="13" fill="none" stroke="#000" stroke-width="1.7" opacity="1"/>
<circle cx="212.0" cy="119.9" r="4.4" fill="#fff" stroke="#000" stroke-width="1.1"/>
</svg>
</div>
<div id="inset" class="b" style="left:1482px;top:429px;width:217px;height:147px;overflow:hidden;border:1px solid #9a9a8e;background:#880">
<div class="rows">
<i style="left:0px;top:0px;width:217px;background:linear-gradient(90deg,#90ff00,#94ff00,#99ff00,#9dff00,#a1ff00,#a5ff00,#a9ff00,#aeff00,#b2ff00,#b6ff00,#bbff00,#bfff00,#c4ff00,#c8ff00,#cdff00,#d1ff00,#d6ff00,#daff00,#dfff00,#e4ff00,#e8ff00,#edff00,#f2ff00,#f7ff00,#fcff00,#fffd00,#fff800,#fff400,#ffef00,#ffeb00,#ffe600,#ffe200)"></i>
<i style="left:0px;top:3px;width:217px;background:linear-gradient(90deg,#92ff00,#96ff00,#9aff00,#9eff00,#a2ff00,#a6ff00,#abff00,#afff00,#b3ff00,#b8ff00,#bcff00,#c1ff00,#c5ff00,#caff00,#ceff00,#d3ff00,#d7ff00,#dcff00,#e1ff00,#e5ff00,#eaff00,#efff00,#f4ff00,#f9ff00,#feff00,#fffb00,#fff700,#fff200,#ffed00,#ffe900,#ffe500,#ffe100)"></i>
<i style="left:0px;top:6px;width:217px;background:linear-gradient(90deg,#93ff00,#97ff00,#9bff00,#9fff00,#a4ff00,#a8ff00,#acff00,#b0ff00,#b5ff00,#b9ff00,#beff00,#c2ff00,#c7ff00,#cbff00,#d0ff00,#d4ff00,#d9ff00,#deff00,#e2ff00,#e7ff00,#ecff00,#f1ff00,#f6ff00,#fbff00,#fffe00,#fff900,#fff500,#fff000,#ffec00,#ffe700,#ffe300,#ffdf00)"></i>
<i style="left:0px;top:9px;width:217px;background:linear-gradient(90deg,#94ff00,#98ff00,#9cff00,#a1ff00,#a5ff00,#a9ff00,#aeff00,#b2ff00,#b6ff00,#bbff00,#bfff00,#c4ff00,#c8ff00,#cdff00,#d1ff00,#d6ff00,#dbff00,#dfff00,#e4ff00,#e9ff00,#eeff00,#f3ff00,#f8ff00,#fdff00,#fffc00,#fff800,#fff300,#ffee00,#ffea00,#ffe600,#ffe100,#ffdd00)"></i>
<i style="left:0px;top:12px;width:217px;background:linear-gradient(90deg,#95ff00,#9aff00,#9eff00,#a2ff00,#a6ff00,#abff00,#afff00,#b3ff00,#b8ff00,#bcff00,#c1ff00,#c5ff00,#caff00,#ceff00,#d3ff00,#d8ff00,#dcff00,#e1ff00,#e6ff00,#ebff00,#f0ff00,#f5ff00,#f9ff00,#feff00,#fffb00,#fff600,#fff100,#ffed00,#ffe800,#ffe400,#ffe000,#ffdc00)"></i>
<i style="left:0px;top:15px;width:217px;background:linear-gradient(90deg,#97ff00,#9bff00,#9fff00,#a3ff00,#a8ff00,#acff00,#b0ff00,#b5ff00,#b9ff00,#beff00,#c2ff00,#c7ff00,#cbff00,#d0ff00,#d5ff00,#d9ff00,#deff00,#e3ff00,#e8ff00,#edff00,#f1ff00,#f6ff00,#fbff00,#fffe00,#fff900,#fff400,#ffef00,#ffeb00,#ffe600,#ffe200,#ffde00,#ffda00)"></i>
<i style="left:0px;top:18px;width:217px;background:linear-gradient(90deg,#98ff01,#9cff00,#a1ff00,#a5ff00,#a9ff00,#aeff00,#b2ff00,#b6ff00,#bbff00,#bfff00,#c4ff00,#c8ff00,#cdff00,#d2ff00,#d6ff00,#dbff00,#e0ff00,#e5ff00,#eaff00,#eeff00,#f3ff00,#f8ff00,#fdff00,#fffc00,#fff700,#fff200,#ffee00,#ffe900,#ffe500,#ffe100,#ffdc00,#ffd800)"></i>
<i style="left:0px;top:21px;width:217px;background:linear-gradient(90deg,#99ff02,#9eff01,#a2ff00,#a6ff00,#abff00,#afff00,#b3ff00,#b8ff00,#bcff00,#c1ff00,#c5ff00,#caff00,#cfff00,#d3ff00,#d8ff00,#ddff00,#e2ff00,#e6ff00,#ebff00,#f0ff00,#f5ff00,#faff00,#ffff00,#fffa00,#fff500,#fff000,#ffec00,#ffe700,#ffe300,#ffdf00,#ffdb00,#ffd700)"></i>
<i style="left:0px;top:24px;width:217px;background:linear-gradient(90deg,#9bff03,#9fff02,#a3ff01,#a8ff00,#acff00,#b0ff00,#b5ff00,#b9ff00,#beff00,#c2ff00,#c7ff00,#ccff00,#d0ff00,#d5ff00,#daff00,#dfff00,#e3ff00,#e8ff00,#edff00,#f2ff00,#f7ff00,#fcff00,#fffd00,#fff800,#fff300,#ffee00,#ffea00,#ffe600,#ffe100,#ffdd00,#ffd900,#ffd500)"></i>
<i style="left:0px;top:27px;width:217px;background:linear-gradient(90deg,#9cff03,#a0ff02,#a5ff01,#a9ff00,#adff00,#b2ff00,#b6ff00,#bbff00,#bfff00,#c4ff00,#c9ff00,#cdff00,#d2ff00,#d7ff00,#dcff00,#e0ff00,#e5ff00,#eaff00,#efff00,#f4ff00,#f9ff00,#feff00,#fffb00,#fff600,#fff100,#ffed00,#ffe800,#ffe400,#ffe000,#ffdc00,#ffd800,#ffd400)"></i>
<i style="left:0px;top:30px;width:217px;background:linear-gradient(90deg,#9dff04,#a2ff03,#a6ff02,#aaff01,#afff00,#b3ff00,#b8ff00,#bcff00,#c1ff00,#c6ff00,#caff00,#cfff00,#d4ff00,#d8ff00,#ddff00,#e2ff00,#e7ff00,#ecff00,#f1ff00,#f6ff00,#fbff00,#fffe00,#fff900,#fff400,#ffef00,#ffeb00,#ffe600,#ffe200,#ffde00,#ffda00,#ffd600,#ffd200)"></i>
<i style="left:0px;top:33px;width:217px;background:linear-gradient(90deg,#9fff05,#a3ff04,#a7ff03,#acff02,#b0ff01,#b5ff00,#b9ff00,#beff00,#c3ff00,#c7ff00,#ccff00,#d1ff00,#d5ff00,#daff00,#dfff00,#e4ff00,#e9ff00,#eeff00,#f3ff00,#f8ff00,#fdff00,#fffc00,#fff700,#fff200,#ffee00,#ffe900,#ffe500,#ffe000,#ffdc00,#ffd800,#ffd400,#ffd100)"></i>
<i style="left:0px;top:36px;width:217px;background:linear-gradient(90deg,#a0ff06,#a5ff05,#a9ff04,#adff03,#b2ff02,#b6ff01,#bbff00,#c0ff00,#c4ff00,#c9ff00,#ceff00,#d2ff00,#d7ff00,#dcff00,#e1ff00,#e6ff00,#ebff00,#f0ff00,#f5ff00,#faff00,#ffff00,#fffa00,#fff500,#fff000,#ffec00,#ffe700,#ffe300,#ffdf00,#ffdb00,#ffd700,#ffd300,#ffcf00)"></i>
<i style="left:0px;top:39px;width:217px;background:linear-gradient(90deg,#a2ff07,#a6ff06,#aaff05,#afff04,#b3ff03,#b8ff02,#bcff01,#c1ff00,#c6ff00,#caff00,#cfff00,#d4ff00,#d9ff00,#deff00,#e3ff00,#e8ff00,#ecff00,#f2ff00,#f7ff00,#fcff00,#fffd00,#fff800,#fff300,#ffef00,#ffea00,#ffe600,#ffe100,#ffdd00,#ffd900,#ffd500,#ffd100,#ffcd00)"></i>
<i style="left:0px;top:42px;width:217px;background:linear-gradient(90deg,#a3ff08,#a7ff07,#acff06,#b0ff05,#b5ff04,#b9ff03,#beff02,#c3ff01,#c7ff00,#ccff00,#d1ff00,#d6ff00,#dbff00,#dfff00,#e4ff00,#e9ff00,#eeff00,#f3ff00,#f9ff00,#feff00,#fffb00,#fff600,#fff100,#ffed00,#ffe800,#ffe400,#ffdf00,#ffdb00,#ffd700,#ffd300,#ffd000,#ffcc00)"></i>
<i style="left:0px;top:45px;width:217px;background:linear-gradient(90deg,#a4ff08,#a9ff07,#adff06,#b2ff05,#b6ff04,#bbff03,#c0ff02,#c4ff01,#c9ff00,#ceff00,#d3ff00,#d7ff00,#dcff00,#e1ff00,#e6ff00,#ebff00,#f0ff00,#f5ff00,#faff00,#fffe00,#fff900,#fff400,#fff000,#ffeb00,#ffe600,#ffe200,#ffde00,#ffda00,#ffd600,#ffd200,#ffce00,#ffca00)"></i>
<i style="left:0px;top:48px;width:217px;background:linear-gradient(90deg,#a6ff09,#aaff08,#afff07,#b3ff06,#b8ff05,#bdff04,#c1ff03,#c6ff02,#cbff01,#cfff00,#d4ff00,#d9ff00,#deff00,#e3ff00,#e8ff00,#edff00,#f2ff00,#f7ff00,#fcff00,#fffc00,#fff700,#fff200,#ffee00,#ffe900,#ffe500,#ffe000,#ffdc00,#ffd800,#ffd400,#ffd000,#ffcc00,#ffc900)"></i>
<i style="left:0px;top:51px;width:217px;background:linear-gradient(90deg,#a7ff0a,#acff09,#b0ff08,#b5ff07,#baff06,#beff05,#c3ff04,#c8ff03,#ccff02,#d1ff01,#d6ff00,#dbff00,#e0ff00,#e5ff00,#eaff00,#efff00,#f4ff00,#f9ff00,#feff00,#fffa00,#fff500,#fff100,#ffec00,#ffe700,#ffe300,#ffdf00,#ffda00,#ffd600,#ffd200,#ffcf00,#ffcb00,#ffc700)"></i>
<i style="left:0px;top:54px;width:217px;background:linear-gradient(90deg,#a9ff0b,#adff0a,#b2ff09,#b6ff08,#bbff07,#c0ff06,#c4ff05,#c9ff04,#ceff03,#d3ff02,#d8ff01,#ddff00,#e2ff00,#e7ff00,#ecff00,#f1ff00,#f6ff00,#fbff00,#fffe00,#fff800,#fff300,#ffef00,#ffea00,#ffe500,#ffe100,#ffdd00,#ffd900,#ffd500,#ffd100,#ffcd00,#ffc900,#ffc600)"></i>
<i style="left:0px;top:57px;width:217px;background:linear-gradient(90deg,#aaff0c,#afff0b,#b3ff0a,#b8ff09,#bdff08,#c1ff07,#c6ff06,#cbff05,#d0ff04,#d5ff03,#daff02,#dfff01,#e4ff00,#e9ff00,#eeff00,#f3ff00,#f8ff00,#fdff00,#fffc00,#fff600,#fff200,#ffed00,#ffe800,#ffe400,#ffdf00,#ffdb00,#ffd700,#ffd300,#ffcf00,#ffcb00,#ffc800,#ffc400)"></i>
<i style="left:0px;top:60px;width:217px;background:linear-gradient(90deg,#acff0d,#b0ff0c,#b5ff0b,#baff0a,#beff09,#c3ff08,#c8ff07,#cdff06,#d1ff05,#d6ff04,#dbff02,#e0ff01,#e5ff00,#eaff00,#f0ff00,#f5ff00,#faff00,#ffff00,#fffa00,#fff500,#fff000,#ffeb00,#ffe600,#ffe200,#ffde00,#ffd900,#ffd500,#ffd100,#ffce00,#ffca00,#ffc600,#ffc300)"></i>
<i style="left:0px;top:63px;width:217px;background:linear-gradient(90deg,#adff0e,#b2ff0d,#b6ff0c,#bbff0b,#c0ff0a,#c5ff09,#c9ff08,#ceff07,#d3ff05,#d8ff04,#ddff03,#e2ff02,#e7ff01,#ecff00,#f2ff00,#f7ff00,#fcff00,#fffd00,#fff800,#fff300,#ffee00,#ffe900,#ffe500,#ffe000,#ffdc00,#ffd800,#ffd400,#ffd000,#ffcc00,#ffc800,#ffc500,#ffc100)"></i>
<i style="left:0px;top:66px;width:217px;background:linear-gradient(90deg,#afff0f,#b3ff0e,#b8ff0d,#bdff0c,#c2ff0b,#c6ff0a,#cbff08,#d0ff07,#d5ff06,#daff05,#dfff04,#e4ff03,#e9ff02,#eeff01,#f4ff00,#f9ff00,#feff00,#fffb00,#fff600,#fff100,#ffec00,#ffe700,#ffe300,#ffde00,#ffda00,#ffd600,#ffd200,#ffce00,#ffca00,#ffc700,#ffc300,#ffc000)"></i>
<i style="left:0px;top:69px;width:217px;background:linear-gradient(90deg,#b0ff0f,#b5ff0e,#baff0d,#beff0c,#c3ff0b,#c8ff0a,#cdff09,#d2ff08,#d7ff07,#dcff06,#e1ff05,#e6ff04,#ebff03,#f0ff02,#f5ff01,#fbff00,#fffe00,#fff900,#fff400,#ffef00,#ffea00,#ffe500,#ffe100,#ffdd00,#ffd800,#ffd400,#ffd000,#ffcd00,#ffc900,#ffc500,#ffc200,#ffbe00)"></i>
<i style="left:0px;top:72px;width:217px;background:linear-gradient(90deg,#b2ff10,#b6ff0f,#bbff0e,#c0ff0d,#c5ff0c,#caff0b,#cfff0a,#d4ff09,#d9ff08,#deff07,#e3ff06,#e8ff05,#edff04,#f2ff03,#f7ff02,#fdff01,#fffc00,#fff700,#fff200,#ffed00,#ffe800,#ffe400,#ffdf00,#ffdb00,#ffd700,#ffd300,#ffcf00,#ffcb00,#ffc700,#ffc400,#ffc000,#ffbd00)"></i>
<i style="left:0px;top:75px;width:217px;background:linear-gradient(90deg,#b3ff11,#b8ff10,#bdff0f,#c2ff0e,#c7ff0d,#cbff0c,#d0ff0b,#d5ff0a,#daff09,#dfff08,#e5ff07,#eaff06,#efff05,#f4ff04,#f9ff03,#ffff01,#fffa00,#fff500,#fff000,#ffeb00,#ffe600,#ffe200,#ffdd00,#ffd900,#ffd500,#ffd100,#ffcd00,#ffc900,#ffc600,#ffc200,#ffbf00,#ffbb00)"></i>
<i style="left:0px;top:78px;width:217px;background:linear-gradient(90deg,#b5ff12,#baff11,#beff10,#c3ff0f,#c8ff0e,#cdff0d,#d2ff0c,#d7ff0b,#dcff0a,#e1ff09,#e6ff08,#ecff07,#f1ff06,#f6ff05,#fcff04,#fffd02,#fff801,#fff300,#ffee00,#ffe900,#ffe400,#ffe000,#ffdc00,#ffd700,#ffd300,#ffcf00,#ffcb00,#ffc800,#ffc400,#ffc100,#ffbd00,#ffba00)"></i>
<i style="left:0px;top:81px;width:217px;background:linear-gradient(90deg,#b6ff13,#bbff12,#c0ff11,#c5ff10,#caff0f,#cfff0e,#d4ff0d,#d9ff0c,#deff0b,#e3ff0a,#e8ff09,#eeff08,#f3ff07,#f8ff06,#feff04,#fffb03,#fff602,#fff101,#ffec00,#ffe700,#ffe300,#ffde00,#ffda00,#ffd600,#ffd200,#ffce00,#ffca00,#ffc600,#ffc300,#ffbf00,#ffbc00,#ffb800)"></i>
<i style="left:0px;top:84px;width:217px;background:linear-gradient(90deg,#b8ff14,#bdff13,#c2ff12,#c7ff11,#ccff10,#d1ff0f,#d6ff0e,#dbff0d,#e0ff0c,#e5ff0b,#eaff0a,#f0ff09,#f5ff08,#faff06,#fffe05,#fff904,#fff403,#ffef02,#ffea01,#ffe500,#ffe100,#ffdc00,#ffd800,#ffd400,#ffd000,#ffcc00,#ffc800,#ffc500,#ffc100,#ffbd00,#ffba00,#ffb700)"></i>
<i style="left:0px;top:87px;width:217px;background:linear-gradient(90deg,#baff15,#bfff14,#c3ff13,#c8ff12,#cdff11,#d2ff10,#d8ff0f,#ddff0e,#e2ff0d,#e7ff0c,#ecff0b,#f2ff0a,#f7ff09,#fcff07,#fffc06,#fff705,#fff204,#ffed03,#ffe802,#ffe401,#ffdf00,#ffdb00,#ffd600,#ffd200,#ffce00,#ffca00,#ffc700,#ffc300,#ffbf00,#ffbc00,#ffb900,#ffb500)"></i>
<i style="left:0px;top:90px;width:217px;background:linear-gradient(90deg,#bbff16,#c0ff15,#c5ff14,#caff13,#cfff12,#d4ff11,#d9ff10,#dfff0f,#e4ff0e,#e9ff0d,#eeff0c,#f4ff0b,#f9ff0a,#feff08,#fffa07,#fff506,#fff005,#ffeb04,#ffe602,#ffe201,#ffdd00,#ffd900,#ffd500,#ffd100,#ffcd00,#ffc900,#ffc500,#ffc100,#ffbe00,#ffba00,#ffb700,#ffb400)"></i>
<i style="left:0px;top:93px;width:217px;background:linear-gradient(90deg,#bdff17,#c2ff16,#c7ff15,#ccff14,#d1ff13,#d6ff12,#dbff11,#e0ff10,#e6ff0f,#ebff0e,#f0ff0d,#f6ff0c,#fbff0a,#fffd09,#fff808,#fff307,#ffee06,#ffe904,#ffe403,#ffe002,#ffdb01,#ffd700,#ffd300,#ffcf00,#ffcb00,#ffc700,#ffc400,#ffc000,#ffbc00,#ffb900,#ffb600,#ffb200)"></i>
<i style="left:0px;top:96px;width:217px;background:linear-gradient(90deg,#bfff18,#c4ff17,#c9ff16,#ceff15,#d3ff14,#d8ff13,#ddff12,#e2ff11,#e8ff10,#edff0f,#f2ff0e,#f8ff0d,#fdff0b,#fffb0a,#fff609,#fff108,#ffec06,#ffe705,#ffe304,#ffde03,#ffda02,#ffd501,#ffd100,#ffcd00,#ffc900,#ffc600,#ffc200,#ffbe00,#ffbb00,#ffb700,#ffb400,#ffb100)"></i>
<i style="left:0px;top:99px;width:217px;background:linear-gradient(90deg,#c0ff19,#c5ff18,#caff17,#cfff16,#d5ff15,#daff14,#dfff13,#e4ff12,#eaff11,#efff10,#f4ff0f,#faff0e,#ffff0c,#fff90b,#fff40a,#ffef09,#ffea07,#ffe506,#ffe105,#ffdc04,#ffd803,#ffd402,#ffd001,#ffcc00,#ffc800,#ffc400,#ffc000,#ffbd00,#ffb900,#ffb600,#ffb300,#ffb000)"></i>
<i style="left:0px;top:102px;width:217px;background:linear-gradient(90deg,#c2ff1a,#c7ff19,#ccff18,#d1ff17,#d6ff16,#dcff15,#e1ff14,#e6ff13,#ecff12,#f1ff11,#f6ff10,#fcff0f,#fffd0d,#fff70c,#fff20b,#ffed09,#ffe808,#ffe307,#ffdf06,#ffda05,#ffd604,#ffd203,#ffce01,#ffca00,#ffc600,#ffc200,#ffbf00,#ffbb00,#ffb800,#ffb500,#ffb100,#ffae00)"></i>
<i style="left:0px;top:105px;width:217px;background:linear-gradient(90deg,#c4ff1b,#c9ff1a,#ceff19,#d3ff18,#d8ff17,#deff16,#e3ff15,#e8ff14,#eeff13,#f3ff12,#f8ff11,#feff10,#fffb0e,#fff50d,#fff00c,#ffeb0a,#ffe609,#ffe208,#ffdd07,#ffd905,#ffd404,#ffd003,#ffcc02,#ffc801,#ffc500,#ffc100,#ffbd00,#ffba00,#ffb600,#ffb300,#ffb000,#ffad00)"></i>
<i style="left:0px;top:108px;width:217px;background:linear-gradient(90deg,#c6ff1c,#cbff1b,#d0ff1a,#d5ff19,#daff18,#dfff17,#e5ff16,#eaff15,#f0ff14,#f5ff13,#fbff12,#fffe11,#fff80f,#fff30e,#ffee0c,#ffe90b,#ffe40a,#ffe009,#ffdb07,#ffd706,#ffd305,#ffcf04,#ffcb03,#ffc702,#ffc301,#ffbf00,#ffbc00,#ffb800,#ffb500,#ffb200,#ffae00,#ffab00)"></i>
<i style="left:0px;top:111px;width:217px;background:linear-gradient(90deg,#c7ff1d,#ccff1c,#d2ff1b,#d7ff1a,#dcff19,#e1ff18,#e7ff17,#ecff16,#f2ff15,#f7ff14,#fdff13,#fffc11,#fff610,#fff10f,#ffec0d,#ffe70c,#ffe20b,#ffde09,#ffd908,#ffd507,#ffd106,#ffcd05,#ffc904,#ffc503,#ffc102,#ffbe01,#ffba00,#ffb700,#ffb300,#ffb000,#ffad00,#ffaa00)"></i>
<i style="left:0px;top:114px;width:217px;background:linear-gradient(90deg,#c9ff1e,#ceff1d,#d3ff1c,#d9ff1b,#deff1a,#e3ff19,#e9ff18,#eeff17,#f4ff16,#f9ff15,#ffff14,#fffa12,#fff411,#ffef0f,#ffea0e,#ffe50d,#ffe10c,#ffdc0a,#ffd809,#ffd308,#ffcf07,#ffcb06,#ffc705,#ffc304,#ffc003,#ffbc02,#ffb901,#ffb500,#ffb200,#ffaf00,#ffac00,#ffa900)"></i>
<i style="left:0px;top:117px;width:217px;background:linear-gradient(90deg,#cbff1f,#d0ff1e,#d5ff1d,#dbff1c,#e0ff1b,#e5ff1a,#ebff19,#f0ff18,#f6ff17,#fbff16,#fffd15,#fff813,#fff212,#ffed10,#ffe80f,#ffe30e,#ffdf0c,#ffda0b,#ffd60a,#ffd209,#ffcd08,#ffc906,#ffc605,#ffc204,#ffbe03,#ffbb02,#ffb701,#ffb400,#ffb000,#ffad00,#ffaa00,#ffa700)"></i>
<i style="left:0px;top:120px;width:217px;background:linear-gradient(90deg,#cdff20,#d2ff1f,#d7ff1e,#ddff1d,#e2ff1c,#e7ff1b,#edff1a,#f2ff19,#f8ff18,#feff17,#fffb16,#fff514,#fff013,#ffeb11,#ffe610,#ffe10e,#ffdd0d,#ffd80c,#ffd40b,#ffd00a,#ffcc08,#ffc807,#ffc406,#ffc005,#ffbd04,#ffb903,#ffb602,#ffb201,#ffaf00,#ffac00,#ffa900,#ffa600)"></i>
<i style="left:0px;top:123px;width:217px;background:linear-gradient(90deg,#cfff21,#d4ff20,#d9ff1f,#deff1e,#e4ff1d,#e9ff1c,#efff1b,#f4ff1a,#faff19,#fffe18,#fff916,#fff315,#ffee13,#ffe912,#ffe411,#ffe00f,#ffdb0e,#ffd70d,#ffd20b,#ffce0a,#ffca09,#ffc608,#ffc207,#ffbf06,#ffbb05,#ffb804,#ffb403,#ffb102,#ffae01,#ffaa00,#ffa700,#ffa400)"></i>
<i style="left:0px;top:126px;width:217px;background:linear-gradient(90deg,#d0ff23,#d6ff22,#dbff21,#e0ff20,#e6ff1f,#ebff1d,#f1ff1c,#f7ff1b,#fcff1a,#fffc19,#fff717,#fff116,#ffec14,#ffe713,#ffe211,#ffde10,#ffd90f,#ffd50e,#ffd10c,#ffcc0b,#ffc80a,#ffc409,#ffc108,#ffbd07,#ffb906,#ffb605,#ffb304,#ffaf03,#ffac02,#ffa901,#ffa600,#ffa300)"></i>
<i style="left:0px;top:129px;width:217px;background:linear-gradient(90deg,#d2ff24,#d8ff23,#ddff22,#e2ff21,#e8ff20,#edff1f,#f3ff1e,#f9ff1c,#feff1b,#fffa1a,#fff518,#ffef17,#ffea15,#ffe514,#ffe012,#ffdc11,#ffd710,#ffd30e,#ffcf0d,#ffcb0c,#ffc70b,#ffc30a,#ffbf08,#ffbb07,#ffb806,#ffb405,#ffb104,#ffae03,#ffab02,#ffa802,#ffa501,#ffa200)"></i>
<i style="left:0px;top:132px;width:217px;background:linear-gradient(90deg,#d4ff25,#daff24,#dfff23,#e4ff22,#eaff21,#f0ff20,#f5ff1f,#fbff1e,#fffd1c,#fff81b,#fff219,#ffed18,#ffe816,#ffe315,#ffdf13,#ffda12,#ffd510,#ffd10f,#ffcd0e,#ffc90d,#ffc50b,#ffc10a,#ffbd09,#ffba08,#ffb607,#ffb306,#ffb005,#ffac04,#ffa903,#ffa602,#ffa301,#ffa000)"></i>
<i style="left:0px;top:135px;width:217px;background:linear-gradient(90deg,#d6ff26,#dbff25,#e1ff24,#e6ff23,#ecff22,#f2ff21,#f7ff20,#fdff1f,#fffb1d,#fff61c,#fff01a,#ffeb18,#ffe617,#ffe115,#ffdd14,#ffd813,#ffd411,#ffcf10,#ffcb0f,#ffc70d,#ffc30c,#ffc00b,#ffbc0a,#ffb809,#ffb508,#ffb107,#ffae06,#ffab05,#ffa804,#ffa503,#ffa202,#ff9f01)"></i>
<i style="left:0px;top:138px;width:217px;background:linear-gradient(90deg,#d8ff27,#ddff26,#e3ff25,#e9ff24,#eeff23,#f4ff22,#f9ff21,#ffff20,#fff91e,#fff41c,#ffee1b,#ffe919,#ffe418,#ffdf16,#ffdb15,#ffd613,#ffd212,#ffce11,#ffca0f,#ffc60e,#ffc20d,#ffbe0c,#ffba0b,#ffb70a,#ffb309,#ffb007,#ffad06,#ffaa05,#ffa605,#ffa304,#ffa003,#ff9e02)"></i>
<i style="left:0px;top:141px;width:217px;background:linear-gradient(90deg,#daff28,#dfff27,#e5ff26,#ebff25,#f0ff24,#f6ff23,#fcff22,#fffd21,#fff71f,#fff11d,#ffec1c,#ffe71a,#ffe218,#ffdd17,#ffd916,#ffd414,#ffd013,#ffcc11,#ffc810,#ffc40f,#ffc00e,#ffbc0d,#ffb90b,#ffb50a,#ffb209,#ffae08,#ffab07,#ffa806,#ffa505,#ffa204,#ff9f03,#ff9c02)"></i>
<i style="left:0px;top:144px;width:217px;background:linear-gradient(90deg,#dcff29,#e1ff28,#e7ff27,#edff26,#f2ff25,#f8ff24,#feff23,#fffa22,#fff520,#ffef1e,#ffea1c,#ffe51b,#ffe019,#ffdc18,#ffd716,#ffd315,#ffce14,#ffca12,#ffc611,#ffc210,#ffbe0e,#ffbb0d,#ffb70c,#ffb40b,#ffb00a,#ffad09,#ffaa08,#ffa707,#ffa406,#ffa105,#ff9e04,#ff9b03)"></i>
</div>
<svg class="b" style="left:0;top:0" width="217" height="147" viewBox="0 0 217 147">
<path d="M-10.0 10.1L227.0 137.0L227 -10L-10 -10Z" fill="#000" fill-opacity="0.4"/>
<rect x="100.7" y="65.9" width="14.5" height="14.5" fill="none" stroke="#fff" stroke-width="1.7" opacity="0.9"/>
<rect x="36.2" y="138.8" width="14.5" height="14.5" fill="none" stroke="#fff" stroke-width="1.7" opacity="0.9"/>
<circle cx="81.3" cy="78.2" r="4.4" fill="#b8b450" stroke="#000" stroke-width="1.1"/>
<circle cx="144.4" cy="8.1" r="4.4" fill="#c4bc10" stroke="#000" stroke-width="1.1"/>
</svg>
</div>
<div class="b" style="left:1048.0px;top:585.4px;width:660.0px;height:1.8px;background:#a6a6a6"></div>
<div class="b" style="left:1042.0px;top:585.4px;width:6.0px;height:1.6px;background:#c0c0c0"></div>
<span class="t" style="left:1032.4px;top:578.7px;font-size:15.5px;color:#d6d6d6;transform:scaleX(0.970);transform-origin:100% 50%;">0</span>
<div class="b" style="left:1048.2px;top:587.0px;width:1.6px;height:6.0px;background:#c0c0c0"></div>
<span class="t" style="left:1044.7px;top:596.4px;font-size:15.5px;color:#d6d6d6;transform:scaleX(0.970);transform-origin:50% 50%;">0</span>
<div class="b" style="left:1042.0px;top:543.0px;width:6.0px;height:1.6px;background:#c0c0c0"></div>
<span class="t" style="left:1010.8px;top:536.3px;font-size:15.5px;color:#d6d6d6;transform:scaleX(0.970);transform-origin:100% 50%;">0,05</span>
<div class="b" style="left:1103.0px;top:587.0px;width:1.6px;height:6.0px;background:#c0c0c0"></div>
<span class="t" style="left:1088.7px;top:596.4px;font-size:15.5px;color:#d6d6d6;transform:scaleX(0.970);transform-origin:50% 50%;">0,05</span>
<div class="b" style="left:1042.0px;top:500.6px;width:6.0px;height:1.6px;background:#c0c0c0"></div>
<span class="t" style="left:1019.5px;top:493.8px;font-size:15.5px;color:#d6d6d6;transform:scaleX(0.970);transform-origin:100% 50%;">0,1</span>
<div class="b" style="left:1157.7px;top:587.0px;width:1.6px;height:6.0px;background:#c0c0c0"></div>
<span class="t" style="left:1147.7px;top:596.4px;font-size:15.5px;color:#d6d6d6;transform:scaleX(0.970);transform-origin:50% 50%;">0,1</span>
<div class="b" style="left:1042.0px;top:458.2px;width:6.0px;height:1.6px;background:#c0c0c0"></div>
<span class="t" style="left:1010.8px;top:451.4px;font-size:15.5px;color:#d6d6d6;transform:scaleX(0.970);transform-origin:100% 50%;">0,15</span>
<div class="b" style="left:1212.5px;top:587.0px;width:1.6px;height:6.0px;background:#c0c0c0"></div>
<span class="t" style="left:1198.2px;top:596.4px;font-size:15.5px;color:#d6d6d6;transform:scaleX(0.970);transform-origin:50% 50%;">0,15</span>
<div class="b" style="left:1042.0px;top:415.7px;width:6.0px;height:1.6px;background:#c0c0c0"></div>
<span class="t" style="left:1019.5px;top:409.0px;font-size:15.5px;color:#d6d6d6;transform:scaleX(0.970);transform-origin:100% 50%;">0,2</span>
<div class="b" style="left:1267.2px;top:587.0px;width:1.6px;height:6.0px;background:#c0c0c0"></div>
<span class="t" style="left:1257.2px;top:596.4px;font-size:15.5px;color:#d6d6d6;transform:scaleX(0.970);transform-origin:50% 50%;">0,2</span>
<div class="b" style="left:1042.0px;top:373.3px;width:6.0px;height:1.6px;background:#c0c0c0"></div>
<span class="t" style="left:1010.8px;top:366.6px;font-size:15.5px;color:#d6d6d6;transform:scaleX(0.970);transform-origin:100% 50%;">0,25</span>
<div class="b" style="left:1322.0px;top:587.0px;width:1.6px;height:6.0px;background:#c0c0c0"></div>
<span class="t" style="left:1307.7px;top:596.4px;font-size:15.5px;color:#d6d6d6;transform:scaleX(0.970);transform-origin:50% 50%;">0,25</span>
<div class="b" style="left:1042.0px;top:330.9px;width:6.0px;height:1.6px;background:#c0c0c0"></div>
<span class="t" style="left:1019.5px;top:324.2px;font-size:15.5px;color:#d6d6d6;transform:scaleX(0.970);transform-origin:100% 50%;">0,3</span>
<div class="b" style="left:1376.7px;top:587.0px;width:1.6px;height:6.0px;background:#c0c0c0"></div>
<span class="t" style="left:1366.7px;top:596.4px;font-size:15.5px;color:#d6d6d6;transform:scaleX(0.970);transform-origin:50% 50%;">0,3</span>
<div class="b" style="left:1042.0px;top:288.5px;width:6.0px;height:1.6px;background:#c0c0c0"></div>
<span class="t" style="left:1010.8px;top:281.8px;font-size:15.5px;color:#d6d6d6;transform:scaleX(0.970);transform-origin:100% 50%;">0,35</span>
<div class="b" style="left:1431.5px;top:587.0px;width:1.6px;height:6.0px;background:#c0c0c0"></div>
<span class="t" style="left:1417.2px;top:596.4px;font-size:15.5px;color:#d6d6d6;transform:scaleX(0.970);transform-origin:50% 50%;">0,35</span>
<div class="b" style="left:1042.0px;top:246.1px;width:6.0px;height:1.6px;background:#c0c0c0"></div>
<span class="t" style="left:1019.5px;top:239.4px;font-size:15.5px;color:#d6d6d6;transform:scaleX(0.970);transform-origin:100% 50%;">0,4</span>
<div class="b" style="left:1486.2px;top:587.0px;width:1.6px;height:6.0px;background:#c0c0c0"></div>
<span class="t" style="left:1476.2px;top:596.4px;font-size:15.5px;color:#d6d6d6;transform:scaleX(0.970);transform-origin:50% 50%;">0,4</span>
<div class="b" style="left:1042.0px;top:203.7px;width:6.0px;height:1.6px;background:#c0c0c0"></div>
<span class="t" style="left:1010.8px;top:196.9px;font-size:15.5px;color:#d6d6d6;transform:scaleX(0.970);transform-origin:100% 50%;">0,45</span>
<div class="b" style="left:1541.0px;top:587.0px;width:1.6px;height:6.0px;background:#c0c0c0"></div>
<span class="t" style="left:1526.7px;top:596.4px;font-size:15.5px;color:#d6d6d6;transform:scaleX(0.970);transform-origin:50% 50%;">0,45</span>
<div class="b" style="left:1042.0px;top:161.3px;width:6.0px;height:1.6px;background:#c0c0c0"></div>
<span class="t" style="left:1019.5px;top:154.5px;font-size:15.5px;color:#d6d6d6;transform:scaleX(0.970);transform-origin:100% 50%;">0,5</span>
<div class="b" style="left:1595.7px;top:587.0px;width:1.6px;height:6.0px;background:#c0c0c0"></div>
<span class="t" style="left:1585.7px;top:596.4px;font-size:15.5px;color:#d6d6d6;transform:scaleX(0.970);transform-origin:50% 50%;">0,5</span>
<div class="b" style="left:1042.0px;top:118.8px;width:6.0px;height:1.6px;background:#c0c0c0"></div>
<span class="t" style="left:1010.8px;top:112.1px;font-size:15.5px;color:#d6d6d6;transform:scaleX(0.970);transform-origin:100% 50%;">0,55</span>
<div class="b" style="left:1650.5px;top:587.0px;width:1.6px;height:6.0px;background:#c0c0c0"></div>
<span class="t" style="left:1636.2px;top:596.4px;font-size:15.5px;color:#d6d6d6;transform:scaleX(0.970);transform-origin:50% 50%;">0,55</span>
<span class="t" style="left:51.8px;top:632.3px;font-size:29px;color:#f0f0f0;transform:scaleX(1.041);transform-origin:0 50%;">Avg dE2000: 6,38</span>
<span class="t" style="left:39.0px;top:674.2px;font-size:29px;color:#f0f0f0;transform:scaleX(1.055);transform-origin:0 50%;">Max dE2000: 10,54</span>
<span class="t" style="left:15.0px;top:724.5px;font-size:29px;color:#f0f0f0;transform:scaleX(1.055);transform-origin:0 50%;">Current Reading</span>
<span class="t" style="left:15.0px;top:765.9px;font-size:23.5px;color:#f0f0f0;transform:scaleX(1.076);transform-origin:0 50%;">x: 0,432</span>
<span class="t" style="left:176.0px;top:765.9px;font-size:23.5px;color:#f0f0f0;transform:scaleX(1.088);transform-origin:0 50%;">y: 0,5385</span>
<span class="t" style="left:15.0px;top:808.1px;font-size:23.5px;color:#f0f0f0;transform:scaleX(1.072);transform-origin:0 50%;">fL: 69,2</span>
<span class="t" style="left:14.5px;top:843.6px;font-size:23.5px;color:#f0f0f0;transform:scaleX(1.141);transform-origin:0 50%;">cd/m²: 237,09</span>
<div class="b" style="left:364.5px;top:664.5px;width:260.0px;height:186.5px;background:#262626"></div>
<div class="b" style="left:364.5px;top:704.5px;width:260.0px;height:1.3px;background:#8c8c8c"></div>
<div class="b" style="left:359.5px;top:704.4px;width:5.0px;height:1.5px;background:#b0b0b0"></div>
<div class="b" style="left:364.5px;top:757.6px;width:260.0px;height:1.3px;background:#8c8c8c"></div>
<div class="b" style="left:359.5px;top:757.5px;width:5.0px;height:1.5px;background:#b0b0b0"></div>
<div class="b" style="left:364.5px;top:809.8px;width:260.0px;height:1.3px;background:#8c8c8c"></div>
<div class="b" style="left:359.5px;top:809.7px;width:5.0px;height:1.5px;background:#b0b0b0"></div>
<div class="b" style="left:363.3px;top:663.3px;width:262.0px;height:1.3px;background:#8e8e8e"></div>
<div class="b" style="left:624.2px;top:663.3px;width:1.3px;height:188.0px;background:#8e8e8e"></div>
<div class="b" style="left:363.2px;top:663.3px;width:1.5px;height:188.0px;background:#b0b0b0"></div>
<div class="b" style="left:363.2px;top:850.5px;width:262.4px;height:1.5px;background:#b0b0b0"></div>
<div class="b" style="left:363.2px;top:851.0px;width:1.5px;height:5.0px;background:#b0b0b0"></div>
<div class="b" style="left:624.1px;top:851.0px;width:1.5px;height:5.0px;background:#b0b0b0"></div>
<span class="t" style="left:341.8px;top:697.8px;font-size:15px;color:#d6d6d6;transform:scaleX(0.950);transform-origin:100% 50%;">50</span>
<span class="t" style="left:350.2px;top:750.9px;font-size:15px;color:#d6d6d6;transform:scaleX(0.950);transform-origin:100% 50%;">0</span>
<span class="t" style="left:336.8px;top:803.1px;font-size:15px;color:#d6d6d6;transform:scaleX(0.950);transform-origin:100% 50%;">-50</span>
<span class="t" style="left:435.1px;top:645.3px;font-size:15px;color:#d6d6d6;transform:scaleX(0.946);transform-origin:50% 50%;">RGB Balance</span>
<span class="t" style="left:474.8px;top:854.8px;font-size:15px;color:#d6d6d6;transform:scaleX(0.970);transform-origin:50% 50%;">100%</span>
<div class="b" style="left:390.0px;top:750.8px;width:69.8px;height:8.0px;box-sizing:border-box;border:1px solid #000;background:linear-gradient(#ff3a3a,#e80000 50%,#b00000)"></div>
<div class="b" style="left:459.8px;top:743.8px;width:70.0px;height:15.0px;box-sizing:border-box;border:1px solid #000;background:linear-gradient(#1a9a1a,#008400 40%,#006200)"></div>
<div class="b" style="left:529.8px;top:757.8px;width:70.4px;height:88.0px;box-sizing:border-box;border:1px solid #000;background:linear-gradient(#4a4aff,#0606ff 22%,#0000f4 55%,#00006a)"></div>
<div class="b" style="left:647.3px;top:632.3px;width:742.9px;height:31.4px;background:linear-gradient(#323232,#3a3a3a 48%,#181818 52%,#1c1c1c)"></div>
<div class="b" style="left:647.3px;top:632.3px;width:19.6px;height:31.4px;background:#000"></div>
<span class="t" style="left:838.5px;top:640.6px;font-size:17px;color:#f6f6f6;transform:scaleX(1.215);transform-origin:0 50%;">20%</span>
<span class="t" style="left:950.0px;top:640.6px;font-size:17px;color:#f6f6f6;transform:scaleX(1.215);transform-origin:0 50%;">40%</span>
<span class="t" style="left:1062.0px;top:640.6px;font-size:17px;color:#f6f6f6;transform:scaleX(1.215);transform-origin:0 50%;">60%</span>
<span class="t" style="left:1173.5px;top:640.6px;font-size:17px;color:#f6f6f6;transform:scaleX(1.215);transform-origin:0 50%;">80%</span>
<span class="t" style="left:1285.0px;top:640.6px;font-size:17px;color:#f6f6f6;transform:scaleX(1.215);transform-origin:0 50%;">100%</span>
<div class="b" style="left:647.3px;top:663.7px;width:742.9px;height:29.6px;background:#454545"></div>
<div class="b" style="left:647.3px;top:663.7px;width:19.6px;height:29.6px;background:linear-gradient(#262626,#343434)"></div>
<span class="t" style="left:674.3px;top:671.3px;font-size:17px;color:#f6f6f6;transform:scaleX(1.242);transform-origin:0 50%;">x: CIE31</span>
<span class="t" style="left:838.5px;top:671.3px;font-size:17px;color:#f6f6f6;transform:scaleX(1.348);transform-origin:0 50%;">0,3279</span>
<span class="t" style="left:950.0px;top:671.3px;font-size:17px;color:#f6f6f6;transform:scaleX(1.348);transform-origin:0 50%;">0,3582</span>
<span class="t" style="left:1062.0px;top:671.3px;font-size:17px;color:#f6f6f6;transform:scaleX(1.348);transform-origin:0 50%;">0,3860</span>
<span class="t" style="left:1173.5px;top:671.3px;font-size:17px;color:#f6f6f6;transform:scaleX(1.348);transform-origin:0 50%;">0,4100</span>
<span class="t" style="left:1285.0px;top:671.3px;font-size:17px;color:#f6f6f6;transform:scaleX(1.348);transform-origin:0 50%;">0,4320</span>
<div class="b" style="left:647.3px;top:693.2px;width:742.9px;height:29.6px;background:#808080"></div>
<div class="b" style="left:647.3px;top:693.2px;width:19.6px;height:29.6px;background:linear-gradient(#262626,#343434)"></div>
<span class="t" style="left:674.3px;top:700.8px;font-size:17px;color:#f6f6f6;transform:scaleX(1.242);transform-origin:0 50%;">y: CIE31</span>
<span class="t" style="left:838.5px;top:700.8px;font-size:17px;color:#f6f6f6;transform:scaleX(1.348);transform-origin:0 50%;">0,3615</span>
<span class="t" style="left:950.0px;top:700.8px;font-size:17px;color:#f6f6f6;transform:scaleX(1.348);transform-origin:0 50%;">0,4136</span>
<span class="t" style="left:1062.0px;top:700.8px;font-size:17px;color:#f6f6f6;transform:scaleX(1.348);transform-origin:0 50%;">0,4610</span>
<span class="t" style="left:1173.5px;top:700.8px;font-size:17px;color:#f6f6f6;transform:scaleX(1.348);transform-origin:0 50%;">0,5024</span>
<span class="t" style="left:1285.0px;top:700.8px;font-size:17px;color:#f6f6f6;transform:scaleX(1.348);transform-origin:0 50%;">0,5385</span>
<div class="b" style="left:647.3px;top:722.7px;width:742.9px;height:29.6px;background:#454545"></div>
<div class="b" style="left:647.3px;top:722.7px;width:19.6px;height:29.6px;background:linear-gradient(#262626,#343434)"></div>
<span class="t" style="left:674.3px;top:730.3px;font-size:17px;color:#f6f6f6;transform:scaleX(1.300);transform-origin:0 50%;">Y</span>
<span class="t" style="left:838.5px;top:730.3px;font-size:17px;color:#f6f6f6;transform:scaleX(1.348);transform-origin:0 50%;">228,1855</span>
<span class="t" style="left:950.0px;top:730.3px;font-size:17px;color:#f6f6f6;transform:scaleX(1.348);transform-origin:0 50%;">229,8741</span>
<span class="t" style="left:1062.0px;top:730.3px;font-size:17px;color:#f6f6f6;transform:scaleX(1.348);transform-origin:0 50%;">230,7398</span>
<span class="t" style="left:1173.5px;top:730.3px;font-size:17px;color:#f6f6f6;transform:scaleX(1.348);transform-origin:0 50%;">231,9525</span>
<span class="t" style="left:1285.0px;top:730.3px;font-size:17px;color:#f6f6f6;transform:scaleX(1.348);transform-origin:0 50%;">237,0902</span>
<div class="b" style="left:647.3px;top:752.2px;width:742.9px;height:29.6px;background:#808080"></div>
<div class="b" style="left:647.3px;top:752.2px;width:19.6px;height:29.6px;background:linear-gradient(#262626,#343434)"></div>
<span class="t" style="left:674.3px;top:759.8px;font-size:17px;color:#f6f6f6;transform:scaleX(1.306);transform-origin:0 50%;">Target x:CIE31</span>
<span class="t" style="left:838.5px;top:759.8px;font-size:17px;color:#f6f6f6;transform:scaleX(1.348);transform-origin:0 50%;">0,3344</span>
<span class="t" style="left:950.0px;top:759.8px;font-size:17px;color:#f6f6f6;transform:scaleX(1.348);transform-origin:0 50%;">0,3563</span>
<span class="t" style="left:1062.0px;top:759.8px;font-size:17px;color:#f6f6f6;transform:scaleX(1.348);transform-origin:0 50%;">0,3772</span>
<span class="t" style="left:1173.5px;top:759.8px;font-size:17px;color:#f6f6f6;transform:scaleX(1.348);transform-origin:0 50%;">0,3964</span>
<span class="t" style="left:1285.0px;top:759.8px;font-size:17px;color:#f6f6f6;transform:scaleX(1.348);transform-origin:0 50%;">0,4193</span>
<div class="b" style="left:647.3px;top:781.7px;width:742.9px;height:29.6px;background:#454545"></div>
<div class="b" style="left:647.3px;top:781.7px;width:19.6px;height:29.6px;background:linear-gradient(#262626,#343434)"></div>
<span class="t" style="left:674.3px;top:789.3px;font-size:17px;color:#f6f6f6;transform:scaleX(1.307);transform-origin:0 50%;">Target y:CIE31</span>
<span class="t" style="left:838.5px;top:789.3px;font-size:17px;color:#f6f6f6;transform:scaleX(1.348);transform-origin:0 50%;">0,3648</span>
<span class="t" style="left:950.0px;top:789.3px;font-size:17px;color:#f6f6f6;transform:scaleX(1.348);transform-origin:0 50%;">0,4011</span>
<span class="t" style="left:1062.0px;top:789.3px;font-size:17px;color:#f6f6f6;transform:scaleX(1.348);transform-origin:0 50%;">0,4356</span>
<span class="t" style="left:1173.5px;top:789.3px;font-size:17px;color:#f6f6f6;transform:scaleX(1.348);transform-origin:0 50%;">0,4674</span>
<span class="t" style="left:1285.0px;top:789.3px;font-size:17px;color:#f6f6f6;transform:scaleX(1.348);transform-origin:0 50%;">0,5053</span>
<div class="b" style="left:647.3px;top:811.2px;width:742.9px;height:29.6px;background:#808080"></div>
<div class="b" style="left:647.3px;top:811.2px;width:19.6px;height:29.6px;background:linear-gradient(#262626,#343434)"></div>
<span class="t" style="left:674.3px;top:818.8px;font-size:17px;color:#f6f6f6;transform:scaleX(1.333);transform-origin:0 50%;">Target Y</span>
<span class="t" style="left:838.5px;top:818.8px;font-size:17px;color:#f6f6f6;transform:scaleX(1.348);transform-origin:0 50%;">222,9224</span>
<span class="t" style="left:950.0px;top:818.8px;font-size:17px;color:#f6f6f6;transform:scaleX(1.348);transform-origin:0 50%;">219,0140</span>
<span class="t" style="left:1062.0px;top:818.8px;font-size:17px;color:#f6f6f6;transform:scaleX(1.348);transform-origin:0 50%;">216,0091</span>
<span class="t" style="left:1173.5px;top:818.8px;font-size:17px;color:#f6f6f6;transform:scaleX(1.348);transform-origin:0 50%;">213,6891</span>
<span class="t" style="left:1285.0px;top:818.8px;font-size:17px;color:#f6f6f6;transform:scaleX(1.348);transform-origin:0 50%;">211,3550</span>
<div class="b" style="left:647.3px;top:840.7px;width:742.9px;height:29.6px;background:#454545"></div>
<div class="b" style="left:647.3px;top:840.7px;width:19.6px;height:29.6px;background:linear-gradient(#262626,#343434)"></div>
<span class="t" style="left:674.3px;top:848.3px;font-size:17px;color:#f6f6f6;transform:scaleX(1.315);transform-origin:0 50%;">ΔE 2000</span>
<span class="t" style="left:838.5px;top:848.3px;font-size:17px;color:#f6f6f6;transform:scaleX(1.348);transform-origin:0 50%;">2,2578</span>
<span class="t" style="left:950.0px;top:848.3px;font-size:17px;color:#f6f6f6;transform:scaleX(1.348);transform-origin:0 50%;">2,7785</span>
<span class="t" style="left:1062.0px;top:848.3px;font-size:17px;color:#f6f6f6;transform:scaleX(1.348);transform-origin:0 50%;">3,9665</span>
<span class="t" style="left:1173.5px;top:848.3px;font-size:17px;color:#f6f6f6;transform:scaleX(1.348);transform-origin:0 50%;">5,0080</span>
<span class="t" style="left:1285.0px;top:848.3px;font-size:17px;color:#f6f6f6;transform:scaleX(1.348);transform-origin:0 50%;">5,9265</span>
<div class="b" style="left:0.0px;top:877.7px;width:1719.0px;height:61.3px;background:linear-gradient(#242424,#3c3c3c)"></div>
<div class="b" style="left:0.0px;top:939.0px;width:1719.0px;height:2.0px;background:#1d4034"></div>
<div class="b" style="left:0.0px;top:878.0px;width:45.0px;height:61.0px;background:linear-gradient(#9c9c9c,#6a6a6a);border-radius:4px"></div>
<div class="b" style="left:15.0px;top:879.5px;width:15.0px;height:15.0px;border-radius:50%;background:linear-gradient(#5c5c5c,#8a8a8a)"></div>
<div class="b" style="left:18.5px;top:884px;border-left:4px solid transparent;border-right:4px solid transparent;border-bottom:5px solid #2a2a2a"></div>
<div class="b" style="left:5.0px;top:904.0px;width:35.3px;height:30.2px;background:#ffff00;border-radius:3.5px;box-shadow:0 0 0 1px rgba(90,90,40,.6)"></div>
<div class="b" style="left:51.0px;top:878.0px;width:149.7px;height:61.0px;background:linear-gradient(#a0a0a0,#888 20%,#646464);border-radius:4px;box-shadow:inset 0 1px 0 rgba(255,255,255,.12)"></div>
<div class="b" style="left:57.0px;top:883.7px;width:139.0px;height:35.0px;background:#c1c3a9;border-radius:3px;box-shadow:inset 0 1px 1.5px rgba(60,60,30,.6),0 1px 0 rgba(255,255,255,.15)"></div>
<span class="t" style="left:115.0px;top:924.9px;font-size:11px;color:#2c2c2c;">20%</span>
<div class="b" style="left:203.0px;top:878.0px;width:149.7px;height:61.0px;background:linear-gradient(#a0a0a0,#888 20%,#646464);border-radius:4px;box-shadow:inset 0 1px 0 rgba(255,255,255,.12)"></div>
<div class="b" style="left:209.0px;top:883.7px;width:139.0px;height:35.0px;background:#c1c38a;border-radius:3px;box-shadow:inset 0 1px 1.5px rgba(60,60,30,.6),0 1px 0 rgba(255,255,255,.15)"></div>
<span class="t" style="left:267.0px;top:924.9px;font-size:11px;color:#2c2c2c;">40%</span>
<div class="b" style="left:355.0px;top:878.0px;width:149.7px;height:61.0px;background:linear-gradient(#a0a0a0,#888 20%,#646464);border-radius:4px;box-shadow:inset 0 1px 0 rgba(255,255,255,.12)"></div>
<div class="b" style="left:361.0px;top:883.7px;width:139.0px;height:35.0px;background:#c1c272;border-radius:3px;box-shadow:inset 0 1px 1.5px rgba(60,60,30,.6),0 1px 0 rgba(255,255,255,.15)"></div>
<span class="t" style="left:419.0px;top:924.9px;font-size:11px;color:#2c2c2c;">60%</span>
<div class="b" style="left:507.0px;top:878.0px;width:149.7px;height:61.0px;background:linear-gradient(#a0a0a0,#888 20%,#646464);border-radius:4px;box-shadow:inset 0 1px 0 rgba(255,255,255,.12)"></div>
<div class="b" style="left:513.0px;top:883.7px;width:139.0px;height:35.0px;background:#c1c153;border-radius:3px;box-shadow:inset 0 1px 1.5px rgba(60,60,30,.6),0 1px 0 rgba(255,255,255,.15)"></div>
<span class="t" style="left:571.0px;top:924.9px;font-size:11px;color:#2c2c2c;">80%</span>
<div class="b" style="left:659.0px;top:878.0px;width:149.7px;height:61.0px;background:linear-gradient(#1a1a1a,#343434);border-radius:4px;box-shadow:inset 0 1px 0 rgba(255,255,255,.12)"></div>
<div class="b" style="left:665.0px;top:883.7px;width:139.0px;height:35.0px;background:#c3c300;border-radius:3px;box-shadow:inset 0 1px 1.5px rgba(60,60,30,.6),0 1px 0 rgba(255,255,255,.15)"></div>
<span class="t" style="left:719.9px;top:924.9px;font-size:11px;color:#fff;font-weight:bold;">100%</span>
<div class="b" style="left:1396.0px;top:878.0px;width:47.5px;height:18.0px;background:linear-gradient(#9a9a9a,#888);border-radius:4px 4px 0 0"></div>
<div class="b" style="left:1396.0px;top:897.0px;width:47.5px;height:41.5px;background:linear-gradient(#8c8c8c,#6c6c6c);border-radius:0 0 4px 4px"></div>
<div class="b" style="left:1412.0px;top:880.0px;width:15.0px;height:15.0px;border-radius:50%;background:linear-gradient(#6a6a6a,#9a9a9a)"></div>
<div class="b" style="left:1415.5px;top:884.5px;border-left:4px solid transparent;border-right:4px solid transparent;border-bottom:5px solid #2a2a2a"></div>
<div class="b" style="left:1404.5px;top:902.5px;width:30.0px;height:30.0px;box-sizing:border-box;border:2.2px solid #2a2a2a;border-radius:5px;background:linear-gradient(#a4a4a4,#9a9a9a 50%,#7c7c7c 52%,#8a8a8a)"></div>
<div class="b" style="left:1412.5px;top:910.5px;width:14.0px;height:14.0px;background:#000"></div>
<div class="b" style="left:1445.3px;top:878.0px;width:44.6px;height:29.4px;background:linear-gradient(#a2a2a2,#8e8e8e 50%,#7a7a7a);border-radius:3px"></div>
<div class="b" style="left:1457.8px;top:882.5px;width:20.0px;height:20.0px;border-radius:50%;background:linear-gradient(#7a7a7a,#a4a4a4)"></div>
<div class="b" style="left:1490.6px;top:878.0px;width:44.6px;height:29.4px;background:linear-gradient(#a2a2a2,#8e8e8e 50%,#7a7a7a);border-radius:3px"></div>
<div class="b" style="left:1503.1px;top:882.5px;width:20.0px;height:20.0px;border-radius:50%;background:linear-gradient(#7a7a7a,#a4a4a4)"></div>
<div class="b" style="left:1535.9px;top:878.0px;width:44.6px;height:29.4px;background:linear-gradient(#a2a2a2,#8e8e8e 50%,#7a7a7a);border-radius:3px"></div>
<div class="b" style="left:1548.4px;top:882.5px;width:20.0px;height:20.0px;border-radius:50%;background:linear-gradient(#7a7a7a,#a4a4a4)"></div>
<div class="b" style="left:1581.2px;top:878.0px;width:44.6px;height:29.4px;background:linear-gradient(#a2a2a2,#8e8e8e 50%,#7a7a7a);border-radius:3px"></div>
<div class="b" style="left:1593.7px;top:882.5px;width:20.0px;height:20.0px;border-radius:50%;background:linear-gradient(#7a7a7a,#a4a4a4)"></div>
<div class="b" style="left:1626.5px;top:878.0px;width:44.6px;height:29.4px;background:linear-gradient(#a2a2a2,#8e8e8e 50%,#7a7a7a);border-radius:3px"></div>
<div class="b" style="left:1639.0px;top:882.5px;width:20.0px;height:20.0px;border-radius:50%;background:linear-gradient(#7a7a7a,#a4a4a4)"></div>
<div class="b" style="left:1463.3px;top:888.0px;width:8.6px;height:8.6px;background:#2c2c2c"></div>
<div class="b" style="left:1511px;top:887.3px;border-top:5px solid transparent;border-bottom:5px solid transparent;border-left:8.5px solid #2c2c2c"></div>
<span class="t" style="left:1551.6px;top:887.5px;font-size:10px;color:#2c2c2c;font-weight:bold;">[··]</span>
<span class="t" style="left:1594px;top:881px;width:20px;text-align:center;font-size:15px;line-height:22px;color:#2c2c2c;font-family:'DejaVu Sans',sans-serif;font-weight:bold">∞</span>
<span class="t" style="left:1639px;top:881px;width:20px;text-align:center;font-size:15px;line-height:22px;color:#2c2c2c;font-family:'DejaVu Sans',sans-serif;font-weight:bold">⟳</span>
<div class="b" style="left:1671.5px;top:878.0px;width:46.0px;height:29.4px;background:linear-gradient(#2a2a2a,#3a3a3a)"></div>
<div class="b" style="left:1684.0px;top:882.5px;width:20.0px;height:20.0px;border-radius:50%;background:linear-gradient(#2c2c2c,#444)"></div>
<div class="b" style="left:1445.3px;top:909.5px;width:135.7px;height:29.0px;background:linear-gradient(#a6a6a6,#929292 50%,#7e7e7e);border-radius:3px"></div>
<div class="b" style="left:1582.0px;top:909.5px;width:135.5px;height:29.0px;background:linear-gradient(#a6a6a6,#929292 50%,#7e7e7e);border-radius:3px"></div>
<div class="b" style="left:1466.0px;top:914.0px;width:20.0px;height:20.0px;border-radius:50%;background:linear-gradient(#7a7a7a,#a4a4a4)"></div>
<div class="b" style="left:1679.0px;top:914.0px;width:20.0px;height:20.0px;border-radius:50%;background:linear-gradient(#7a7a7a,#a4a4a4)"></div>
<span class="t" style="left:1471.3px;top:915.1px;font-size:17px;color:#333;">«</span>
<span class="t" style="left:1684.3px;top:915.1px;font-size:17px;color:#333;">»</span>
<span class="t" style="left:1502.7px;top:914.1px;font-size:20px;color:#3a3a3a;font-weight:bold;transform:scaleX(1.056);transform-origin:0 50%;">Back</span>
<span class="t" style="left:1609.5px;top:914.1px;font-size:20px;color:#3a3a3a;font-weight:bold;transform:scaleX(1.188);transform-origin:0 50%;">Next</span>
</body></html>
